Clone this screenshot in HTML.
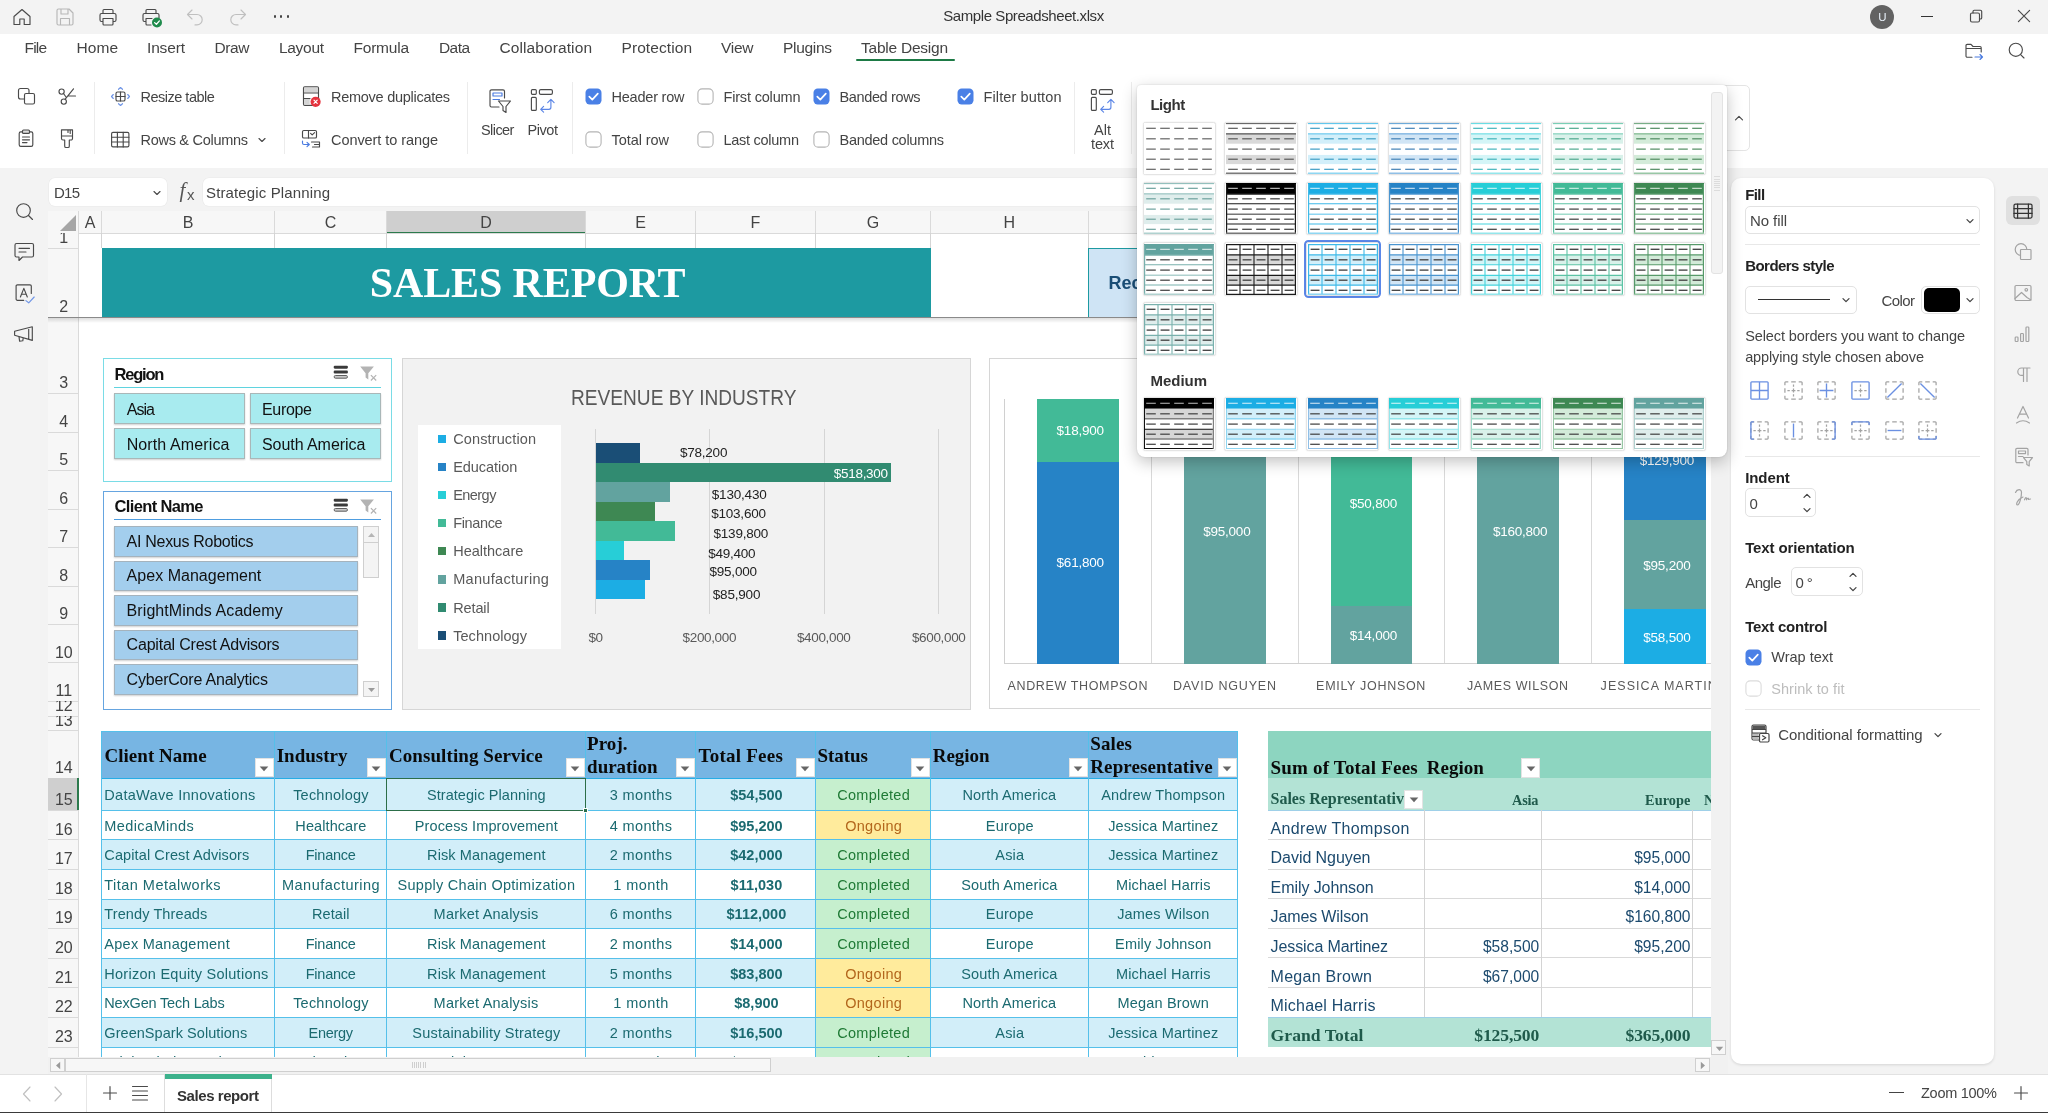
<!DOCTYPE html>
<html><head><meta charset="utf-8"><title>Sample Spreadsheet.xlsx</title>
<style>
html,body{margin:0;padding:0;}
body{width:2048px;height:1113px;overflow:hidden;position:relative;background:#f3f3f3;font-family:'Liberation Sans',sans-serif;}
div,svg,span.t{position:absolute;}
#root{left:0;top:0;width:2048px;height:1113px;will-change:transform;}
span.t{white-space:nowrap;}
.clip{overflow:hidden;}
</style></head>
<body>
<div id="root">
<div style="left:0px;top:0px;width:2048px;height:33.6px;background:#f3f3f3;"></div>
<svg style="left:12px;top:7px;" width="20" height="20" viewBox="0 0 20 20" fill="none" stroke="#4a4a4a" stroke-width="1.15" stroke-linecap="round" stroke-linejoin="round"><path d="M2 9.5 L10 2.5 L18 9.5 V17.5 H12.2 V12 H7.8 V17.5 H2 Z"/></svg>
<svg style="left:55px;top:7px;opacity:.35;" width="20" height="20" viewBox="0 0 20 20" fill="none" stroke="#4a4a4a" stroke-width="1.15" stroke-linecap="round" stroke-linejoin="round"><path d="M2 3.5 a1.5 1.5 0 0 1 1.5 -1.5 H14 L18 6 V16.5 a1.5 1.5 0 0 1 -1.5 1.5 H3.5 a1.5 1.5 0 0 1 -1.5 -1.5 Z M6 2 V7 H13 V2 M5.5 18 V11.5 H14.5 V18"/></svg>
<svg style="left:98px;top:7px;" width="20" height="20" viewBox="0 0 20 20" fill="none" stroke="#4a4a4a" stroke-width="1.15" stroke-linecap="round" stroke-linejoin="round"><path d="M5 6.5 V3.5 a1 1 0 0 1 1 -1 H14 a1 1 0 0 1 1 1 V6.5 M5 14.5 H3.5 a1.5 1.5 0 0 1 -1.5 -1.5 V8 a1.5 1.5 0 0 1 1.5 -1.5 H16.5 a1.5 1.5 0 0 1 1.5 1.5 V13 a1.5 1.5 0 0 1 -1.5 1.5 H15 M5 11.5 H15 V17 a1 1 0 0 1 -1 1 H6 a1 1 0 0 1 -1 -1 Z"/></svg>
<svg style="left:141px;top:7px;" width="24" height="22" viewBox="0 0 24 22" fill="none" stroke="#4a4a4a" stroke-width="1.15" stroke-linecap="round" stroke-linejoin="round"><path d="M5 6.5 V3.5 a1 1 0 0 1 1 -1 H14 a1 1 0 0 1 1 1 V6.5 M5 14.5 H3.5 a1.5 1.5 0 0 1 -1.5 -1.5 V8 a1.5 1.5 0 0 1 1.5 -1.5 H16.5 a1.5 1.5 0 0 1 1.5 1.5 V11 M5 17 V11.5 H11 M5 17 a1 1 0 0 0 1 1 H10"/><circle cx="16" cy="15.5" r="5" fill="#1f8b4c" stroke="none"/><path d="M13.6 15.6 L15.4 17.3 L18.4 13.9" stroke="#fff" stroke-width="1.3"/></svg>
<svg style="left:185px;top:7px;opacity:.3;" width="20" height="20" viewBox="0 0 20 20" fill="none" stroke="#4a4a4a" stroke-width="1.15" stroke-linecap="round" stroke-linejoin="round"><path d="M7 3 L2.5 7.5 L7 12 M2.5 7.5 H12 a5.2 5.2 0 0 1 0 10.4 H10"/></svg>
<svg style="left:228px;top:7px;opacity:.3;" width="20" height="20" viewBox="0 0 20 20" fill="none" stroke="#4a4a4a" stroke-width="1.15" stroke-linecap="round" stroke-linejoin="round"><path d="M13 3 L17.5 7.5 L13 12 M17.5 7.5 H8 a5.2 5.2 0 0 0 0 10.4 H10"/></svg>
<div style="left:273.5px;top:15.3px;width:2.4px;height:2.4px;background:#444;border-radius:50%;"></div>
<div style="left:280.0px;top:15.3px;width:2.4px;height:2.4px;background:#444;border-radius:50%;"></div>
<div style="left:286.5px;top:15.3px;width:2.4px;height:2.4px;background:#444;border-radius:50%;"></div>
<span class="t" style="left:943.20px;top:5.00px;font-size:15px;line-height:21px;color:#333;letter-spacing:-0.413px;">Sample Spreadsheet.xlsx</span>
<div style="left:1870.2px;top:4.9px;width:24.2px;height:24.2px;background:#626262;border-radius:50%;"></div>
<span class="t" style="left:1878.15px;top:9.30px;font-size:11.5px;line-height:16px;color:#e8f0f8;">U</span>
<div style="left:1921px;top:16px;width:12px;height:1.3px;background:#333;"></div>
<svg style="left:1967.7px;top:7.6px;" width="16" height="16" viewBox="0 0 16 16" fill="none" stroke="#4a4a4a" stroke-width="1.15" stroke-linecap="round" stroke-linejoin="round"><rect x="2.5" y="5" width="9" height="9" rx="1.5"/><path d="M5 5 V3.5 a1.3 1.3 0 0 1 1.3 -1.3 H12.4 a1.3 1.3 0 0 1 1.3 1.3 V9.7 a1.3 1.3 0 0 1 -1.3 1.3 H11.5"/></svg>
<svg style="left:2016.4px;top:7.7px;" width="16" height="16" viewBox="0 0 16 16" fill="none" stroke="#4a4a4a" stroke-width="1.15" stroke-linecap="round" stroke-linejoin="round"><path d="M2.4 2.4 L13.6 13.6 M13.6 2.4 L2.4 13.6"/></svg>
<div style="left:0px;top:33.6px;width:2048px;height:134.4px;background:#fff;"></div>
<span class="t" style="left:24.50px;top:36.50px;font-size:15.5px;line-height:22px;color:#444;letter-spacing:-0.825px;">File</span>
<span class="t" style="left:76.50px;top:36.50px;font-size:15.5px;line-height:22px;color:#444;letter-spacing:0.051px;">Home</span>
<span class="t" style="left:147.00px;top:36.50px;font-size:15.5px;line-height:22px;color:#444;letter-spacing:-0.153px;">Insert</span>
<span class="t" style="left:214.50px;top:36.50px;font-size:15.5px;line-height:22px;color:#444;letter-spacing:-0.390px;">Draw</span>
<span class="t" style="left:279.00px;top:36.50px;font-size:15.5px;line-height:22px;color:#444;letter-spacing:-0.308px;">Layout</span>
<span class="t" style="left:353.50px;top:36.50px;font-size:15.5px;line-height:22px;color:#444;letter-spacing:-0.224px;">Formula</span>
<span class="t" style="left:439.00px;top:36.50px;font-size:15.5px;line-height:22px;color:#444;letter-spacing:-0.580px;">Data</span>
<span class="t" style="left:499.50px;top:36.50px;font-size:15.5px;line-height:22px;color:#444;letter-spacing:0.097px;">Collaboration</span>
<span class="t" style="left:621.50px;top:36.50px;font-size:15.5px;line-height:22px;color:#444;letter-spacing:0.079px;">Protection</span>
<span class="t" style="left:721.00px;top:36.50px;font-size:15.5px;line-height:22px;color:#444;letter-spacing:-0.272px;">View</span>
<span class="t" style="left:783.00px;top:36.50px;font-size:15.5px;line-height:22px;color:#444;letter-spacing:-0.306px;">Plugins</span>
<span class="t" style="left:861.00px;top:36.50px;font-size:15.5px;line-height:22px;color:#444;letter-spacing:-0.237px;">Table Design</span>
<div style="left:856px;top:59px;width:99px;height:2px;background:#1d7a45;border-radius:1px;"></div>
<svg style="left:1963px;top:40px;" width="22" height="22" viewBox="0 0 22 22" fill="none" stroke="#4a4a4a" stroke-width="1.15" stroke-linecap="round" stroke-linejoin="round"><path d="M3 16 V5.5 a1.2 1.2 0 0 1 1.2 -1.2 H8 L10 6.5 H17 a1.2 1.2 0 0 1 1.2 1.2 V12 M3 16 a1.2 1.2 0 0 0 1.2 1.2 H9 M3 8.5 H18"/><path d="M12 17 H19.5 M17 14.5 L19.5 17 L17 19.5" stroke="#4a7be0"/></svg>
<svg style="left:2006px;top:40px;" width="22" height="22" viewBox="0 0 22 22" fill="none" stroke="#4a4a4a" stroke-width="1.15" stroke-linecap="round" stroke-linejoin="round"><circle cx="9.8" cy="9.8" r="6.6"/><path d="M14.6 14.6 L18 18"/></svg>
<div style="left:93.5px;top:82px;width:1px;height:72px;background:#ececec;"></div>
<div style="left:284.0px;top:82px;width:1px;height:72px;background:#ececec;"></div>
<div style="left:466.5px;top:82px;width:1px;height:72px;background:#ececec;"></div>
<div style="left:571.5px;top:82px;width:1px;height:72px;background:#ececec;"></div>
<div style="left:1073.5px;top:82px;width:1px;height:72px;background:#ececec;"></div>
<div style="left:1131.0px;top:82px;width:1px;height:72px;background:#ececec;"></div>
<svg style="left:16px;top:86px;" width="20" height="20" viewBox="0 0 20 20" fill="none" stroke="#4a4a4a" stroke-width="1.15" stroke-linecap="round" stroke-linejoin="round"><rect x="2.5" y="2.5" width="10.5" height="10.5" rx="2" /><rect x="8.5" y="7.5" width="10" height="10.5" rx="1.5" fill="#fff"/></svg>
<svg style="left:57px;top:86px;" width="20" height="20" viewBox="0 0 20 20" fill="none" stroke="#4a4a4a" stroke-width="1.15" stroke-linecap="round" stroke-linejoin="round"><circle cx="4.6" cy="5.6" r="2.6"/><circle cx="6.8" cy="15.6" r="2.6"/><path d="M6.5 7.5 L9 11 M8.2 13.2 L16.5 2.8 M11.5 10 H18.5"/></svg>
<svg style="left:16px;top:128px;" width="20" height="20" viewBox="0 0 20 20" fill="none" stroke="#4a4a4a" stroke-width="1.15" stroke-linecap="round" stroke-linejoin="round"><rect x="3.2" y="3.8" width="13.6" height="14.6" rx="1.6"/><rect x="6.5" y="2" width="7" height="3.4" rx="1" fill="#ddd"/><path d="M6.5 9 H13.5 M6.5 11.8 H13.5 M6.5 14.6 H11"/></svg>
<svg style="left:57px;top:128px;" width="20" height="22" viewBox="0 0 20 22" fill="none" stroke="#4a4a4a" stroke-width="1.15" stroke-linecap="round" stroke-linejoin="round"><path d="M4.5 1.8 H15.5 V10.5 a1.5 1.5 0 0 1 -1.5 1.5 H12.3 V18.2 a1.3 1.3 0 0 1 -1.3 1.3 H9 a1.3 1.3 0 0 1 -1.3 -1.3 V12 H6 a1.5 1.5 0 0 1 -1.5 -1.5 Z M4.5 8 H15.5 M11 2 V4.5 M13.2 2 V5.5"/></svg>
<svg style="left:110px;top:86px;" width="22" height="22" viewBox="0 0 22 22" fill="none" stroke="#4a4a4a" stroke-width="1.15" stroke-linecap="round" stroke-linejoin="round"><rect x="6" y="6" width="9" height="9" rx="1.6"/><path d="M10.5 6 V15 M6 10.5 H15"/><g stroke="#6f95e6"><path d="M8.5 3.3 L10.5 1.5 L12.5 3.3 M8.5 17.7 L10.5 19.5 L12.5 17.7 M3.3 8.5 L1.5 10.5 L3.3 12.5 M17.7 8.5 L19.5 10.5 L17.7 12.5"/></g></svg>
<span class="t" style="left:140.50px;top:86.50px;font-size:14.5px;line-height:20px;color:#444;letter-spacing:-0.499px;">Resize table</span>
<svg style="left:110px;top:130px;" width="22" height="20" viewBox="0 0 22 20" fill="none" stroke="#4a4a4a" stroke-width="1.15" stroke-linecap="round" stroke-linejoin="round"><rect x="1.6" y="2.3" width="17.3" height="14.6" rx="1.4"/><path d="M1.6 7.2 H18.9 M1.6 12 H18.9 M7.4 2.3 V16.9 M13.2 2.3 V16.9"/></svg>
<span class="t" style="left:140.50px;top:129.50px;font-size:14.5px;line-height:20px;color:#444;letter-spacing:-0.285px;">Rows &amp; Columns</span>
<svg style="left:257px;top:135px;" width="10" height="10" viewBox="0 0 10 10" fill="none" stroke="#4a4a4a" stroke-width="1.15" stroke-linecap="round" stroke-linejoin="round"><path d="M2 3.5 L5 6.5 L8 3.5"/></svg>
<svg style="left:301px;top:85px;" width="24" height="24" viewBox="0 0 24 24" fill="none" stroke="#4a4a4a" stroke-width="1.15" stroke-linecap="round" stroke-linejoin="round"><rect x="2.5" y="1.8" width="15" height="18.5" rx="1.3"/><path d="M2.5 7.8 H17.5 M2.5 13.6 H9"/><rect x="3.1" y="2.4" width="13.8" height="5" fill="#d4d4d4" stroke="none"/><rect x="3.1" y="14" width="5.6" height="5.7" fill="#d4d4d4" stroke="none"/><circle cx="14.6" cy="16.8" r="5.1" fill="#e5343f" stroke="none"/><path d="M13 15.2 L16.2 18.4 M16.2 15.2 L13 18.4" stroke="#fff" stroke-width="1.2"/></svg>
<span class="t" style="left:331.00px;top:86.50px;font-size:14.5px;line-height:20px;color:#444;letter-spacing:-0.270px;">Remove duplicates</span>
<svg style="left:300px;top:128px;" width="24" height="22" viewBox="0 0 24 22" fill="none" stroke="#4a4a4a" stroke-width="1.15" stroke-linecap="round" stroke-linejoin="round"><rect x="2.5" y="2.5" width="14" height="7.5" rx="1.3"/><path d="M8.5 2.5 V10 M10.6 5.3 L12.2 6.9 L14.6 4.6"/><path d="M11.5 14 H19.5 V19 H12.5 M14.5 16.5 H19"/><path d="M2.5 13 V15 a1.5 1.5 0 0 0 1.5 1.5 H9 M7 14.3 L9.3 16.5 L7 18.7" stroke="#4a7be0"/></svg>
<span class="t" style="left:331.00px;top:129.50px;font-size:14.5px;line-height:20px;color:#444;letter-spacing:-0.067px;">Convert to range</span>
<svg style="left:485.8px;top:87px;" width="26" height="28" viewBox="0 0 26 28" fill="none" stroke="#4a4a4a" stroke-width="1.15" stroke-linecap="round" stroke-linejoin="round"><path d="M18.5 11 V4.3 a1.5 1.5 0 0 0 -1.5 -1.5 H5.5 a1.5 1.5 0 0 0 -1.5 1.5 V18.5 a1.5 1.5 0 0 0 1.5 1.5 H13"/><rect x="7" y="6" width="9" height="3" stroke="#4a7be0"/><path d="M7 12.5 H13.5" stroke="#4a7be0"/><path d="M12.5 14 H24.5 L20 19.5 V25.5 L17 23.5 V19.5 Z" fill="#fff"/></svg>
<span class="t" style="left:480.95px;top:119.50px;font-size:14.5px;line-height:20px;color:#444;letter-spacing:-0.551px;">Slicer</span>
<svg style="left:530px;top:87px;" width="26" height="28" viewBox="0 0 26 28" fill="none" stroke="#4a4a4a" stroke-width="1.15" stroke-linecap="round" stroke-linejoin="round"><rect x="1.4" y="2.6" width="4.9" height="4.7" rx="1"/><rect x="9.4" y="2.6" width="13" height="4.7" rx="1.4"/><rect x="1.4" y="10.4" width="4.9" height="13" rx="1"/><path d="M20.9 12.6 V20.3 a2 2 0 0 1 -2 2 H10.9 M17.7 15.6 L20.9 12.4 L24.1 15.6 M13.6 19.4 L10.7 22.3 L13.6 25.2" stroke="#5c86e6"/></svg>
<span class="t" style="left:527.45px;top:119.50px;font-size:14.5px;line-height:20px;color:#444;letter-spacing:-0.434px;">Pivot</span>
<svg style="left:1089.7px;top:87px;" width="26" height="28" viewBox="0 0 26 28" fill="none" stroke="#4a4a4a" stroke-width="1.15" stroke-linecap="round" stroke-linejoin="round"><rect x="1.4" y="2.6" width="4.9" height="4.7" rx="1"/><rect x="9.4" y="2.6" width="13" height="4.7" rx="1.4"/><rect x="1.4" y="10.4" width="4.9" height="13" rx="1"/><path d="M20.9 12.6 V20.3 a2 2 0 0 1 -2 2 H10.9 M17.7 15.6 L20.9 12.4 L24.1 15.6 M13.6 19.4 L10.7 22.3 L13.6 25.2" stroke="#5c86e6"/></svg>
<span class="t" style="left:1094.00px;top:119.50px;font-size:14.5px;line-height:20px;color:#444;letter-spacing:0.039px;">Alt</span>
<span class="t" style="left:1091.00px;top:133.50px;font-size:14.5px;line-height:20px;color:#444;letter-spacing:-0.124px;">text</span>
<svg style="left:585px;top:88px" width="17" height="17" viewBox="0 0 17 17"><rect x="0.5" y="0.5" width="16" height="16" rx="4.2" fill="#4a80e6"/><path d="M4.3 8.7 L7.3 11.6 L12.8 5.6" fill="none" stroke="#fff" stroke-width="1.7" stroke-linecap="round" stroke-linejoin="round"/></svg>
<span class="t" style="left:611.50px;top:86.50px;font-size:14.5px;line-height:20px;color:#444;letter-spacing:-0.217px;">Header row</span>
<svg style="left:697px;top:88px" width="17" height="17" viewBox="0 0 17 17"><rect x="0.9" y="0.9" width="15.2" height="15.2" rx="4.2" fill="#fff" stroke="#b4b4b4" stroke-width="1.1"/></svg>
<span class="t" style="left:723.50px;top:86.50px;font-size:14.5px;line-height:20px;color:#444;letter-spacing:-0.178px;">First column</span>
<svg style="left:813px;top:88px" width="17" height="17" viewBox="0 0 17 17"><rect x="0.5" y="0.5" width="16" height="16" rx="4.2" fill="#4a80e6"/><path d="M4.3 8.7 L7.3 11.6 L12.8 5.6" fill="none" stroke="#fff" stroke-width="1.7" stroke-linecap="round" stroke-linejoin="round"/></svg>
<span class="t" style="left:839.50px;top:86.50px;font-size:14.5px;line-height:20px;color:#444;letter-spacing:-0.364px;">Banded rows</span>
<svg style="left:957px;top:88px" width="17" height="17" viewBox="0 0 17 17"><rect x="0.5" y="0.5" width="16" height="16" rx="4.2" fill="#4a80e6"/><path d="M4.3 8.7 L7.3 11.6 L12.8 5.6" fill="none" stroke="#fff" stroke-width="1.7" stroke-linecap="round" stroke-linejoin="round"/></svg>
<span class="t" style="left:983.50px;top:86.50px;font-size:14.5px;line-height:20px;color:#444;letter-spacing:0.120px;">Filter button</span>
<svg style="left:585px;top:131px" width="17" height="17" viewBox="0 0 17 17"><rect x="0.9" y="0.9" width="15.2" height="15.2" rx="4.2" fill="#fff" stroke="#b4b4b4" stroke-width="1.1"/></svg>
<span class="t" style="left:611.50px;top:129.50px;font-size:14.5px;line-height:20px;color:#444;letter-spacing:-0.065px;">Total row</span>
<svg style="left:697px;top:131px" width="17" height="17" viewBox="0 0 17 17"><rect x="0.9" y="0.9" width="15.2" height="15.2" rx="4.2" fill="#fff" stroke="#b4b4b4" stroke-width="1.1"/></svg>
<span class="t" style="left:723.50px;top:129.50px;font-size:14.5px;line-height:20px;color:#444;letter-spacing:-0.268px;">Last column</span>
<svg style="left:813px;top:131px" width="17" height="17" viewBox="0 0 17 17"><rect x="0.9" y="0.9" width="15.2" height="15.2" rx="4.2" fill="#fff" stroke="#b4b4b4" stroke-width="1.1"/></svg>
<span class="t" style="left:839.50px;top:129.50px;font-size:14.5px;line-height:20px;color:#444;letter-spacing:-0.270px;">Banded columns</span>
<div style="left:1137px;top:84.5px;width:611.3px;height:64.9px;border:1px solid #e4e4e4;border-radius:5px;background:#fff;"></div>
<svg style="left:1733px;top:113px;" width="12" height="10" viewBox="0 0 12 10" fill="none" stroke="#4a4a4a" stroke-width="1.15" stroke-linecap="round" stroke-linejoin="round"><path d="M2.5 6.8 L6 3.3 L9.5 6.8"/></svg>
<svg style="left:13px;top:200px;" width="24" height="24" viewBox="0 0 24 24" fill="none" stroke="#4a4a4a" stroke-width="1.15" stroke-linecap="round" stroke-linejoin="round"><circle cx="10.5" cy="10.5" r="6.8"/><path d="M15.5 15.5 L19.5 19.5"/></svg>
<svg style="left:12px;top:240px;" width="24" height="24" viewBox="0 0 24 24" fill="none" stroke="#4a4a4a" stroke-width="1.15" stroke-linecap="round" stroke-linejoin="round"><path d="M3 5 a1.5 1.5 0 0 1 1.5 -1.5 H20 a1.5 1.5 0 0 1 1.5 1.5 V15.5 a1.5 1.5 0 0 1 -1.5 1.5 H10.5 L7 20.5 V17 H4.5 a1.5 1.5 0 0 1 -1.5 -1.5 Z M7 8.3 H17.5 M7 12 H14"/></svg>
<svg style="left:12px;top:280px;" width="26" height="26" viewBox="0 0 26 26" fill="none" stroke="#4a4a4a" stroke-width="1.15" stroke-linecap="round" stroke-linejoin="round"><path d="M11.7 20.3 H5.4 a1.3 1.3 0 0 1 -1.3 -1.3 V6.1 a1.3 1.3 0 0 1 1.3 -1.3 H18 a1.3 1.3 0 0 1 1.3 1.3 V13.4"/><path d="M8.4 17 L11.85 8.4 L15.3 17 M9.6 14.2 H14.1"/><path d="M13.9 20.6 L16.7 22.8 L22.2 17" stroke="#6f95e6"/></svg>
<svg style="left:12px;top:321px;" width="26" height="26" viewBox="0 0 26 26" fill="none" stroke="#4a4a4a" stroke-width="1.15" stroke-linecap="round" stroke-linejoin="round"><path d="M2.6 10.3 L20.3 5.8 V19.4 L2.6 14.3 Z M16.7 6.8 V18.4 M7 15.8 L7.6 20.2 L10.8 19.8 L11.2 17"/></svg>
<div style="left:48.8px;top:178.3px;width:118.1px;height:28.1px;background:#fff;border-radius:6px;box-shadow:0 0 0 0.6px #e9e9e9;"></div>
<span class="t" style="left:54.00px;top:182.00px;font-size:15px;line-height:21px;color:#444;letter-spacing:-0.759px;">D15</span>
<svg style="left:152px;top:188px;" width="10" height="10" viewBox="0 0 10 10" fill="none" stroke="#4a4a4a" stroke-width="1.15" stroke-linecap="round" stroke-linejoin="round"><path d="M2 3.5 L5 6.5 L8 3.5"/></svg>
<span class="t" style="left:179.50px;top:176.00px;font-size:21px;line-height:29px;color:#555;font-family:'Liberation Serif', serif;font-style:italic;">f</span>
<span class="t" style="left:187.00px;top:183.50px;font-size:15px;line-height:21px;color:#555;">x</span>
<div style="left:202.8px;top:178.3px;width:1524px;height:28.1px;background:#fff;border-radius:6px;box-shadow:0 0 0 0.6px #e9e9e9;"></div>
<span class="t" style="left:206.00px;top:182.00px;font-size:15px;line-height:21px;color:#444;letter-spacing:0.133px;">Strategic Planning</span>
<div style="left:0px;top:1074.3px;width:2048px;height:39px;background:#fff;border-top:1px solid #e2e2e2;box-sizing:border-box;"></div>
<div style="left:0px;top:1111.5px;width:2048px;height:1.5px;background:#3a3a3a;"></div>
<svg style="left:20px;top:1084px;opacity:.35;" width="14" height="20" viewBox="0 0 14 20" fill="none" stroke="#4a4a4a" stroke-width="1.15" stroke-linecap="round" stroke-linejoin="round"><path d="M10 3 L3.5 10 L10 17"/></svg>
<svg style="left:51px;top:1084px;opacity:.35;" width="14" height="20" viewBox="0 0 14 20" fill="none" stroke="#4a4a4a" stroke-width="1.15" stroke-linecap="round" stroke-linejoin="round"><path d="M4 3 L10.5 10 L4 17"/></svg>
<div style="left:86px;top:1074px;width:1px;height:38px;background:#e6e6e6;"></div>
<svg style="left:102px;top:1085px;" width="16" height="16" viewBox="0 0 16 16" fill="none" stroke="#4a4a4a" stroke-width="1.15" stroke-linecap="round" stroke-linejoin="round"><path d="M8 1.5 V14.5 M1.5 8 H14.5"/></svg>
<svg style="left:131px;top:1084px;" width="18" height="18" viewBox="0 0 18 18" fill="none" stroke="#4a4a4a" stroke-width="1.15" stroke-linecap="round" stroke-linejoin="round"><path d="M1.5 2.5 H16.5 M1.5 7 H16.5 M1.5 11.5 H16.5 M1.5 16 H16.5" stroke-width="1.1"/></svg>
<div style="left:164px;top:1074px;width:108px;height:38px;border-left:1px solid #ddd;border-right:1px solid #ddd;box-sizing:border-box;"></div>
<div style="left:164.5px;top:1074px;width:107px;height:4.5px;background:#3db28c;"></div>
<span class="t" style="left:177.00px;top:1084.50px;font-size:15px;line-height:21px;color:#333;font-weight:700;letter-spacing:-0.428px;">Sales report</span>
<div style="left:1889px;top:1092.3px;width:14.5px;height:1.2px;background:#444;"></div>
<span class="t" style="left:1921.00px;top:1083.40px;font-size:14.5px;line-height:20px;color:#444;letter-spacing:-0.272px;">Zoom 100%</span>
<svg style="left:2013px;top:1085.1px;" width="16" height="16" viewBox="0 0 16 16" fill="none" stroke="#4a4a4a" stroke-width="1.15" stroke-linecap="round" stroke-linejoin="round"><path d="M8 1.5 V14.5 M1.5 8 H14.5"/></svg>
<div class="clip" style="left:0;top:0;width:1711px;height:1056.6px;">
<div style="left:78.7px;top:233.4px;width:1640px;height:830px;background:#fff;"></div>
<div style="left:48px;top:211px;width:1670px;height:22.9px;background:#f7f7f7;border-bottom:1px solid #dadada;box-sizing:border-box;"></div>
<div style="left:101.2px;top:211px;width:1px;height:22.4px;background:#dadada;"></div>
<span class="t" style="left:84.86px;top:212.10px;font-size:16px;line-height:22px;color:#444;">A</span>
<div style="left:274.0px;top:211px;width:1px;height:22.4px;background:#dadada;"></div>
<span class="t" style="left:182.76px;top:212.10px;font-size:16px;line-height:22px;color:#444;">B</span>
<div style="left:386.0px;top:211px;width:1px;height:22.4px;background:#dadada;"></div>
<span class="t" style="left:324.72px;top:212.10px;font-size:16px;line-height:22px;color:#444;">C</span>
<div style="left:386.5px;top:211px;width:199.0px;height:22.4px;background:#cfcfcf;"></div>
<div style="left:386.5px;top:231.6px;width:199.0px;height:1.8px;background:#2c7a4d;"></div>
<div style="left:585.0px;top:211px;width:1px;height:22.4px;background:#dadada;"></div>
<span class="t" style="left:480.22px;top:212.10px;font-size:16px;line-height:22px;color:#444;">D</span>
<div style="left:695.0px;top:211px;width:1px;height:22.4px;background:#dadada;"></div>
<span class="t" style="left:635.16px;top:212.10px;font-size:16px;line-height:22px;color:#444;">E</span>
<div style="left:815.0px;top:211px;width:1px;height:22.4px;background:#dadada;"></div>
<span class="t" style="left:750.61px;top:212.10px;font-size:16px;line-height:22px;color:#444;">F</span>
<div style="left:930.0px;top:211px;width:1px;height:22.4px;background:#dadada;"></div>
<span class="t" style="left:866.78px;top:212.10px;font-size:16px;line-height:22px;color:#444;">G</span>
<div style="left:1087.8px;top:211px;width:1px;height:22.4px;background:#dadada;"></div>
<span class="t" style="left:1003.62px;top:212.10px;font-size:16px;line-height:22px;color:#444;">H</span>
<div style="left:1237.0px;top:211px;width:1px;height:22.4px;background:#dadada;"></div>
<div style="left:78.2px;top:211px;width:1px;height:22.4px;background:#dadada;"></div>
<svg style="left:59px;top:214px" width="18" height="18" viewBox="0 0 18 18"><path d="M17 1 V17 H1 Z" fill="#a6a6a6"/></svg>
<div style="left:48px;top:233.4px;width:30.7px;height:830px;background:#f7f7f7;border-right:1px solid #dadada;box-sizing:border-box;"></div>
<div style="left:48px;top:247.9px;width:30.2px;height:1px;background:#dadada;"></div>
<div class="clip" style="left:48px;top:233.4px;width:30px;height:14.5px;">
<span class="t" style="left:11.35px;top:-6.30px;font-size:16px;line-height:22px;color:#444;">1</span>
</div>
<div style="left:48px;top:316.7px;width:30.2px;height:1px;background:#dadada;"></div>
<div class="clip" style="left:48px;top:248.4px;width:30px;height:68.3px;">
<span class="t" style="left:11.35px;top:47.50px;font-size:16px;line-height:22px;color:#444;">2</span>
</div>
<div style="left:48px;top:393.3px;width:30.2px;height:1px;background:#dadada;"></div>
<div class="clip" style="left:48px;top:317.2px;width:30px;height:76.1px;">
<span class="t" style="left:11.35px;top:55.30px;font-size:16px;line-height:22px;color:#444;">3</span>
</div>
<div style="left:48px;top:431.7px;width:30.2px;height:1px;background:#dadada;"></div>
<div class="clip" style="left:48px;top:393.8px;width:30px;height:37.9px;">
<span class="t" style="left:11.35px;top:17.10px;font-size:16px;line-height:22px;color:#444;">4</span>
</div>
<div style="left:48px;top:470.2px;width:30.2px;height:1px;background:#dadada;"></div>
<div class="clip" style="left:48px;top:432.2px;width:30px;height:38.0px;">
<span class="t" style="left:11.35px;top:17.20px;font-size:16px;line-height:22px;color:#444;">5</span>
</div>
<div style="left:48px;top:508.7px;width:30.2px;height:1px;background:#dadada;"></div>
<div class="clip" style="left:48px;top:470.7px;width:30px;height:38.0px;">
<span class="t" style="left:11.35px;top:17.20px;font-size:16px;line-height:22px;color:#444;">6</span>
</div>
<div style="left:48px;top:547.1px;width:30.2px;height:1px;background:#dadada;"></div>
<div class="clip" style="left:48px;top:509.2px;width:30px;height:37.9px;">
<span class="t" style="left:11.35px;top:17.10px;font-size:16px;line-height:22px;color:#444;">7</span>
</div>
<div style="left:48px;top:585.5px;width:30.2px;height:1px;background:#dadada;"></div>
<div class="clip" style="left:48px;top:547.6px;width:30px;height:37.9px;">
<span class="t" style="left:11.35px;top:17.10px;font-size:16px;line-height:22px;color:#444;">8</span>
</div>
<div style="left:48px;top:623.9px;width:30.2px;height:1px;background:#dadada;"></div>
<div class="clip" style="left:48px;top:586.0px;width:30px;height:37.9px;">
<span class="t" style="left:11.35px;top:17.10px;font-size:16px;line-height:22px;color:#444;">9</span>
</div>
<div style="left:48px;top:662.4px;width:30.2px;height:1px;background:#dadada;"></div>
<div class="clip" style="left:48px;top:624.4px;width:30px;height:38.0px;">
<span class="t" style="left:6.90px;top:17.20px;font-size:16px;line-height:22px;color:#444;">10</span>
</div>
<div style="left:48px;top:700.8px;width:30.2px;height:1px;background:#dadada;"></div>
<div class="clip" style="left:48px;top:662.9px;width:30px;height:37.9px;">
<span class="t" style="left:7.50px;top:17.10px;font-size:16px;line-height:22px;color:#444;">11</span>
</div>
<div style="left:48px;top:715.8px;width:30.2px;height:1px;background:#dadada;"></div>
<div class="clip" style="left:48px;top:701.3px;width:30px;height:14.5px;">
<span class="t" style="left:6.90px;top:-6.30px;font-size:16px;line-height:22px;color:#444;">12</span>
</div>
<div style="left:48px;top:730.4px;width:30.2px;height:1px;background:#dadada;"></div>
<div class="clip" style="left:48px;top:716.3px;width:30px;height:14.1px;">
<span class="t" style="left:6.90px;top:-6.70px;font-size:16px;line-height:22px;color:#444;">13</span>
</div>
<div style="left:48px;top:777.8px;width:30.2px;height:1px;background:#dadada;"></div>
<div class="clip" style="left:48px;top:730.9px;width:30px;height:46.9px;">
<span class="t" style="left:6.90px;top:26.10px;font-size:16px;line-height:22px;color:#444;">14</span>
</div>
<div style="left:48px;top:778.3px;width:30.7px;height:32.0px;background:#cfcfcf;"></div>
<div style="left:76.9px;top:778.3px;width:1.8px;height:32.0px;background:#2c7a4d;"></div>
<div style="left:48px;top:809.8px;width:30.2px;height:1px;background:#dadada;"></div>
<div class="clip" style="left:48px;top:778.3px;width:30px;height:31.5px;">
<span class="t" style="left:6.90px;top:10.70px;font-size:16px;line-height:22px;color:#444;">15</span>
</div>
<div style="left:48px;top:839.4px;width:30.2px;height:1px;background:#dadada;"></div>
<div class="clip" style="left:48px;top:810.3px;width:30px;height:29.1px;">
<span class="t" style="left:6.90px;top:8.30px;font-size:16px;line-height:22px;color:#444;">16</span>
</div>
<div style="left:48px;top:869.0px;width:30.2px;height:1px;background:#dadada;"></div>
<div class="clip" style="left:48px;top:839.9px;width:30px;height:29.1px;">
<span class="t" style="left:6.90px;top:8.30px;font-size:16px;line-height:22px;color:#444;">17</span>
</div>
<div style="left:48px;top:898.6px;width:30.2px;height:1px;background:#dadada;"></div>
<div class="clip" style="left:48px;top:869.5px;width:30px;height:29.1px;">
<span class="t" style="left:6.90px;top:8.30px;font-size:16px;line-height:22px;color:#444;">18</span>
</div>
<div style="left:48px;top:928.2px;width:30.2px;height:1px;background:#dadada;"></div>
<div class="clip" style="left:48px;top:899.1px;width:30px;height:29.1px;">
<span class="t" style="left:6.90px;top:8.30px;font-size:16px;line-height:22px;color:#444;">19</span>
</div>
<div style="left:48px;top:957.8px;width:30.2px;height:1px;background:#dadada;"></div>
<div class="clip" style="left:48px;top:928.7px;width:30px;height:29.1px;">
<span class="t" style="left:6.90px;top:8.30px;font-size:16px;line-height:22px;color:#444;">20</span>
</div>
<div style="left:48px;top:987.4px;width:30.2px;height:1px;background:#dadada;"></div>
<div class="clip" style="left:48px;top:958.3px;width:30px;height:29.1px;">
<span class="t" style="left:6.90px;top:8.30px;font-size:16px;line-height:22px;color:#444;">21</span>
</div>
<div style="left:48px;top:1017.0px;width:30.2px;height:1px;background:#dadada;"></div>
<div class="clip" style="left:48px;top:987.9px;width:30px;height:29.1px;">
<span class="t" style="left:6.90px;top:8.30px;font-size:16px;line-height:22px;color:#444;">22</span>
</div>
<div style="left:48px;top:1046.6px;width:30.2px;height:1px;background:#dadada;"></div>
<div class="clip" style="left:48px;top:1017.5px;width:30px;height:29.1px;">
<span class="t" style="left:6.90px;top:8.30px;font-size:16px;line-height:22px;color:#444;">23</span>
</div>
<div style="left:48px;top:1076.2px;width:30.2px;height:1px;background:#dadada;"></div>
<div class="clip" style="left:48px;top:1047.1px;width:30px;height:29.1px;">
<span class="t" style="left:6.90px;top:8.30px;font-size:16px;line-height:22px;color:#444;">24</span>
</div>
<div style="left:101.2px;top:233.4px;width:1px;height:15px;background:#d4d4d4;"></div>
<div style="left:274.0px;top:233.4px;width:1px;height:15px;background:#d4d4d4;"></div>
<div style="left:386.0px;top:233.4px;width:1px;height:15px;background:#d4d4d4;"></div>
<div style="left:585.0px;top:233.4px;width:1px;height:15px;background:#d4d4d4;"></div>
<div style="left:695.0px;top:233.4px;width:1px;height:15px;background:#d4d4d4;"></div>
<div style="left:815.0px;top:233.4px;width:1px;height:15px;background:#d4d4d4;"></div>
<div style="left:930.0px;top:233.4px;width:1px;height:15px;background:#d4d4d4;"></div>
<div style="left:1087.8px;top:233.4px;width:1px;height:15px;background:#d4d4d4;"></div>
<div style="left:1237.0px;top:233.4px;width:1px;height:15px;background:#d4d4d4;"></div>
<div style="left:101.7px;top:248.4px;width:829.4px;height:68.4px;background:#1d9aa1;"></div>
<span class="t" style="left:369.70px;top:253.70px;font-size:42px;line-height:59px;color:#fff;font-weight:700;font-family:'Liberation Serif', serif;letter-spacing:-0.119px;">SALES REPORT</span>
<div style="left:1088.3px;top:248.4px;width:160px;height:68.4px;background:#cfe4f5;border-left:1.2px solid #1d9aa1;border-top:1.2px solid #1d9aa1;box-sizing:border-box;"></div>
<span class="t" style="left:1108.40px;top:271.00px;font-size:18px;line-height:25px;color:#1a4e76;font-weight:700;">Recent</span>
<div style="left:48px;top:316.6px;width:1670px;height:1.2px;background:#8a8a8a;"></div>
<div style="left:48px;top:317.8px;width:1670px;height:5px;background:linear-gradient(rgba(0,0,0,.13),rgba(0,0,0,0));"></div>
<div style="left:103.1px;top:358.2px;width:288.8px;height:124.3px;background:#fff;border:1.2px solid #7adce6;box-sizing:border-box;"></div>
<span class="t" style="left:114.60px;top:363.10px;font-size:16.5px;line-height:23px;color:#111;font-weight:700;letter-spacing:-1.243px;">Region</span>
<svg style="left:333px;top:365.2px" width="16" height="15" viewBox="0 0 16 15"><rect x="0.7" y="0.7" width="14.2" height="3" rx="1.1" fill="#3a3a3a"/><rect x="0.7" y="5.6" width="14.2" height="3" rx="1.1" fill="#3a3a3a"/><rect x="1.2" y="10.5" width="13.2" height="2.7" rx="1.2" fill="#c9c9c9" stroke="#5e5e5e" stroke-width="1"/></svg>
<svg style="left:359px;top:365.2px" width="20" height="17" viewBox="0 0 20 17"><path d="M1.2 1.5 H14.9 L9.3 8.2 V14.4 L6.6 12.4 V8.2 Z" fill="#b3b3b3"/><path d="M11.9 10.2 L17.2 15.5 M17.2 10.2 L11.9 15.5" stroke="#b3b3b3" stroke-width="1.2" fill="none"/></svg>
<div style="left:114.3px;top:386.9px;width:266.4px;height:1.2px;background:#5fd3df;"></div>
<div style="left:114.3px;top:393px;width:131.2px;height:30.8px;background:#a8ebef;border:1px solid #a9b7b8;box-sizing:border-box;box-shadow:0 1px 1.5px rgba(0,0,0,.18);"></div>
<span class="t" style="left:126.70px;top:398.90px;font-size:16px;line-height:22px;color:#111;letter-spacing:-0.975px;">Asia</span>
<div style="left:249.6px;top:393px;width:131.2px;height:30.8px;background:#a8ebef;border:1px solid #a9b7b8;box-sizing:border-box;box-shadow:0 1px 1.5px rgba(0,0,0,.18);"></div>
<span class="t" style="left:262.00px;top:398.90px;font-size:16px;line-height:22px;color:#111;letter-spacing:-0.319px;">Europe</span>
<div style="left:114.3px;top:428.2px;width:131.2px;height:30.8px;background:#a8ebef;border:1px solid #a9b7b8;box-sizing:border-box;box-shadow:0 1px 1.5px rgba(0,0,0,.18);"></div>
<span class="t" style="left:126.70px;top:434.10px;font-size:16px;line-height:22px;color:#111;letter-spacing:0.112px;">North America</span>
<div style="left:249.6px;top:428.2px;width:131.2px;height:30.8px;background:#a8ebef;border:1px solid #a9b7b8;box-sizing:border-box;box-shadow:0 1px 1.5px rgba(0,0,0,.18);"></div>
<span class="t" style="left:262.00px;top:434.10px;font-size:16px;line-height:22px;color:#111;letter-spacing:-0.061px;">South America</span>
<div style="left:103.1px;top:491.0px;width:288.8px;height:218.5px;background:#fff;border:1.2px solid #66a5e0;box-sizing:border-box;"></div>
<span class="t" style="left:114.60px;top:494.90px;font-size:16.5px;line-height:23px;color:#111;font-weight:700;letter-spacing:-0.646px;">Client Name</span>
<svg style="left:333px;top:497.5px" width="16" height="15" viewBox="0 0 16 15"><rect x="0.7" y="0.7" width="14.2" height="3" rx="1.1" fill="#3a3a3a"/><rect x="0.7" y="5.6" width="14.2" height="3" rx="1.1" fill="#3a3a3a"/><rect x="1.2" y="10.5" width="13.2" height="2.7" rx="1.2" fill="#c9c9c9" stroke="#5e5e5e" stroke-width="1"/></svg>
<svg style="left:359px;top:497.5px" width="20" height="17" viewBox="0 0 20 17"><path d="M1.2 1.5 H14.9 L9.3 8.2 V14.4 L6.6 12.4 V8.2 Z" fill="#b3b3b3"/><path d="M11.9 10.2 L17.2 15.5 M17.2 10.2 L11.9 15.5" stroke="#b3b3b3" stroke-width="1.2" fill="none"/></svg>
<div style="left:114.3px;top:518.9px;width:266.4px;height:1.2px;background:#4e9de0;"></div>
<div style="left:114.3px;top:526.0px;width:244.1px;height:30.5px;background:#a3ceed;border:1px solid #a5b3bd;box-sizing:border-box;box-shadow:0 1px 1.5px rgba(0,0,0,.18);"></div>
<span class="t" style="left:126.60px;top:530.60px;font-size:16px;line-height:22px;color:#111;letter-spacing:-0.294px;">AI Nexus Robotics</span>
<div style="left:114.3px;top:560.6px;width:244.1px;height:30.5px;background:#a3ceed;border:1px solid #a5b3bd;box-sizing:border-box;box-shadow:0 1px 1.5px rgba(0,0,0,.18);"></div>
<span class="t" style="left:126.60px;top:565.20px;font-size:16px;line-height:22px;color:#111;letter-spacing:0.028px;">Apex Management</span>
<div style="left:114.3px;top:595.2px;width:244.1px;height:30.5px;background:#a3ceed;border:1px solid #a5b3bd;box-sizing:border-box;box-shadow:0 1px 1.5px rgba(0,0,0,.18);"></div>
<span class="t" style="left:126.60px;top:599.80px;font-size:16px;line-height:22px;color:#111;letter-spacing:0.077px;">BrightMinds Academy</span>
<div style="left:114.3px;top:629.8px;width:244.1px;height:30.5px;background:#a3ceed;border:1px solid #a5b3bd;box-sizing:border-box;box-shadow:0 1px 1.5px rgba(0,0,0,.18);"></div>
<span class="t" style="left:126.60px;top:634.40px;font-size:16px;line-height:22px;color:#111;letter-spacing:-0.208px;">Capital Crest Advisors</span>
<div style="left:114.3px;top:664.4px;width:244.1px;height:30.5px;background:#a3ceed;border:1px solid #a5b3bd;box-sizing:border-box;box-shadow:0 1px 1.5px rgba(0,0,0,.18);"></div>
<span class="t" style="left:126.60px;top:669.00px;font-size:16px;line-height:22px;color:#111;letter-spacing:-0.202px;">CyberCore Analytics</span>
<div style="left:363.2px;top:526.3px;width:15.5px;height:16.6px;background:#f4f4f4;border:1px solid #cfcfcf;box-sizing:border-box;"></div>
<div style="left:363.2px;top:542.4px;width:15.5px;height:36px;background:#f4f4f4;border:1px solid #cfcfcf;box-sizing:border-box;"></div>
<div style="left:363.2px;top:681.3px;width:15.5px;height:15.3px;background:#f4f4f4;border:1px solid #cfcfcf;box-sizing:border-box;"></div>
<svg style="left:366.5px;top:531.5px" width="9" height="6" viewBox="0 0 9 6"><path d="M1 5 L4.5 1 L8 5 Z" fill="#b5b5b5"/></svg>
<svg style="left:366.5px;top:686.5px" width="9" height="6" viewBox="0 0 9 6"><path d="M1 1 L4.5 5 L8 1 Z" fill="#9a9a9a"/></svg>
<div style="left:402px;top:358px;width:569.2px;height:351.6px;background:#f2f2f2;border:1px solid #d6d6d6;box-sizing:border-box;"></div>
<span class="t" style="left:570.50px;top:382.10px;font-size:22px;line-height:31px;color:#595959;transform:scaleX(0.8685);transform-origin:0 50%;">REVENUE BY INDUSTRY</span>
<div style="left:418.3px;top:425.1px;width:142.9px;height:224.1px;background:#fff;"></div>
<div style="left:437.6px;top:434.8px;width:8.4px;height:8.4px;background:#1cade4;"></div>
<span class="t" style="left:453.20px;top:429.10px;font-size:14.5px;line-height:20px;color:#595959;letter-spacing:0.127px;">Construction</span>
<div style="left:437.6px;top:462.87px;width:8.4px;height:8.4px;background:#2683c6;"></div>
<span class="t" style="left:453.20px;top:457.17px;font-size:14.5px;line-height:20px;color:#595959;letter-spacing:-0.049px;">Education</span>
<div style="left:437.6px;top:490.94px;width:8.4px;height:8.4px;background:#27ced7;"></div>
<span class="t" style="left:453.20px;top:485.24px;font-size:14.5px;line-height:20px;color:#595959;letter-spacing:-0.549px;">Energy</span>
<div style="left:437.6px;top:519.0100000000001px;width:8.4px;height:8.4px;background:#42ba97;"></div>
<span class="t" style="left:453.20px;top:513.31px;font-size:14.5px;line-height:20px;color:#595959;letter-spacing:-0.348px;">Finance</span>
<div style="left:437.6px;top:547.08px;width:8.4px;height:8.4px;background:#3e8853;"></div>
<span class="t" style="left:453.20px;top:541.38px;font-size:14.5px;line-height:20px;color:#595959;">Healthcare</span>
<div style="left:437.6px;top:575.1500000000001px;width:8.4px;height:8.4px;background:#62a39f;"></div>
<span class="t" style="left:453.20px;top:569.45px;font-size:14.5px;line-height:20px;color:#595959;letter-spacing:0.318px;">Manufacturing</span>
<div style="left:437.6px;top:603.22px;width:8.4px;height:8.4px;background:#318b71;"></div>
<span class="t" style="left:453.20px;top:597.52px;font-size:14.5px;line-height:20px;color:#595959;letter-spacing:-0.114px;">Retail</span>
<div style="left:437.6px;top:631.2900000000001px;width:8.4px;height:8.4px;background:#1a4e76;"></div>
<span class="t" style="left:453.20px;top:625.59px;font-size:14.5px;line-height:20px;color:#595959;letter-spacing:0.049px;">Technology</span>
<div style="left:595.3px;top:429.1px;width:1px;height:185.2px;background:#d5d5d5;"></div>
<div style="left:709.4px;top:429.1px;width:1px;height:185.2px;background:#d5d5d5;"></div>
<div style="left:823.7px;top:429.1px;width:1px;height:185.2px;background:#d5d5d5;"></div>
<div style="left:938.1px;top:429.1px;width:1px;height:185.2px;background:#d5d5d5;"></div>
<div style="left:596.1px;top:443.4px;width:44.19999999999993px;height:19.6px;background:#1a4e76;"></div>
<div style="left:596.1px;top:462.84999999999997px;width:295.4px;height:19.6px;background:#318b71;"></div>
<div style="left:596.1px;top:482.29999999999995px;width:74.19999999999993px;height:19.6px;background:#62a39f;"></div>
<div style="left:596.1px;top:501.75px;width:58.89999999999998px;height:19.6px;background:#3e8853;"></div>
<div style="left:596.1px;top:521.1999999999999px;width:79.39999999999998px;height:19.6px;background:#42ba97;"></div>
<div style="left:596.1px;top:540.65px;width:27.899999999999977px;height:19.6px;background:#27ced7;"></div>
<div style="left:596.1px;top:560.0999999999999px;width:53.799999999999955px;height:19.6px;background:#2683c6;"></div>
<div style="left:596.1px;top:579.55px;width:48.799999999999955px;height:19.6px;background:#1cade4;"></div>
<span class="t" style="left:679.90px;top:442.90px;font-size:13.5px;line-height:19px;color:#222;letter-spacing:-0.217px;">$78,200</span>
<span class="t" style="left:833.80px;top:463.80px;font-size:13.5px;line-height:19px;color:#fff;letter-spacing:-0.301px;">$518,300</span>
<span class="t" style="left:711.80px;top:484.80px;font-size:13.5px;line-height:19px;color:#222;letter-spacing:-0.201px;">$130,430</span>
<span class="t" style="left:711.20px;top:504.10px;font-size:13.5px;line-height:19px;color:#222;letter-spacing:-0.215px;">$103,600</span>
<span class="t" style="left:713.50px;top:524.30px;font-size:13.5px;line-height:19px;color:#222;letter-spacing:-0.215px;">$139,800</span>
<span class="t" style="left:708.20px;top:543.60px;font-size:13.5px;line-height:19px;color:#222;letter-spacing:-0.267px;">$49,400</span>
<span class="t" style="left:709.50px;top:562.40px;font-size:13.5px;line-height:19px;color:#222;letter-spacing:-0.217px;">$95,000</span>
<span class="t" style="left:712.80px;top:584.80px;font-size:13.5px;line-height:19px;color:#222;letter-spacing:-0.200px;">$85,900</span>
<span class="t" style="left:588.55px;top:627.70px;font-size:13.5px;line-height:19px;color:#595959;letter-spacing:-0.516px;">$0</span>
<span class="t" style="left:682.55px;top:627.70px;font-size:13.5px;line-height:19px;color:#595959;letter-spacing:-0.344px;">$200,000</span>
<span class="t" style="left:796.95px;top:627.70px;font-size:13.5px;line-height:19px;color:#595959;letter-spacing:-0.344px;">$400,000</span>
<span class="t" style="left:911.95px;top:627.70px;font-size:13.5px;line-height:19px;color:#595959;letter-spacing:-0.344px;">$600,000</span>
<div style="left:989px;top:358px;width:760px;height:350.5px;background:#fff;border:1px solid #d6d6d6;box-sizing:border-box;"></div>
<div style="left:1004px;top:398.7px;width:1px;height:264.50000000000006px;background:#d0d0d0;"></div>
<div style="left:1004px;top:663.2px;width:720px;height:1px;background:#d0d0d0;"></div>
<div style="left:1150.5px;top:398.7px;width:1px;height:264.50000000000006px;background:#d9d9d9;"></div>
<div style="left:1297.7px;top:398.7px;width:1px;height:264.50000000000006px;background:#d9d9d9;"></div>
<div style="left:1444.2px;top:398.7px;width:1px;height:264.50000000000006px;background:#d9d9d9;"></div>
<div style="left:1591.0px;top:398.7px;width:1px;height:264.50000000000006px;background:#d9d9d9;"></div>
<div style="left:1037.4px;top:398.7px;width:81.8px;height:63.800000000000026px;background:#42ba97;"></div>
<div style="left:1037.4px;top:461.8px;width:81.8px;height:202.10000000000002px;background:#2683c6;"></div>
<div style="left:1184.0px;top:398.7px;width:81.8px;height:265.20000000000005px;background:#62a39f;"></div>
<div style="left:1330.6px;top:398.7px;width:81.8px;height:208.29999999999995px;background:#42ba97;"></div>
<div style="left:1330.6px;top:606.3px;width:81.8px;height:57.600000000000094px;background:#62a39f;"></div>
<div style="left:1477.4px;top:398.7px;width:81.8px;height:265.20000000000005px;background:#62a39f;"></div>
<div style="left:1624.1px;top:398.7px;width:81.8px;height:121.60000000000004px;background:#2683c6;"></div>
<div style="left:1624.1px;top:519.6px;width:81.8px;height:89.59999999999998px;background:#62a39f;"></div>
<div style="left:1624.1px;top:608.5px;width:81.8px;height:55.40000000000005px;background:#1cade4;"></div>
<span class="t" style="left:1056.55px;top:421.10px;font-size:13.5px;line-height:19px;color:#fff;letter-spacing:-0.217px;">$18,900</span>
<span class="t" style="left:1056.55px;top:553.20px;font-size:13.5px;line-height:19px;color:#fff;letter-spacing:-0.217px;">$61,800</span>
<span class="t" style="left:1203.15px;top:522.10px;font-size:13.5px;line-height:19px;color:#fff;letter-spacing:-0.217px;">$95,000</span>
<span class="t" style="left:1349.75px;top:493.90px;font-size:13.5px;line-height:19px;color:#fff;letter-spacing:-0.217px;">$50,800</span>
<span class="t" style="left:1349.75px;top:626.10px;font-size:13.5px;line-height:19px;color:#fff;letter-spacing:-0.217px;">$14,000</span>
<span class="t" style="left:1493.00px;top:522.10px;font-size:13.5px;line-height:19px;color:#fff;letter-spacing:-0.244px;">$160,800</span>
<span class="t" style="left:1639.70px;top:451.30px;font-size:13.5px;line-height:19px;color:#fff;letter-spacing:-0.244px;">$129,900</span>
<span class="t" style="left:1643.25px;top:555.50px;font-size:13.5px;line-height:19px;color:#fff;letter-spacing:-0.217px;">$95,200</span>
<span class="t" style="left:1643.25px;top:627.50px;font-size:13.5px;line-height:19px;color:#fff;letter-spacing:-0.217px;">$58,500</span>
<span class="t" style="left:1007.50px;top:677.30px;font-size:12.5px;line-height:18px;color:#595959;letter-spacing:0.639px;">ANDREW THOMPSON</span>
<span class="t" style="left:1173.00px;top:677.30px;font-size:12.5px;line-height:18px;color:#595959;letter-spacing:0.789px;">DAVID NGUYEN</span>
<span class="t" style="left:1316.10px;top:677.30px;font-size:12.5px;line-height:18px;color:#595959;letter-spacing:0.694px;">EMILY JOHNSON</span>
<span class="t" style="left:1467.00px;top:677.30px;font-size:12.5px;line-height:18px;color:#595959;letter-spacing:0.595px;">JAMES WILSON</span>
<span class="t" style="left:1600.60px;top:677.30px;font-size:12.5px;line-height:18px;color:#595959;letter-spacing:1.051px;">JESSICA MARTINEZ</span>
<div style="left:101.7px;top:731.2px;width:1135.8px;height:47.1px;background:#77b5e3;"></div>
<span class="t" style="left:104.50px;top:742.30px;font-size:19px;line-height:27px;color:#0a0a0a;font-weight:700;font-family:'Liberation Serif', serif;letter-spacing:0.026px;">Client Name</span>
<div style="left:254.7px;top:758.2px;width:19px;height:19px;background:#fff;border:1px solid #e3e3e3;box-sizing:border-box;"></div>
<svg style="left:259.2px;top:766.3px" width="10" height="6" viewBox="0 0 10 6"><path d="M0.7 0.6 H9.3 L5 5.2 Z" fill="#666"/></svg>
<span class="t" style="left:276.70px;top:742.30px;font-size:19px;line-height:27px;color:#0a0a0a;font-weight:700;font-family:'Liberation Serif', serif;letter-spacing:-0.007px;">Industry</span>
<div style="left:366.7px;top:758.2px;width:19px;height:19px;background:#fff;border:1px solid #e3e3e3;box-sizing:border-box;"></div>
<svg style="left:371.2px;top:766.3px" width="10" height="6" viewBox="0 0 10 6"><path d="M0.7 0.6 H9.3 L5 5.2 Z" fill="#666"/></svg>
<span class="t" style="left:389.00px;top:742.30px;font-size:19px;line-height:27px;color:#0a0a0a;font-weight:700;font-family:'Liberation Serif', serif;letter-spacing:0.075px;">Consulting Service</span>
<div style="left:565.7px;top:758.2px;width:19px;height:19px;background:#fff;border:1px solid #e3e3e3;box-sizing:border-box;"></div>
<svg style="left:570.2px;top:766.3px" width="10" height="6" viewBox="0 0 10 6"><path d="M0.7 0.6 H9.3 L5 5.2 Z" fill="#666"/></svg>
<span class="t" style="left:587.10px;top:730.10px;font-size:19px;line-height:27px;color:#0a0a0a;font-weight:700;font-family:'Liberation Serif', serif;letter-spacing:0.032px;">Proj.</span>
<span class="t" style="left:587.10px;top:753.00px;font-size:19px;line-height:27px;color:#0a0a0a;font-weight:700;font-family:'Liberation Serif', serif;letter-spacing:-0.034px;">duration</span>
<div style="left:675.7px;top:758.2px;width:19px;height:19px;background:#fff;border:1px solid #e3e3e3;box-sizing:border-box;"></div>
<svg style="left:680.2px;top:766.3px" width="10" height="6" viewBox="0 0 10 6"><path d="M0.7 0.6 H9.3 L5 5.2 Z" fill="#666"/></svg>
<span class="t" style="left:698.50px;top:742.30px;font-size:19px;line-height:27px;color:#0a0a0a;font-weight:700;font-family:'Liberation Serif', serif;letter-spacing:0.239px;">Total Fees</span>
<div style="left:795.7px;top:758.2px;width:19px;height:19px;background:#fff;border:1px solid #e3e3e3;box-sizing:border-box;"></div>
<svg style="left:800.2px;top:766.3px" width="10" height="6" viewBox="0 0 10 6"><path d="M0.7 0.6 H9.3 L5 5.2 Z" fill="#666"/></svg>
<span class="t" style="left:817.40px;top:742.30px;font-size:19px;line-height:27px;color:#0a0a0a;font-weight:700;font-family:'Liberation Serif', serif;letter-spacing:-0.016px;">Status</span>
<div style="left:910.7px;top:758.2px;width:19px;height:19px;background:#fff;border:1px solid #e3e3e3;box-sizing:border-box;"></div>
<svg style="left:915.2px;top:766.3px" width="10" height="6" viewBox="0 0 10 6"><path d="M0.7 0.6 H9.3 L5 5.2 Z" fill="#666"/></svg>
<span class="t" style="left:932.70px;top:742.30px;font-size:19px;line-height:27px;color:#0a0a0a;font-weight:700;font-family:'Liberation Serif', serif;letter-spacing:-0.020px;">Region</span>
<div style="left:1068.5px;top:758.2px;width:19px;height:19px;background:#fff;border:1px solid #e3e3e3;box-sizing:border-box;"></div>
<svg style="left:1073.0px;top:766.3px" width="10" height="6" viewBox="0 0 10 6"><path d="M0.7 0.6 H9.3 L5 5.2 Z" fill="#666"/></svg>
<span class="t" style="left:1090.30px;top:730.10px;font-size:19px;line-height:27px;color:#0a0a0a;font-weight:700;font-family:'Liberation Serif', serif;letter-spacing:0.082px;">Sales</span>
<span class="t" style="left:1090.30px;top:753.00px;font-size:19px;line-height:27px;color:#0a0a0a;font-weight:700;font-family:'Liberation Serif', serif;letter-spacing:0.100px;">Representative</span>
<div style="left:1217.7px;top:758.2px;width:19px;height:19px;background:#fff;border:1px solid #e3e3e3;box-sizing:border-box;"></div>
<svg style="left:1222.2px;top:766.3px" width="10" height="6" viewBox="0 0 10 6"><path d="M0.7 0.6 H9.3 L5 5.2 Z" fill="#666"/></svg>
<div style="left:101.7px;top:778.3px;width:1135.8px;height:32.0px;background:#d2eef9;"></div>
<span class="t" style="left:104.30px;top:784.70px;font-size:14.5px;line-height:20px;color:#1b6a70;letter-spacing:0.298px;">DataWave Innovations</span>
<span class="t" style="left:293.15px;top:784.70px;font-size:14.5px;line-height:20px;color:#1b6a70;letter-spacing:0.216px;">Technology</span>
<span class="t" style="left:426.95px;top:784.70px;font-size:14.5px;line-height:20px;color:#1b6a70;letter-spacing:0.060px;">Strategic Planning</span>
<span class="t" style="left:609.65px;top:784.70px;font-size:14.5px;line-height:20px;color:#1b6a70;letter-spacing:0.380px;">3 months</span>
<span class="t" style="left:730.19px;top:784.70px;font-size:14.5px;line-height:20px;color:#1b6a70;font-weight:700;">$54,500</span>
<div style="left:815.5px;top:778.3px;width:115.0px;height:32.0px;background:#c6efce;"></div>
<span class="t" style="left:837.21px;top:784.70px;font-size:14.5px;line-height:20px;color:#1f7a35;letter-spacing:0.307px;">Completed</span>
<span class="t" style="left:962.44px;top:784.70px;font-size:14.5px;line-height:20px;color:#1b6a70;letter-spacing:0.154px;">North America</span>
<span class="t" style="left:1101.13px;top:784.70px;font-size:14.5px;line-height:20px;color:#1b6a70;letter-spacing:0.174px;">Andrew Thompson</span>
<span class="t" style="left:104.30px;top:815.50px;font-size:14.5px;line-height:20px;color:#1b6a70;letter-spacing:0.398px;">MedicaMinds</span>
<span class="t" style="left:295.35px;top:815.50px;font-size:14.5px;line-height:20px;color:#1b6a70;letter-spacing:0.087px;">Healthcare</span>
<span class="t" style="left:414.85px;top:815.50px;font-size:14.5px;line-height:20px;color:#1b6a70;letter-spacing:0.104px;">Process Improvement</span>
<span class="t" style="left:609.65px;top:815.50px;font-size:14.5px;line-height:20px;color:#1b6a70;letter-spacing:0.380px;">4 months</span>
<span class="t" style="left:730.19px;top:815.50px;font-size:14.5px;line-height:20px;color:#1b6a70;font-weight:700;">$95,200</span>
<div style="left:815.5px;top:810.3px;width:115.0px;height:29.600000000000023px;background:#ffeb9c;"></div>
<span class="t" style="left:845.13px;top:815.50px;font-size:14.5px;line-height:20px;color:#b3661c;letter-spacing:0.320px;">Ongoing</span>
<span class="t" style="left:985.85px;top:815.50px;font-size:14.5px;line-height:20px;color:#1b6a70;letter-spacing:0.187px;">Europe</span>
<span class="t" style="left:1108.13px;top:815.50px;font-size:14.5px;line-height:20px;color:#1b6a70;letter-spacing:0.144px;">Jessica Martinez</span>
<div style="left:101.7px;top:839.9px;width:1135.8px;height:29.600000000000023px;background:#d2eef9;"></div>
<span class="t" style="left:104.30px;top:845.10px;font-size:14.5px;line-height:20px;color:#1b6a70;letter-spacing:0.113px;">Capital Crest Advisors</span>
<span class="t" style="left:305.75px;top:845.10px;font-size:14.5px;line-height:20px;color:#1b6a70;letter-spacing:-0.248px;">Finance</span>
<span class="t" style="left:427.10px;top:845.10px;font-size:14.5px;line-height:20px;color:#1b6a70;letter-spacing:0.110px;">Risk Management</span>
<span class="t" style="left:609.65px;top:845.10px;font-size:14.5px;line-height:20px;color:#1b6a70;letter-spacing:0.380px;">2 months</span>
<span class="t" style="left:730.19px;top:845.10px;font-size:14.5px;line-height:20px;color:#1b6a70;font-weight:700;">$42,000</span>
<div style="left:815.5px;top:839.9px;width:115.0px;height:29.600000000000023px;background:#c6efce;"></div>
<span class="t" style="left:837.21px;top:845.10px;font-size:14.5px;line-height:20px;color:#1f7a35;letter-spacing:0.307px;">Completed</span>
<span class="t" style="left:995.31px;top:845.10px;font-size:14.5px;line-height:20px;color:#1b6a70;letter-spacing:0.188px;">Asia</span>
<span class="t" style="left:1108.13px;top:845.10px;font-size:14.5px;line-height:20px;color:#1b6a70;letter-spacing:0.144px;">Jessica Martinez</span>
<span class="t" style="left:104.30px;top:874.70px;font-size:14.5px;line-height:20px;color:#1b6a70;letter-spacing:0.470px;">Titan Metalworks</span>
<span class="t" style="left:282.00px;top:874.70px;font-size:14.5px;line-height:20px;color:#1b6a70;letter-spacing:0.476px;">Manufacturing</span>
<span class="t" style="left:397.60px;top:874.70px;font-size:14.5px;line-height:20px;color:#1b6a70;letter-spacing:0.272px;">Supply Chain Optimization</span>
<span class="t" style="left:613.35px;top:874.70px;font-size:14.5px;line-height:20px;color:#1b6a70;letter-spacing:0.418px;">1 month</span>
<span class="t" style="left:730.59px;top:874.70px;font-size:14.5px;line-height:20px;color:#1b6a70;font-weight:700;">$11,030</span>
<div style="left:815.5px;top:869.5px;width:115.0px;height:29.600000000000023px;background:#c6efce;"></div>
<span class="t" style="left:837.21px;top:874.70px;font-size:14.5px;line-height:20px;color:#1f7a35;letter-spacing:0.307px;">Completed</span>
<span class="t" style="left:961.20px;top:874.70px;font-size:14.5px;line-height:20px;color:#1b6a70;letter-spacing:0.158px;">South America</span>
<span class="t" style="left:1115.94px;top:874.70px;font-size:14.5px;line-height:20px;color:#1b6a70;letter-spacing:0.143px;">Michael Harris</span>
<div style="left:101.7px;top:899.1px;width:1135.8px;height:29.600000000000023px;background:#d2eef9;"></div>
<span class="t" style="left:104.30px;top:904.30px;font-size:14.5px;line-height:20px;color:#1b6a70;letter-spacing:0.107px;">Trendy Threads</span>
<span class="t" style="left:312.05px;top:904.30px;font-size:14.5px;line-height:20px;color:#1b6a70;letter-spacing:0.086px;">Retail</span>
<span class="t" style="left:433.60px;top:904.30px;font-size:14.5px;line-height:20px;color:#1b6a70;letter-spacing:0.219px;">Market Analysis</span>
<span class="t" style="left:609.65px;top:904.30px;font-size:14.5px;line-height:20px;color:#1b6a70;letter-spacing:0.380px;">6 months</span>
<span class="t" style="left:726.56px;top:904.30px;font-size:14.5px;line-height:20px;color:#1b6a70;font-weight:700;">$112,000</span>
<div style="left:815.5px;top:899.1px;width:115.0px;height:29.600000000000023px;background:#c6efce;"></div>
<span class="t" style="left:837.21px;top:904.30px;font-size:14.5px;line-height:20px;color:#1f7a35;letter-spacing:0.307px;">Completed</span>
<span class="t" style="left:985.85px;top:904.30px;font-size:14.5px;line-height:20px;color:#1b6a70;letter-spacing:0.187px;">Europe</span>
<span class="t" style="left:1117.18px;top:904.30px;font-size:14.5px;line-height:20px;color:#1b6a70;letter-spacing:0.164px;">James Wilson</span>
<span class="t" style="left:104.30px;top:933.90px;font-size:14.5px;line-height:20px;color:#1b6a70;letter-spacing:0.263px;">Apex Management</span>
<span class="t" style="left:305.75px;top:933.90px;font-size:14.5px;line-height:20px;color:#1b6a70;letter-spacing:-0.248px;">Finance</span>
<span class="t" style="left:427.10px;top:933.90px;font-size:14.5px;line-height:20px;color:#1b6a70;letter-spacing:0.110px;">Risk Management</span>
<span class="t" style="left:609.65px;top:933.90px;font-size:14.5px;line-height:20px;color:#1b6a70;letter-spacing:0.380px;">2 months</span>
<span class="t" style="left:730.19px;top:933.90px;font-size:14.5px;line-height:20px;color:#1b6a70;font-weight:700;">$14,000</span>
<div style="left:815.5px;top:928.7px;width:115.0px;height:29.59999999999991px;background:#c6efce;"></div>
<span class="t" style="left:837.21px;top:933.90px;font-size:14.5px;line-height:20px;color:#1f7a35;letter-spacing:0.307px;">Completed</span>
<span class="t" style="left:985.85px;top:933.90px;font-size:14.5px;line-height:20px;color:#1b6a70;letter-spacing:0.187px;">Europe</span>
<span class="t" style="left:1115.11px;top:933.90px;font-size:14.5px;line-height:20px;color:#1b6a70;letter-spacing:0.157px;">Emily Johnson</span>
<div style="left:101.7px;top:958.3px;width:1135.8px;height:29.600000000000023px;background:#d2eef9;"></div>
<span class="t" style="left:104.30px;top:963.50px;font-size:14.5px;line-height:20px;color:#1b6a70;letter-spacing:0.262px;">Horizon Equity Solutions</span>
<span class="t" style="left:305.75px;top:963.50px;font-size:14.5px;line-height:20px;color:#1b6a70;letter-spacing:-0.248px;">Finance</span>
<span class="t" style="left:427.10px;top:963.50px;font-size:14.5px;line-height:20px;color:#1b6a70;letter-spacing:0.110px;">Risk Management</span>
<span class="t" style="left:609.65px;top:963.50px;font-size:14.5px;line-height:20px;color:#1b6a70;letter-spacing:0.380px;">5 months</span>
<span class="t" style="left:730.19px;top:963.50px;font-size:14.5px;line-height:20px;color:#1b6a70;font-weight:700;">$83,800</span>
<div style="left:815.5px;top:958.3px;width:115.0px;height:29.600000000000023px;background:#ffeb9c;"></div>
<span class="t" style="left:845.13px;top:963.50px;font-size:14.5px;line-height:20px;color:#b3661c;letter-spacing:0.320px;">Ongoing</span>
<span class="t" style="left:961.20px;top:963.50px;font-size:14.5px;line-height:20px;color:#1b6a70;letter-spacing:0.158px;">South America</span>
<span class="t" style="left:1115.94px;top:963.50px;font-size:14.5px;line-height:20px;color:#1b6a70;letter-spacing:0.143px;">Michael Harris</span>
<span class="t" style="left:104.30px;top:993.10px;font-size:14.5px;line-height:20px;color:#1b6a70;letter-spacing:-0.181px;">NexGen Tech Labs</span>
<span class="t" style="left:293.15px;top:993.10px;font-size:14.5px;line-height:20px;color:#1b6a70;letter-spacing:0.216px;">Technology</span>
<span class="t" style="left:433.60px;top:993.10px;font-size:14.5px;line-height:20px;color:#1b6a70;letter-spacing:0.219px;">Market Analysis</span>
<span class="t" style="left:613.35px;top:993.10px;font-size:14.5px;line-height:20px;color:#1b6a70;letter-spacing:0.418px;">1 month</span>
<span class="t" style="left:734.23px;top:993.10px;font-size:14.5px;line-height:20px;color:#1b6a70;font-weight:700;">$8,900</span>
<div style="left:815.5px;top:987.9px;width:115.0px;height:29.600000000000023px;background:#ffeb9c;"></div>
<span class="t" style="left:845.13px;top:993.10px;font-size:14.5px;line-height:20px;color:#b3661c;letter-spacing:0.320px;">Ongoing</span>
<span class="t" style="left:962.44px;top:993.10px;font-size:14.5px;line-height:20px;color:#1b6a70;letter-spacing:0.154px;">North America</span>
<span class="t" style="left:1117.57px;top:993.10px;font-size:14.5px;line-height:20px;color:#1b6a70;letter-spacing:0.179px;">Megan Brown</span>
<div style="left:101.7px;top:1017.5px;width:1135.8px;height:29.59999999999991px;background:#d2eef9;"></div>
<span class="t" style="left:104.30px;top:1022.70px;font-size:14.5px;line-height:20px;color:#1b6a70;letter-spacing:0.055px;">GreenSpark Solutions</span>
<span class="t" style="left:308.55px;top:1022.70px;font-size:14.5px;line-height:20px;color:#1b6a70;letter-spacing:-0.289px;">Energy</span>
<span class="t" style="left:412.30px;top:1022.70px;font-size:14.5px;line-height:20px;color:#1b6a70;letter-spacing:0.206px;">Sustainability Strategy</span>
<span class="t" style="left:609.65px;top:1022.70px;font-size:14.5px;line-height:20px;color:#1b6a70;letter-spacing:0.380px;">2 months</span>
<span class="t" style="left:730.19px;top:1022.70px;font-size:14.5px;line-height:20px;color:#1b6a70;font-weight:700;">$16,500</span>
<div style="left:815.5px;top:1017.5px;width:115.0px;height:29.59999999999991px;background:#c6efce;"></div>
<span class="t" style="left:837.21px;top:1022.70px;font-size:14.5px;line-height:20px;color:#1f7a35;letter-spacing:0.307px;">Completed</span>
<span class="t" style="left:995.31px;top:1022.70px;font-size:14.5px;line-height:20px;color:#1b6a70;letter-spacing:0.188px;">Asia</span>
<span class="t" style="left:1108.13px;top:1022.70px;font-size:14.5px;line-height:20px;color:#1b6a70;letter-spacing:0.144px;">Jessica Martinez</span>
<span class="t" style="left:104.30px;top:1052.30px;font-size:14.5px;line-height:20px;color:#1b6a70;letter-spacing:0.313px;">BrightMinds Academy</span>
<span class="t" style="left:297.91px;top:1052.30px;font-size:14.5px;line-height:20px;color:#1b6a70;letter-spacing:0.161px;">Education</span>
<span class="t" style="left:429.45px;top:1052.30px;font-size:14.5px;line-height:20px;color:#1b6a70;letter-spacing:0.149px;">Training Program</span>
<span class="t" style="left:609.65px;top:1052.30px;font-size:14.5px;line-height:20px;color:#1b6a70;letter-spacing:0.380px;">3 months</span>
<span class="t" style="left:730.19px;top:1052.30px;font-size:14.5px;line-height:20px;color:#1b6a70;font-weight:700;">$95,000</span>
<div style="left:815.5px;top:1047.1px;width:115.0px;height:29.600000000000136px;background:#c6efce;"></div>
<span class="t" style="left:837.21px;top:1052.30px;font-size:14.5px;line-height:20px;color:#1f7a35;letter-spacing:0.307px;">Completed</span>
<span class="t" style="left:985.85px;top:1052.30px;font-size:14.5px;line-height:20px;color:#1b6a70;letter-spacing:0.187px;">Europe</span>
<span class="t" style="left:1116.75px;top:1052.30px;font-size:14.5px;line-height:20px;color:#1b6a70;letter-spacing:0.166px;">David Nguyen</span>
<div style="left:101.7px;top:730.6999999999999px;width:1135.8px;height:1.2px;background:#55c0ea;"></div>
<div style="left:101.7px;top:777.6999999999999px;width:1135.8px;height:1.2px;background:#55c0ea;"></div>
<div style="left:101.7px;top:809.6999999999999px;width:1135.8px;height:1.2px;background:#55c0ea;"></div>
<div style="left:101.7px;top:839.3px;width:1135.8px;height:1.2px;background:#55c0ea;"></div>
<div style="left:101.7px;top:868.9px;width:1135.8px;height:1.2px;background:#55c0ea;"></div>
<div style="left:101.7px;top:898.5px;width:1135.8px;height:1.2px;background:#55c0ea;"></div>
<div style="left:101.7px;top:928.1px;width:1135.8px;height:1.2px;background:#55c0ea;"></div>
<div style="left:101.7px;top:957.6999999999999px;width:1135.8px;height:1.2px;background:#55c0ea;"></div>
<div style="left:101.7px;top:987.3px;width:1135.8px;height:1.2px;background:#55c0ea;"></div>
<div style="left:101.7px;top:1016.9px;width:1135.8px;height:1.2px;background:#55c0ea;"></div>
<div style="left:101.7px;top:1046.5px;width:1135.8px;height:1.2px;background:#55c0ea;"></div>
<div style="left:101.7px;top:777.5px;width:1135.8px;height:1.6px;background:#27ade6;"></div>
<div style="left:101.10000000000001px;top:730.8px;width:1.2px;height:340px;background:#55c0ea;"></div>
<div style="left:273.9px;top:730.8px;width:1.2px;height:340px;background:#55c0ea;"></div>
<div style="left:385.9px;top:730.8px;width:1.2px;height:340px;background:#55c0ea;"></div>
<div style="left:584.9px;top:730.8px;width:1.2px;height:340px;background:#55c0ea;"></div>
<div style="left:694.9px;top:730.8px;width:1.2px;height:340px;background:#55c0ea;"></div>
<div style="left:814.9px;top:730.8px;width:1.2px;height:340px;background:#55c0ea;"></div>
<div style="left:929.9px;top:730.8px;width:1.2px;height:340px;background:#55c0ea;"></div>
<div style="left:1087.7px;top:730.8px;width:1.2px;height:340px;background:#55c0ea;"></div>
<div style="left:1236.9px;top:731.2px;width:1.2px;height:340px;background:#55c0ea;"></div>
<div style="left:386.0px;top:777.8px;width:200.2px;height:33.2px;border:1.6px solid #2c6e49;box-sizing:border-box;"></div>
<div style="left:582.8px;top:807.6px;width:5.4px;height:5.4px;background:#2c6e49;border:1px solid #fff;box-sizing:border-box;"></div>
<div style="left:1268px;top:730.6px;width:460px;height:47.6px;background:#8dd5c0;"></div>
<div style="left:1268px;top:778.2px;width:460px;height:32.2px;background:#b3e3d5;"></div>
<div style="left:1268px;top:810.0px;width:460px;height:1px;background:#9fd0e8;"></div>
<span class="t" style="left:1270.50px;top:753.90px;font-size:19px;line-height:27px;color:#0a0a0a;font-weight:700;font-family:'Liberation Serif', serif;letter-spacing:0.191px;">Sum of Total Fees</span>
<span class="t" style="left:1426.80px;top:753.90px;font-size:19px;line-height:27px;color:#0a0a0a;font-weight:700;font-family:'Liberation Serif', serif;">Region</span>
<div style="left:1521px;top:758.2px;width:19.4px;height:19.4px;background:#fff;border:1px solid #e3e3e3;box-sizing:border-box;"></div>
<svg style="left:1525.7px;top:766.3px" width="10" height="6" viewBox="0 0 10 6"><path d="M0.7 0.6 H9.3 L5 5.2 Z" fill="#666"/></svg>
<div class="clip" style="left:1268px;top:780px;width:136.3px;height:30px;">
<span class="t" style="left:2.50px;top:8.00px;font-size:16px;line-height:22px;color:#1f5a4b;font-weight:700;font-family:'Liberation Serif', serif;">Sales Representative</span>
</div>
<div style="left:1404.3px;top:789.5px;width:19.2px;height:19.2px;background:#fff;border:1px solid #e3e3e3;box-sizing:border-box;"></div>
<svg style="left:1409px;top:797.2px" width="10" height="6" viewBox="0 0 10 6"><path d="M0.7 0.6 H9.3 L5 5.2 Z" fill="#666"/></svg>
<span class="t" style="left:1512.00px;top:790.00px;font-size:14.3px;line-height:20px;color:#1f5a4b;font-weight:700;font-family:'Liberation Serif', serif;letter-spacing:-0.170px;">Asia</span>
<span class="t" style="left:1645.10px;top:790.00px;font-size:14.3px;line-height:20px;color:#1f5a4b;font-weight:700;font-family:'Liberation Serif', serif;letter-spacing:0.036px;">Europe</span>
<span class="t" style="left:1704.00px;top:790.00px;font-size:14.3px;line-height:20px;color:#1f5a4b;font-weight:700;font-family:'Liberation Serif', serif;">North America</span>
<span class="t" style="left:1270.60px;top:817.50px;font-size:16px;line-height:22px;color:#1c4a6e;letter-spacing:0.351px;">Andrew Thompson</span>
<div style="left:1268px;top:839.0px;width:460px;height:1px;background:#d9d9d9;"></div>
<span class="t" style="left:1270.60px;top:847.10px;font-size:16px;line-height:22px;color:#1c4a6e;letter-spacing:-0.055px;">David Nguyen</span>
<span class="t" style="left:1634.13px;top:847.10px;font-size:15.6px;line-height:22px;color:#1c4a6e;">$95,000</span>
<div style="left:1268px;top:868.6px;width:460px;height:1px;background:#d9d9d9;"></div>
<span class="t" style="left:1270.60px;top:876.70px;font-size:16px;line-height:22px;color:#1c4a6e;letter-spacing:-0.079px;">Emily Johnson</span>
<span class="t" style="left:1634.13px;top:876.70px;font-size:15.6px;line-height:22px;color:#1c4a6e;">$14,000</span>
<div style="left:1268px;top:898.2px;width:460px;height:1px;background:#d9d9d9;"></div>
<span class="t" style="left:1270.60px;top:906.30px;font-size:16px;line-height:22px;color:#1c4a6e;letter-spacing:-0.134px;">James Wilson</span>
<span class="t" style="left:1625.46px;top:906.30px;font-size:15.6px;line-height:22px;color:#1c4a6e;">$160,800</span>
<div style="left:1268px;top:927.8000000000001px;width:460px;height:1px;background:#d9d9d9;"></div>
<span class="t" style="left:1270.60px;top:935.90px;font-size:16px;line-height:22px;color:#1c4a6e;letter-spacing:-0.110px;">Jessica Martinez</span>
<span class="t" style="left:1482.93px;top:935.90px;font-size:15.6px;line-height:22px;color:#1c4a6e;">$58,500</span>
<span class="t" style="left:1634.13px;top:935.90px;font-size:15.6px;line-height:22px;color:#1c4a6e;">$95,200</span>
<div style="left:1268px;top:957.4000000000001px;width:460px;height:1px;background:#d9d9d9;"></div>
<span class="t" style="left:1270.60px;top:965.50px;font-size:16px;line-height:22px;color:#1c4a6e;letter-spacing:0.258px;">Megan Brown</span>
<span class="t" style="left:1482.93px;top:965.50px;font-size:15.6px;line-height:22px;color:#1c4a6e;">$67,000</span>
<div style="left:1268px;top:987.0000000000001px;width:460px;height:1px;background:#d9d9d9;"></div>
<span class="t" style="left:1270.60px;top:995.10px;font-size:16px;line-height:22px;color:#1c4a6e;letter-spacing:0.197px;">Michael Harris</span>
<div style="left:1423.7px;top:810.4px;width:1px;height:207.2px;background:#d4d4d4;"></div>
<div style="left:1540.8px;top:810.4px;width:1px;height:207.2px;background:#d4d4d4;"></div>
<div style="left:1692.0px;top:810.4px;width:1px;height:207.2px;background:#d4d4d4;"></div>
<div style="left:1268px;top:1017.3px;width:460px;height:29.6px;background:#b3e3d5;border-top:1px solid #9fd0e8;box-sizing:border-box;"></div>
<span class="t" style="left:1270.60px;top:1023.10px;font-size:17.6px;line-height:25px;color:#1f5a4b;font-weight:700;font-family:'Liberation Serif', serif;letter-spacing:0.048px;">Grand Total</span>
<span class="t" style="left:1474.30px;top:1023.10px;font-size:17.6px;line-height:25px;color:#1f5a4b;font-weight:700;font-family:'Liberation Serif', serif;letter-spacing:-0.140px;">$125,500</span>
<span class="t" style="left:1625.50px;top:1023.10px;font-size:17.6px;line-height:25px;color:#1f5a4b;font-weight:700;font-family:'Liberation Serif', serif;letter-spacing:-0.140px;">$365,000</span>
</div>
<div style="left:1711px;top:211px;width:16.5px;height:846px;background:#f1f1f1;"></div>
<div style="left:1711.4px;top:1040.2px;width:15px;height:15px;background:#f7f7f7;border:1px solid #cfcfcf;box-sizing:border-box;"></div>
<svg style="left:1714.6px;top:1045.5px" width="9" height="6" viewBox="0 0 9 6"><path d="M0.8 0.8 L4.5 5 L8.2 0.8 Z" fill="#9a9a9a"/></svg>
<div style="left:48px;top:1056.6px;width:1680px;height:17.4px;background:#f1f1f1;"></div>
<div style="left:49.8px;top:1057.8px;width:15.6px;height:14.6px;background:#f7f7f7;border:1px solid #cfcfcf;box-sizing:border-box;"></div>
<svg style="left:54.5px;top:1060.6px" width="6" height="9" viewBox="0 0 6 9"><path d="M5.2 0.8 L1 4.5 L5.2 8.2 Z" fill="#9a9a9a"/></svg>
<div style="left:65px;top:1057.8px;width:705.5px;height:14.6px;background:#f7f7f7;border:1px solid #cfcfcf;box-sizing:border-box;"></div>
<div style="left:411.5px;top:1062px;width:1px;height:6px;background:#cfcfcf;"></div>
<div style="left:413.7px;top:1062px;width:1px;height:6px;background:#cfcfcf;"></div>
<div style="left:415.9px;top:1062px;width:1px;height:6px;background:#cfcfcf;"></div>
<div style="left:418.1px;top:1062px;width:1px;height:6px;background:#cfcfcf;"></div>
<div style="left:420.3px;top:1062px;width:1px;height:6px;background:#cfcfcf;"></div>
<div style="left:422.5px;top:1062px;width:1px;height:6px;background:#cfcfcf;"></div>
<div style="left:424.7px;top:1062px;width:1px;height:6px;background:#cfcfcf;"></div>
<div style="left:1694.6px;top:1057.8px;width:15.6px;height:14.6px;background:#f7f7f7;border:1px solid #cfcfcf;box-sizing:border-box;"></div>
<svg style="left:1699.8px;top:1060.6px" width="6" height="9" viewBox="0 0 6 9"><path d="M0.8 0.8 L5 4.5 L0.8 8.2 Z" fill="#9a9a9a"/></svg>
<div style="left:1730.5px;top:177.5px;width:263.7px;height:886.2px;background:#fff;border-radius:10px;box-shadow:0 1px 3px rgba(0,0,0,.13);"></div>
<span class="t" style="left:1745.20px;top:184.40px;font-size:15px;line-height:21px;color:#222;font-weight:700;letter-spacing:-0.588px;">Fill</span>
<div style="left:1745.2px;top:206px;width:234.4px;height:28.2px;background:#fff;border:1px solid #e2e2e2;border-radius:5px;box-sizing:border-box;"></div>
<span class="t" style="left:1749.90px;top:210.00px;font-size:15px;line-height:21px;color:#444;letter-spacing:-0.051px;">No fill</span>
<svg style="left:1964.5px;top:216px" width="10" height="10" viewBox="0 0 10 10" fill="none" stroke="#444" stroke-width="1.25" stroke-linecap="round" stroke-linejoin="round"><path d="M2 3.6 L5 6.6 L8 3.6"/></svg>
<div style="left:1745.2px;top:244px;width:234.4px;height:1px;background:#e8e8e8;"></div>
<span class="t" style="left:1745.20px;top:255.10px;font-size:15px;line-height:21px;color:#222;font-weight:700;letter-spacing:-0.548px;">Borders style</span>
<div style="left:1745.2px;top:285.7px;width:111.4px;height:28.5px;background:#fff;border:1px solid #e2e2e2;border-radius:5px;box-sizing:border-box;"></div>
<div style="left:1757.7px;top:299.1px;width:72.2px;height:1.2px;background:#333;"></div>
<svg style="left:1841.2px;top:295.2px" width="10" height="10" viewBox="0 0 10 10" fill="none" stroke="#444" stroke-width="1.25" stroke-linecap="round" stroke-linejoin="round"><path d="M2 3.6 L5 6.6 L8 3.6"/></svg>
<span class="t" style="left:1881.50px;top:289.50px;font-size:15px;line-height:21px;color:#444;letter-spacing:-0.611px;">Color</span>
<div style="left:1921.2px;top:285.7px;width:58.4px;height:28.5px;background:#fff;border:1px solid #e2e2e2;border-radius:5px;box-sizing:border-box;"></div>
<div style="left:1923.5px;top:287.6px;width:36.5px;height:24.8px;background:#000;border-radius:5px;"></div>
<svg style="left:1964.5px;top:295.2px" width="10" height="10" viewBox="0 0 10 10" fill="none" stroke="#444" stroke-width="1.25" stroke-linecap="round" stroke-linejoin="round"><path d="M2 3.6 L5 6.6 L8 3.6"/></svg>
<span class="t" style="left:1745.20px;top:326.00px;font-size:14.5px;line-height:20px;color:#444;letter-spacing:-0.109px;">Select borders you want to change</span>
<span class="t" style="left:1745.20px;top:347.40px;font-size:14.5px;line-height:20px;color:#444;letter-spacing:-0.130px;">applying style chosen above</span>
<svg style="left:1749.9px;top:381.4px" width="19" height="19" viewBox="0 0 19 19" fill="none" stroke-linecap="butt" stroke-linejoin="round"><path d="M1.7000000000000002 0.9 H17.3 a0.8 0.8 0 0 1 0.8 0.8 V17.3 a0.8 0.8 0 0 1 -0.8 0.8 H1.7000000000000002 a0.8 0.8 0 0 1 -0.8 -0.8 V1.7000000000000002 a0.8 0.8 0 0 1 0.8 -0.8 Z M9.5 0.9 V18.1 M0.9 9.5 H18.1" stroke="#6b90e2" stroke-width="1.35"/></svg>
<svg style="left:1783.6px;top:381.4px" width="19" height="19" viewBox="0 0 19 19" fill="none" stroke-linecap="butt" stroke-linejoin="round"><path d="M0.9 4.3 V1.7000000000000002 a0.8 0.8 0 0 1 0.8 -0.8 H4.3 M14.700000000000001 0.9 H17.3 a0.8 0.8 0 0 1 0.8 0.8 V4.3 M18.1 14.700000000000001 V17.3 a0.8 0.8 0 0 1 -0.8 0.8 H14.700000000000001 M4.3 18.1 H1.7000000000000002 a0.8 0.8 0 0 1 -0.8 -0.8 V14.700000000000001 M7.2 0.9 H11.8 M7.2 18.1 H11.8 M0.9 7.2 V11.8 M18.1 7.2 V11.8" stroke="#a3a3a3" stroke-width="1.25"/><path d="M9.5 3.4 V5.8 M9.5 7.6 V11.4 M9.5 13.2 V15.6 M3.4 9.5 H5.8 M7.6 9.5 H11.4 M13.2 9.5 H15.6" stroke="#a3a3a3" stroke-width="1.25"/></svg>
<svg style="left:1817.2px;top:381.4px" width="19" height="19" viewBox="0 0 19 19" fill="none" stroke-linecap="butt" stroke-linejoin="round"><path d="M0.9 4.3 V1.7000000000000002 a0.8 0.8 0 0 1 0.8 -0.8 H4.3 M14.700000000000001 0.9 H17.3 a0.8 0.8 0 0 1 0.8 0.8 V4.3 M18.1 14.700000000000001 V17.3 a0.8 0.8 0 0 1 -0.8 0.8 H14.700000000000001 M4.3 18.1 H1.7000000000000002 a0.8 0.8 0 0 1 -0.8 -0.8 V14.700000000000001 M7.2 0.9 H11.8 M7.2 18.1 H11.8 M0.9 7.2 V11.8 M18.1 7.2 V11.8" stroke="#a3a3a3" stroke-width="1.25"/><path d="M9.5 2.6 V16.4 M2.6 9.5 H16.4" stroke="#6b90e2" stroke-width="1.35"/></svg>
<svg style="left:1850.8px;top:381.4px" width="19" height="19" viewBox="0 0 19 19" fill="none" stroke-linecap="butt" stroke-linejoin="round"><path d="M1.7000000000000002 0.9 H17.3 a0.8 0.8 0 0 1 0.8 0.8 V17.3 a0.8 0.8 0 0 1 -0.8 0.8 H1.7000000000000002 a0.8 0.8 0 0 1 -0.8 -0.8 V1.7000000000000002 a0.8 0.8 0 0 1 0.8 -0.8 Z" stroke="#6b90e2" stroke-width="1.35"/><path d="M9.5 3.4 V5.8 M9.5 7.6 V11.4 M9.5 13.2 V15.6 M3.4 9.5 H5.8 M7.6 9.5 H11.4 M13.2 9.5 H15.6" stroke="#a3a3a3" stroke-width="1.25"/></svg>
<svg style="left:1884.5px;top:381.4px" width="19" height="19" viewBox="0 0 19 19" fill="none" stroke-linecap="butt" stroke-linejoin="round"><path d="M0.9 4.3 V1.7000000000000002 a0.8 0.8 0 0 1 0.8 -0.8 H4.3 M14.700000000000001 0.9 H17.3 a0.8 0.8 0 0 1 0.8 0.8 V4.3 M18.1 14.700000000000001 V17.3 a0.8 0.8 0 0 1 -0.8 0.8 H14.700000000000001 M4.3 18.1 H1.7000000000000002 a0.8 0.8 0 0 1 -0.8 -0.8 V14.700000000000001 M7.2 0.9 H11.8 M7.2 18.1 H11.8 M0.9 7.2 V11.8 M18.1 7.2 V11.8" stroke="#a3a3a3" stroke-width="1.25"/><path d="M2.4 16.6 L16.6 2.4" stroke="#6b90e2" stroke-width="1.35"/></svg>
<svg style="left:1918.1px;top:381.4px" width="19" height="19" viewBox="0 0 19 19" fill="none" stroke-linecap="butt" stroke-linejoin="round"><path d="M0.9 4.3 V1.7000000000000002 a0.8 0.8 0 0 1 0.8 -0.8 H4.3 M14.700000000000001 0.9 H17.3 a0.8 0.8 0 0 1 0.8 0.8 V4.3 M18.1 14.700000000000001 V17.3 a0.8 0.8 0 0 1 -0.8 0.8 H14.700000000000001 M4.3 18.1 H1.7000000000000002 a0.8 0.8 0 0 1 -0.8 -0.8 V14.700000000000001 M7.2 0.9 H11.8 M7.2 18.1 H11.8 M0.9 7.2 V11.8 M18.1 7.2 V11.8" stroke="#a3a3a3" stroke-width="1.25"/><path d="M2.4 2.4 L16.6 16.6" stroke="#6b90e2" stroke-width="1.35"/></svg>
<svg style="left:1749.9px;top:420.9px" width="19" height="19" viewBox="0 0 19 19" fill="none" stroke-linecap="butt" stroke-linejoin="round"><path d="M0.9 4.3 V1.7000000000000002 a0.8 0.8 0 0 1 0.8 -0.8 H4.3 M14.700000000000001 0.9 H17.3 a0.8 0.8 0 0 1 0.8 0.8 V4.3 M18.1 14.700000000000001 V17.3 a0.8 0.8 0 0 1 -0.8 0.8 H14.700000000000001 M4.3 18.1 H1.7000000000000002 a0.8 0.8 0 0 1 -0.8 -0.8 V14.700000000000001 M7.2 0.9 H11.8 M7.2 18.1 H11.8 M0.9 7.2 V11.8 M18.1 7.2 V11.8" stroke="#a3a3a3" stroke-width="1.25"/><path d="M9.5 3.4 V5.8 M9.5 7.6 V11.4 M9.5 13.2 V15.6 M3.4 9.5 H5.8 M7.6 9.5 H11.4 M13.2 9.5 H15.6" stroke="#a3a3a3" stroke-width="1.25"/><path d="M3.9 0.9 H1.7000000000000002 a0.8 0.8 0 0 0 -0.8 0.8 V17.3 a0.8 0.8 0 0 0 0.8 0.8 H3.9" stroke="#6b90e2" stroke-width="1.35"/></svg>
<svg style="left:1783.6px;top:420.9px" width="19" height="19" viewBox="0 0 19 19" fill="none" stroke-linecap="butt" stroke-linejoin="round"><path d="M0.9 4.3 V1.7000000000000002 a0.8 0.8 0 0 1 0.8 -0.8 H4.3 M14.700000000000001 0.9 H17.3 a0.8 0.8 0 0 1 0.8 0.8 V4.3 M18.1 14.700000000000001 V17.3 a0.8 0.8 0 0 1 -0.8 0.8 H14.700000000000001 M4.3 18.1 H1.7000000000000002 a0.8 0.8 0 0 1 -0.8 -0.8 V14.700000000000001 M7.2 0.9 H11.8 M7.2 18.1 H11.8 M0.9 7.2 V11.8 M18.1 7.2 V11.8" stroke="#a3a3a3" stroke-width="1.25"/><path d="M9.5 2.6 V16.4" stroke="#6b90e2" stroke-width="1.35"/></svg>
<svg style="left:1817.2px;top:420.9px" width="19" height="19" viewBox="0 0 19 19" fill="none" stroke-linecap="butt" stroke-linejoin="round"><path d="M0.9 4.3 V1.7000000000000002 a0.8 0.8 0 0 1 0.8 -0.8 H4.3 M14.700000000000001 0.9 H17.3 a0.8 0.8 0 0 1 0.8 0.8 V4.3 M18.1 14.700000000000001 V17.3 a0.8 0.8 0 0 1 -0.8 0.8 H14.700000000000001 M4.3 18.1 H1.7000000000000002 a0.8 0.8 0 0 1 -0.8 -0.8 V14.700000000000001 M7.2 0.9 H11.8 M7.2 18.1 H11.8 M0.9 7.2 V11.8 M18.1 7.2 V11.8" stroke="#a3a3a3" stroke-width="1.25"/><path d="M9.5 3.4 V5.8 M9.5 7.6 V11.4 M9.5 13.2 V15.6 M3.4 9.5 H5.8 M7.6 9.5 H11.4 M13.2 9.5 H15.6" stroke="#a3a3a3" stroke-width="1.25"/><path d="M15.100000000000001 0.9 H17.3 a0.8 0.8 0 0 1 0.8 0.8 V17.3 a0.8 0.8 0 0 1 -0.8 0.8 H15.100000000000001" stroke="#6b90e2" stroke-width="1.35"/></svg>
<svg style="left:1850.8px;top:420.9px" width="19" height="19" viewBox="0 0 19 19" fill="none" stroke-linecap="butt" stroke-linejoin="round"><path d="M0.9 4.3 V1.7000000000000002 a0.8 0.8 0 0 1 0.8 -0.8 H4.3 M14.700000000000001 0.9 H17.3 a0.8 0.8 0 0 1 0.8 0.8 V4.3 M18.1 14.700000000000001 V17.3 a0.8 0.8 0 0 1 -0.8 0.8 H14.700000000000001 M4.3 18.1 H1.7000000000000002 a0.8 0.8 0 0 1 -0.8 -0.8 V14.700000000000001 M7.2 0.9 H11.8 M7.2 18.1 H11.8 M0.9 7.2 V11.8 M18.1 7.2 V11.8" stroke="#a3a3a3" stroke-width="1.25"/><path d="M9.5 3.4 V5.8 M9.5 7.6 V11.4 M9.5 13.2 V15.6 M3.4 9.5 H5.8 M7.6 9.5 H11.4 M13.2 9.5 H15.6" stroke="#a3a3a3" stroke-width="1.25"/><path d="M0.9 3.9 V1.7000000000000002 a0.8 0.8 0 0 1 0.8 -0.8 H17.3 a0.8 0.8 0 0 1 0.8 0.8 V3.9" stroke="#6b90e2" stroke-width="1.35"/></svg>
<svg style="left:1884.5px;top:420.9px" width="19" height="19" viewBox="0 0 19 19" fill="none" stroke-linecap="butt" stroke-linejoin="round"><path d="M0.9 4.3 V1.7000000000000002 a0.8 0.8 0 0 1 0.8 -0.8 H4.3 M14.700000000000001 0.9 H17.3 a0.8 0.8 0 0 1 0.8 0.8 V4.3 M18.1 14.700000000000001 V17.3 a0.8 0.8 0 0 1 -0.8 0.8 H14.700000000000001 M4.3 18.1 H1.7000000000000002 a0.8 0.8 0 0 1 -0.8 -0.8 V14.700000000000001 M7.2 0.9 H11.8 M7.2 18.1 H11.8 M0.9 7.2 V11.8 M18.1 7.2 V11.8" stroke="#a3a3a3" stroke-width="1.25"/><path d="M2.6 9.5 H16.4" stroke="#6b90e2" stroke-width="1.35"/></svg>
<svg style="left:1918.1px;top:420.9px" width="19" height="19" viewBox="0 0 19 19" fill="none" stroke-linecap="butt" stroke-linejoin="round"><path d="M0.9 4.3 V1.7000000000000002 a0.8 0.8 0 0 1 0.8 -0.8 H4.3 M14.700000000000001 0.9 H17.3 a0.8 0.8 0 0 1 0.8 0.8 V4.3 M18.1 14.700000000000001 V17.3 a0.8 0.8 0 0 1 -0.8 0.8 H14.700000000000001 M4.3 18.1 H1.7000000000000002 a0.8 0.8 0 0 1 -0.8 -0.8 V14.700000000000001 M7.2 0.9 H11.8 M7.2 18.1 H11.8 M0.9 7.2 V11.8 M18.1 7.2 V11.8" stroke="#a3a3a3" stroke-width="1.25"/><path d="M9.5 3.4 V5.8 M9.5 7.6 V11.4 M9.5 13.2 V15.6 M3.4 9.5 H5.8 M7.6 9.5 H11.4 M13.2 9.5 H15.6" stroke="#a3a3a3" stroke-width="1.25"/><path d="M0.9 15.100000000000001 V17.3 a0.8 0.8 0 0 0 0.8 0.8 H17.3 a0.8 0.8 0 0 0 0.8 -0.8 V15.100000000000001" stroke="#6b90e2" stroke-width="1.35"/></svg>
<div style="left:1745.2px;top:456px;width:234.9px;height:1px;background:#e8e8e8;"></div>
<span class="t" style="left:1745.20px;top:466.90px;font-size:15px;line-height:21px;color:#222;font-weight:700;letter-spacing:-0.099px;">Indent</span>
<div style="left:1745.2px;top:488.3px;width:71.1px;height:28.3px;background:#fff;border:1px solid #e2e2e2;border-radius:5px;box-sizing:border-box;"></div>
<span class="t" style="left:1749.60px;top:492.80px;font-size:15px;line-height:21px;color:#444;">0</span>
<svg style="left:1801.5px;top:490.6px" width="10" height="10" viewBox="0 0 10 10" fill="none" stroke="#444" stroke-width="1.25" stroke-linecap="round" stroke-linejoin="round"><path d="M2 6.4 L5 3.4 L8 6.4"/></svg>
<svg style="left:1801.5px;top:504.6px" width="10" height="10" viewBox="0 0 10 10" fill="none" stroke="#444" stroke-width="1.25" stroke-linecap="round" stroke-linejoin="round"><path d="M2 3.6 L5 6.6 L8 3.6"/></svg>
<span class="t" style="left:1745.20px;top:536.70px;font-size:15px;line-height:21px;color:#222;font-weight:700;letter-spacing:-0.126px;">Text orientation</span>
<span class="t" style="left:1745.20px;top:571.90px;font-size:15px;line-height:21px;color:#444;letter-spacing:-0.516px;">Angle</span>
<div style="left:1791.3px;top:567.4px;width:71.3px;height:28.4px;background:#fff;border:1px solid #e2e2e2;border-radius:5px;box-sizing:border-box;"></div>
<span class="t" style="left:1795.60px;top:571.90px;font-size:15px;line-height:21px;color:#444;letter-spacing:-0.654px;">0 °</span>
<svg style="left:1847.8px;top:569.7px" width="10" height="10" viewBox="0 0 10 10" fill="none" stroke="#444" stroke-width="1.25" stroke-linecap="round" stroke-linejoin="round"><path d="M2 6.4 L5 3.4 L8 6.4"/></svg>
<svg style="left:1847.8px;top:583.7px" width="10" height="10" viewBox="0 0 10 10" fill="none" stroke="#444" stroke-width="1.25" stroke-linecap="round" stroke-linejoin="round"><path d="M2 3.6 L5 6.6 L8 3.6"/></svg>
<span class="t" style="left:1745.20px;top:615.80px;font-size:15px;line-height:21px;color:#222;font-weight:700;letter-spacing:-0.230px;">Text control</span>
<svg style="left:1744.7px;top:648.7px" width="17" height="17" viewBox="0 0 17 17"><rect x="0.5" y="0.5" width="16" height="16" rx="4.2" fill="#4a80e6"/><path d="M4.3 8.7 L7.3 11.6 L12.8 5.6" fill="none" stroke="#fff" stroke-width="1.7" stroke-linecap="round" stroke-linejoin="round"/></svg>
<span class="t" style="left:1771.20px;top:647.20px;font-size:14.5px;line-height:20px;color:#444;letter-spacing:0.015px;">Wrap text</span>
<svg style="left:1744.7px;top:680.1px" width="17" height="17" viewBox="0 0 17 17"><rect x="0.9" y="0.9" width="15.2" height="15.2" rx="4.2" fill="#fff" stroke="#dcdcdc" stroke-width="1.1"/></svg>
<span class="t" style="left:1771.20px;top:678.60px;font-size:14.5px;line-height:20px;color:#bdbdbd;letter-spacing:0.064px;">Shrink to fit</span>
<div style="left:1745.2px;top:709.2px;width:234.9px;height:1px;background:#e8e8e8;"></div>
<svg style="left:1750.5px;top:724px" width="20" height="20" viewBox="0 0 20 20" fill="none" stroke="#444" stroke-width="1.2" stroke-linejoin="round"><rect x="1" y="1" width="14" height="15" rx="1.5"/><rect x="1.6" y="1.6" width="12.8" height="3.6" fill="#555" stroke="none"/><rect x="1.6" y="9" width="6" height="6.4" fill="#bbb" stroke="none"/><path d="M1 5.5 H15 M1 9 H15 M1 12.5 H8"/><rect x="8.5" y="9.5" width="9.5" height="8.5" rx="1.2" fill="#fff"/><path d="M11.5 11.8 L14.8 13.8 L11.5 15.8" stroke-linecap="round"/></svg>
<span class="t" style="left:1778.30px;top:723.60px;font-size:15px;line-height:21px;color:#444;letter-spacing:-0.072px;">Conditional formatting</span>
<svg style="left:1932.9px;top:730px" width="10" height="10" viewBox="0 0 10 10" fill="none" stroke="#444" stroke-width="1.25" stroke-linecap="round" stroke-linejoin="round"><path d="M2 3.6 L5 6.6 L8 3.6"/></svg>
<div style="left:2006px;top:196px;width:34px;height:28.6px;background:#e0e0e0;border-radius:6px;"></div>
<svg style="left:2011px;top:198.5px" width="24" height="24" viewBox="0 0 24 24" fill="none" stroke="#333" stroke-width="1.25" stroke-linecap="round" stroke-linejoin="round"><rect x="3" y="5" width="18" height="14" rx="1.5"/><path d="M3 9.6 H21 M3 14.4 H21 M6.6 5 V19 M17.4 5 V19"/></svg>
<svg style="left:2011px;top:240px" width="24" height="24" viewBox="0 0 24 24" fill="none" stroke="#a3a3a3" stroke-width="1.2" stroke-linecap="round" stroke-linejoin="round"><circle cx="10" cy="9.5" r="5.8"/><rect x="9.5" y="9.5" width="10.5" height="10" rx="0.8" fill="#f3f3f3"/></svg>
<svg style="left:2011px;top:281px" width="24" height="24" viewBox="0 0 24 24" fill="none" stroke="#a3a3a3" stroke-width="1.2" stroke-linecap="round" stroke-linejoin="round"><rect x="4" y="4.5" width="16" height="15" rx="1.2"/><circle cx="15.3" cy="8.8" r="1.3"/><path d="M4 17.5 L10.5 11.5 L16 16.5 L20 19"/></svg>
<svg style="left:2011px;top:322px" width="24" height="24" viewBox="0 0 24 24" fill="none" stroke="#a3a3a3" stroke-width="1.2" stroke-linecap="round" stroke-linejoin="round"><rect x="4.2" y="15" width="2.8" height="4.5" rx="0.8"/><rect x="9.6" y="11.5" width="2.8" height="8" rx="0.8"/><rect x="15" y="5" width="2.8" height="14.5" rx="0.8"/></svg>
<svg style="left:2011px;top:362px" width="24" height="24" viewBox="0 0 24 24" fill="none" stroke="#a3a3a3" stroke-width="1.2" stroke-linecap="round" stroke-linejoin="round"><path d="M19 6 H10.5 a3.7 3.7 0 0 0 0 7.4 H12.5 M12.5 6 V19.5 M16 6 V19.5"/></svg>
<svg style="left:2011px;top:402.5px" width="24" height="24" viewBox="0 0 24 24" fill="none" stroke="#a3a3a3" stroke-width="1.2" stroke-linecap="round" stroke-linejoin="round"><path d="M6.5 15 L12 3.5 L17.5 15 M8.3 11.2 H15.7 M5.5 20 Q12 15.5 18.5 20"/></svg>
<svg style="left:2011px;top:443.5px" width="24" height="24" viewBox="0 0 24 24" fill="none" stroke="#a3a3a3" stroke-width="1.2" stroke-linecap="round" stroke-linejoin="round"><path d="M17 11 V5.5 a1.2 1.2 0 0 0 -1.2 -1.2 H6 a1.2 1.2 0 0 0 -1.2 1.2 V17.5 a1.2 1.2 0 0 0 1.2 1.2 H12"/><rect x="7.5" y="7" width="7" height="2.6"/><path d="M7.5 12.5 H12"/><path d="M12.5 13.5 H21.5 L18.2 17.6 V22 L15.8 20.5 V17.6 Z" fill="#f3f3f3"/></svg>
<svg style="left:2011px;top:484.5px" width="24" height="24" viewBox="0 0 24 24" fill="none" stroke="#a3a3a3" stroke-width="1.2" stroke-linecap="round" stroke-linejoin="round"><path d="M4.5 7.5 C6 4 10.5 3.5 10.5 7.5 C10.500 12 8.500 20 6.500 20 C4.500 20 6 14.5 12 12 M13.5 14.800 C14.500 12 15.500 11.500 15.500 14.800 C16.500 13 17.500 12.500 17.500 14.500 L19.500 14"/></svg>
<div style="left:1136.8px;top:84.5px;width:590.5px;height:372.2px;background:#fff;border-radius:4px 4px 8px 8px;box-shadow:0 5px 16px rgba(0,0,0,.24),0 0 2px rgba(0,0,0,.16);"></div>
<span class="t" style="left:1150.40px;top:93.90px;font-size:15px;line-height:21px;color:#333;font-weight:700;letter-spacing:-0.438px;">Light</span>
<span class="t" style="left:1150.50px;top:370.00px;font-size:15px;line-height:21px;color:#333;font-weight:700;letter-spacing:-0.033px;">Medium</span>
<div style="left:1142.7px;top:121.65px;width:73.4px;height:53.8px;border:1px solid #e4e4e4;border-radius:2.5px;box-sizing:border-box;background:#fff;box-shadow:0 0 1.5px rgba(0,0,0,.12);"></div>
<svg style="left:1144.1px;top:123.1px" width="70" height="51" viewBox="0 0 70 50" preserveAspectRatio="none" fill="none"><rect x="0" y="0" width="70" height="50" fill="#fff"/><path d="M2.2 5.2 h9.6" stroke="#666" stroke-width="1.2"/><path d="M16.2 5.2 h9.6" stroke="#666" stroke-width="1.2"/><path d="M30.2 5.2 h9.6" stroke="#666" stroke-width="1.2"/><path d="M44.2 5.2 h9.6" stroke="#666" stroke-width="1.2"/><path d="M58.2 5.2 h9.6" stroke="#666" stroke-width="1.2"/><path d="M2.2 15.5 h9.6" stroke="#666" stroke-width="1.2"/><path d="M16.2 15.5 h9.6" stroke="#666" stroke-width="1.2"/><path d="M30.2 15.5 h9.6" stroke="#666" stroke-width="1.2"/><path d="M44.2 15.5 h9.6" stroke="#666" stroke-width="1.2"/><path d="M58.2 15.5 h9.6" stroke="#666" stroke-width="1.2"/><path d="M2.2 25.6 h9.6" stroke="#666" stroke-width="1.2"/><path d="M16.2 25.6 h9.6" stroke="#666" stroke-width="1.2"/><path d="M30.2 25.6 h9.6" stroke="#666" stroke-width="1.2"/><path d="M44.2 25.6 h9.6" stroke="#666" stroke-width="1.2"/><path d="M58.2 25.6 h9.6" stroke="#666" stroke-width="1.2"/><path d="M2.2 35.5 h9.6" stroke="#666" stroke-width="1.2"/><path d="M16.2 35.5 h9.6" stroke="#666" stroke-width="1.2"/><path d="M30.2 35.5 h9.6" stroke="#666" stroke-width="1.2"/><path d="M44.2 35.5 h9.6" stroke="#666" stroke-width="1.2"/><path d="M58.2 35.5 h9.6" stroke="#666" stroke-width="1.2"/><path d="M2.2 45.4 h9.6" stroke="#666" stroke-width="1.2"/><path d="M16.2 45.4 h9.6" stroke="#666" stroke-width="1.2"/><path d="M30.2 45.4 h9.6" stroke="#666" stroke-width="1.2"/><path d="M44.2 45.4 h9.6" stroke="#666" stroke-width="1.2"/><path d="M58.2 45.4 h9.6" stroke="#666" stroke-width="1.2"/></svg>
<div style="left:1224.4px;top:121.65px;width:73.4px;height:53.8px;border:1px solid #e4e4e4;border-radius:2.5px;box-sizing:border-box;background:#fff;box-shadow:0 0 1.5px rgba(0,0,0,.12);"></div>
<svg style="left:1225.8px;top:123.1px" width="70" height="51" viewBox="0 0 70 50" preserveAspectRatio="none" fill="none"><rect x="0" y="0" width="70" height="50" fill="#fff"/><rect x="0" y="11.299999999999999" width="70" height="9.000000000000002" fill="#d9d9d9"/><rect x="0" y="31.3" width="70" height="8.999999999999998" fill="#d9d9d9"/><path d="M0 0.6 H70" stroke="#444" stroke-width="0.9"/><path d="M0 10.7 H70" stroke="#7a7a7a" stroke-width="1.6"/><path d="M0 49.3 H70" stroke="#7a7a7a" stroke-width="1.5"/><path d="M2.2 5.2 h9.6" stroke="#555555" stroke-width="1.15"/><path d="M16.2 5.2 h9.6" stroke="#555555" stroke-width="1.15"/><path d="M30.2 5.2 h9.6" stroke="#555555" stroke-width="1.15"/><path d="M44.2 5.2 h9.6" stroke="#555555" stroke-width="1.15"/><path d="M58.2 5.2 h9.6" stroke="#555555" stroke-width="1.15"/><path d="M2.2 15.5 h9.6" stroke="#555555" stroke-width="1.15"/><path d="M16.2 15.5 h9.6" stroke="#555555" stroke-width="1.15"/><path d="M30.2 15.5 h9.6" stroke="#555555" stroke-width="1.15"/><path d="M44.2 15.5 h9.6" stroke="#555555" stroke-width="1.15"/><path d="M58.2 15.5 h9.6" stroke="#555555" stroke-width="1.15"/><path d="M2.2 25.6 h9.6" stroke="#555555" stroke-width="1.15"/><path d="M16.2 25.6 h9.6" stroke="#555555" stroke-width="1.15"/><path d="M30.2 25.6 h9.6" stroke="#555555" stroke-width="1.15"/><path d="M44.2 25.6 h9.6" stroke="#555555" stroke-width="1.15"/><path d="M58.2 25.6 h9.6" stroke="#555555" stroke-width="1.15"/><path d="M2.2 35.5 h9.6" stroke="#555555" stroke-width="1.15"/><path d="M16.2 35.5 h9.6" stroke="#555555" stroke-width="1.15"/><path d="M30.2 35.5 h9.6" stroke="#555555" stroke-width="1.15"/><path d="M44.2 35.5 h9.6" stroke="#555555" stroke-width="1.15"/><path d="M58.2 35.5 h9.6" stroke="#555555" stroke-width="1.15"/><path d="M2.2 45.4 h9.6" stroke="#555555" stroke-width="1.15"/><path d="M16.2 45.4 h9.6" stroke="#555555" stroke-width="1.15"/><path d="M30.2 45.4 h9.6" stroke="#555555" stroke-width="1.15"/><path d="M44.2 45.4 h9.6" stroke="#555555" stroke-width="1.15"/><path d="M58.2 45.4 h9.6" stroke="#555555" stroke-width="1.15"/></svg>
<div style="left:1306.1000000000001px;top:121.65px;width:73.4px;height:53.8px;border:1px solid #e4e4e4;border-radius:2.5px;box-sizing:border-box;background:#fff;box-shadow:0 0 1.5px rgba(0,0,0,.12);"></div>
<svg style="left:1307.5px;top:123.1px" width="70" height="51" viewBox="0 0 70 50" preserveAspectRatio="none" fill="none"><rect x="0" y="0" width="70" height="50" fill="#fff"/><rect x="0" y="11.299999999999999" width="70" height="9.000000000000002" fill="#d2effa"/><rect x="0" y="31.3" width="70" height="8.999999999999998" fill="#d2effa"/><path d="M0 0.6 H70" stroke="#3db9e8" stroke-width="0.9"/><path d="M0 10.7 H70" stroke="#8ed6f2" stroke-width="1.6"/><path d="M0 49.3 H70" stroke="#8ed6f2" stroke-width="1.5"/><path d="M2.2 5.2 h9.6" stroke="#3a9cc4" stroke-width="1.15"/><path d="M16.2 5.2 h9.6" stroke="#3a9cc4" stroke-width="1.15"/><path d="M30.2 5.2 h9.6" stroke="#3a9cc4" stroke-width="1.15"/><path d="M44.2 5.2 h9.6" stroke="#3a9cc4" stroke-width="1.15"/><path d="M58.2 5.2 h9.6" stroke="#3a9cc4" stroke-width="1.15"/><path d="M2.2 15.5 h9.6" stroke="#3a9cc4" stroke-width="1.15"/><path d="M16.2 15.5 h9.6" stroke="#3a9cc4" stroke-width="1.15"/><path d="M30.2 15.5 h9.6" stroke="#3a9cc4" stroke-width="1.15"/><path d="M44.2 15.5 h9.6" stroke="#3a9cc4" stroke-width="1.15"/><path d="M58.2 15.5 h9.6" stroke="#3a9cc4" stroke-width="1.15"/><path d="M2.2 25.6 h9.6" stroke="#3a9cc4" stroke-width="1.15"/><path d="M16.2 25.6 h9.6" stroke="#3a9cc4" stroke-width="1.15"/><path d="M30.2 25.6 h9.6" stroke="#3a9cc4" stroke-width="1.15"/><path d="M44.2 25.6 h9.6" stroke="#3a9cc4" stroke-width="1.15"/><path d="M58.2 25.6 h9.6" stroke="#3a9cc4" stroke-width="1.15"/><path d="M2.2 35.5 h9.6" stroke="#3a9cc4" stroke-width="1.15"/><path d="M16.2 35.5 h9.6" stroke="#3a9cc4" stroke-width="1.15"/><path d="M30.2 35.5 h9.6" stroke="#3a9cc4" stroke-width="1.15"/><path d="M44.2 35.5 h9.6" stroke="#3a9cc4" stroke-width="1.15"/><path d="M58.2 35.5 h9.6" stroke="#3a9cc4" stroke-width="1.15"/><path d="M2.2 45.4 h9.6" stroke="#3a9cc4" stroke-width="1.15"/><path d="M16.2 45.4 h9.6" stroke="#3a9cc4" stroke-width="1.15"/><path d="M30.2 45.4 h9.6" stroke="#3a9cc4" stroke-width="1.15"/><path d="M44.2 45.4 h9.6" stroke="#3a9cc4" stroke-width="1.15"/><path d="M58.2 45.4 h9.6" stroke="#3a9cc4" stroke-width="1.15"/></svg>
<div style="left:1387.8000000000002px;top:121.65px;width:73.4px;height:53.8px;border:1px solid #e4e4e4;border-radius:2.5px;box-sizing:border-box;background:#fff;box-shadow:0 0 1.5px rgba(0,0,0,.12);"></div>
<svg style="left:1389.2px;top:123.1px" width="70" height="51" viewBox="0 0 70 50" preserveAspectRatio="none" fill="none"><rect x="0" y="0" width="70" height="50" fill="#fff"/><rect x="0" y="11.299999999999999" width="70" height="9.000000000000002" fill="#d1e5f5"/><rect x="0" y="31.3" width="70" height="8.999999999999998" fill="#d1e5f5"/><path d="M0 0.6 H70" stroke="#4a95d0" stroke-width="0.9"/><path d="M0 10.7 H70" stroke="#90bfe6" stroke-width="1.6"/><path d="M0 49.3 H70" stroke="#90bfe6" stroke-width="1.5"/><path d="M2.2 5.2 h9.6" stroke="#3f7fb5" stroke-width="1.15"/><path d="M16.2 5.2 h9.6" stroke="#3f7fb5" stroke-width="1.15"/><path d="M30.2 5.2 h9.6" stroke="#3f7fb5" stroke-width="1.15"/><path d="M44.2 5.2 h9.6" stroke="#3f7fb5" stroke-width="1.15"/><path d="M58.2 5.2 h9.6" stroke="#3f7fb5" stroke-width="1.15"/><path d="M2.2 15.5 h9.6" stroke="#3f7fb5" stroke-width="1.15"/><path d="M16.2 15.5 h9.6" stroke="#3f7fb5" stroke-width="1.15"/><path d="M30.2 15.5 h9.6" stroke="#3f7fb5" stroke-width="1.15"/><path d="M44.2 15.5 h9.6" stroke="#3f7fb5" stroke-width="1.15"/><path d="M58.2 15.5 h9.6" stroke="#3f7fb5" stroke-width="1.15"/><path d="M2.2 25.6 h9.6" stroke="#3f7fb5" stroke-width="1.15"/><path d="M16.2 25.6 h9.6" stroke="#3f7fb5" stroke-width="1.15"/><path d="M30.2 25.6 h9.6" stroke="#3f7fb5" stroke-width="1.15"/><path d="M44.2 25.6 h9.6" stroke="#3f7fb5" stroke-width="1.15"/><path d="M58.2 25.6 h9.6" stroke="#3f7fb5" stroke-width="1.15"/><path d="M2.2 35.5 h9.6" stroke="#3f7fb5" stroke-width="1.15"/><path d="M16.2 35.5 h9.6" stroke="#3f7fb5" stroke-width="1.15"/><path d="M30.2 35.5 h9.6" stroke="#3f7fb5" stroke-width="1.15"/><path d="M44.2 35.5 h9.6" stroke="#3f7fb5" stroke-width="1.15"/><path d="M58.2 35.5 h9.6" stroke="#3f7fb5" stroke-width="1.15"/><path d="M2.2 45.4 h9.6" stroke="#3f7fb5" stroke-width="1.15"/><path d="M16.2 45.4 h9.6" stroke="#3f7fb5" stroke-width="1.15"/><path d="M30.2 45.4 h9.6" stroke="#3f7fb5" stroke-width="1.15"/><path d="M44.2 45.4 h9.6" stroke="#3f7fb5" stroke-width="1.15"/><path d="M58.2 45.4 h9.6" stroke="#3f7fb5" stroke-width="1.15"/></svg>
<div style="left:1469.5px;top:121.65px;width:73.4px;height:53.8px;border:1px solid #e4e4e4;border-radius:2.5px;box-sizing:border-box;background:#fff;box-shadow:0 0 1.5px rgba(0,0,0,.12);"></div>
<svg style="left:1470.9px;top:123.1px" width="70" height="51" viewBox="0 0 70 50" preserveAspectRatio="none" fill="none"><rect x="0" y="0" width="70" height="50" fill="#fff"/><rect x="0" y="11.299999999999999" width="70" height="9.000000000000002" fill="#d4f5f7"/><rect x="0" y="31.3" width="70" height="8.999999999999998" fill="#d4f5f7"/><path d="M0 0.6 H70" stroke="#45d4dd" stroke-width="0.9"/><path d="M0 10.7 H70" stroke="#93e6eb" stroke-width="1.6"/><path d="M0 49.3 H70" stroke="#93e6eb" stroke-width="1.5"/><path d="M2.2 5.2 h9.6" stroke="#3fb3ba" stroke-width="1.15"/><path d="M16.2 5.2 h9.6" stroke="#3fb3ba" stroke-width="1.15"/><path d="M30.2 5.2 h9.6" stroke="#3fb3ba" stroke-width="1.15"/><path d="M44.2 5.2 h9.6" stroke="#3fb3ba" stroke-width="1.15"/><path d="M58.2 5.2 h9.6" stroke="#3fb3ba" stroke-width="1.15"/><path d="M2.2 15.5 h9.6" stroke="#3fb3ba" stroke-width="1.15"/><path d="M16.2 15.5 h9.6" stroke="#3fb3ba" stroke-width="1.15"/><path d="M30.2 15.5 h9.6" stroke="#3fb3ba" stroke-width="1.15"/><path d="M44.2 15.5 h9.6" stroke="#3fb3ba" stroke-width="1.15"/><path d="M58.2 15.5 h9.6" stroke="#3fb3ba" stroke-width="1.15"/><path d="M2.2 25.6 h9.6" stroke="#3fb3ba" stroke-width="1.15"/><path d="M16.2 25.6 h9.6" stroke="#3fb3ba" stroke-width="1.15"/><path d="M30.2 25.6 h9.6" stroke="#3fb3ba" stroke-width="1.15"/><path d="M44.2 25.6 h9.6" stroke="#3fb3ba" stroke-width="1.15"/><path d="M58.2 25.6 h9.6" stroke="#3fb3ba" stroke-width="1.15"/><path d="M2.2 35.5 h9.6" stroke="#3fb3ba" stroke-width="1.15"/><path d="M16.2 35.5 h9.6" stroke="#3fb3ba" stroke-width="1.15"/><path d="M30.2 35.5 h9.6" stroke="#3fb3ba" stroke-width="1.15"/><path d="M44.2 35.5 h9.6" stroke="#3fb3ba" stroke-width="1.15"/><path d="M58.2 35.5 h9.6" stroke="#3fb3ba" stroke-width="1.15"/><path d="M2.2 45.4 h9.6" stroke="#3fb3ba" stroke-width="1.15"/><path d="M16.2 45.4 h9.6" stroke="#3fb3ba" stroke-width="1.15"/><path d="M30.2 45.4 h9.6" stroke="#3fb3ba" stroke-width="1.15"/><path d="M44.2 45.4 h9.6" stroke="#3fb3ba" stroke-width="1.15"/><path d="M58.2 45.4 h9.6" stroke="#3fb3ba" stroke-width="1.15"/></svg>
<div style="left:1551.2px;top:121.65px;width:73.4px;height:53.8px;border:1px solid #e4e4e4;border-radius:2.5px;box-sizing:border-box;background:#fff;box-shadow:0 0 1.5px rgba(0,0,0,.12);"></div>
<svg style="left:1552.6px;top:123.1px" width="70" height="51" viewBox="0 0 70 50" preserveAspectRatio="none" fill="none"><rect x="0" y="0" width="70" height="50" fill="#fff"/><rect x="0" y="11.299999999999999" width="70" height="9.000000000000002" fill="#d9f1ea"/><rect x="0" y="31.3" width="70" height="8.999999999999998" fill="#d9f1ea"/><path d="M0 0.6 H70" stroke="#5cc3a5" stroke-width="0.9"/><path d="M0 10.7 H70" stroke="#a0dccb" stroke-width="1.6"/><path d="M0 49.3 H70" stroke="#a0dccb" stroke-width="1.5"/><path d="M2.2 5.2 h9.6" stroke="#4aa88c" stroke-width="1.15"/><path d="M16.2 5.2 h9.6" stroke="#4aa88c" stroke-width="1.15"/><path d="M30.2 5.2 h9.6" stroke="#4aa88c" stroke-width="1.15"/><path d="M44.2 5.2 h9.6" stroke="#4aa88c" stroke-width="1.15"/><path d="M58.2 5.2 h9.6" stroke="#4aa88c" stroke-width="1.15"/><path d="M2.2 15.5 h9.6" stroke="#4aa88c" stroke-width="1.15"/><path d="M16.2 15.5 h9.6" stroke="#4aa88c" stroke-width="1.15"/><path d="M30.2 15.5 h9.6" stroke="#4aa88c" stroke-width="1.15"/><path d="M44.2 15.5 h9.6" stroke="#4aa88c" stroke-width="1.15"/><path d="M58.2 15.5 h9.6" stroke="#4aa88c" stroke-width="1.15"/><path d="M2.2 25.6 h9.6" stroke="#4aa88c" stroke-width="1.15"/><path d="M16.2 25.6 h9.6" stroke="#4aa88c" stroke-width="1.15"/><path d="M30.2 25.6 h9.6" stroke="#4aa88c" stroke-width="1.15"/><path d="M44.2 25.6 h9.6" stroke="#4aa88c" stroke-width="1.15"/><path d="M58.2 25.6 h9.6" stroke="#4aa88c" stroke-width="1.15"/><path d="M2.2 35.5 h9.6" stroke="#4aa88c" stroke-width="1.15"/><path d="M16.2 35.5 h9.6" stroke="#4aa88c" stroke-width="1.15"/><path d="M30.2 35.5 h9.6" stroke="#4aa88c" stroke-width="1.15"/><path d="M44.2 35.5 h9.6" stroke="#4aa88c" stroke-width="1.15"/><path d="M58.2 35.5 h9.6" stroke="#4aa88c" stroke-width="1.15"/><path d="M2.2 45.4 h9.6" stroke="#4aa88c" stroke-width="1.15"/><path d="M16.2 45.4 h9.6" stroke="#4aa88c" stroke-width="1.15"/><path d="M30.2 45.4 h9.6" stroke="#4aa88c" stroke-width="1.15"/><path d="M44.2 45.4 h9.6" stroke="#4aa88c" stroke-width="1.15"/><path d="M58.2 45.4 h9.6" stroke="#4aa88c" stroke-width="1.15"/></svg>
<div style="left:1632.9px;top:121.65px;width:73.4px;height:53.8px;border:1px solid #e4e4e4;border-radius:2.5px;box-sizing:border-box;background:#fff;box-shadow:0 0 1.5px rgba(0,0,0,.12);"></div>
<svg style="left:1634.3px;top:123.1px" width="70" height="51" viewBox="0 0 70 50" preserveAspectRatio="none" fill="none"><rect x="0" y="0" width="70" height="50" fill="#fff"/><rect x="0" y="11.299999999999999" width="70" height="9.000000000000002" fill="#d3ebd9"/><rect x="0" y="31.3" width="70" height="8.999999999999998" fill="#d3ebd9"/><path d="M0 0.6 H70" stroke="#579a6a" stroke-width="0.9"/><path d="M0 10.7 H70" stroke="#98c7a5" stroke-width="1.6"/><path d="M0 49.3 H70" stroke="#98c7a5" stroke-width="1.5"/><path d="M2.2 5.2 h9.6" stroke="#4d8a5e" stroke-width="1.15"/><path d="M16.2 5.2 h9.6" stroke="#4d8a5e" stroke-width="1.15"/><path d="M30.2 5.2 h9.6" stroke="#4d8a5e" stroke-width="1.15"/><path d="M44.2 5.2 h9.6" stroke="#4d8a5e" stroke-width="1.15"/><path d="M58.2 5.2 h9.6" stroke="#4d8a5e" stroke-width="1.15"/><path d="M2.2 15.5 h9.6" stroke="#4d8a5e" stroke-width="1.15"/><path d="M16.2 15.5 h9.6" stroke="#4d8a5e" stroke-width="1.15"/><path d="M30.2 15.5 h9.6" stroke="#4d8a5e" stroke-width="1.15"/><path d="M44.2 15.5 h9.6" stroke="#4d8a5e" stroke-width="1.15"/><path d="M58.2 15.5 h9.6" stroke="#4d8a5e" stroke-width="1.15"/><path d="M2.2 25.6 h9.6" stroke="#4d8a5e" stroke-width="1.15"/><path d="M16.2 25.6 h9.6" stroke="#4d8a5e" stroke-width="1.15"/><path d="M30.2 25.6 h9.6" stroke="#4d8a5e" stroke-width="1.15"/><path d="M44.2 25.6 h9.6" stroke="#4d8a5e" stroke-width="1.15"/><path d="M58.2 25.6 h9.6" stroke="#4d8a5e" stroke-width="1.15"/><path d="M2.2 35.5 h9.6" stroke="#4d8a5e" stroke-width="1.15"/><path d="M16.2 35.5 h9.6" stroke="#4d8a5e" stroke-width="1.15"/><path d="M30.2 35.5 h9.6" stroke="#4d8a5e" stroke-width="1.15"/><path d="M44.2 35.5 h9.6" stroke="#4d8a5e" stroke-width="1.15"/><path d="M58.2 35.5 h9.6" stroke="#4d8a5e" stroke-width="1.15"/><path d="M2.2 45.4 h9.6" stroke="#4d8a5e" stroke-width="1.15"/><path d="M16.2 45.4 h9.6" stroke="#4d8a5e" stroke-width="1.15"/><path d="M30.2 45.4 h9.6" stroke="#4d8a5e" stroke-width="1.15"/><path d="M44.2 45.4 h9.6" stroke="#4d8a5e" stroke-width="1.15"/><path d="M58.2 45.4 h9.6" stroke="#4d8a5e" stroke-width="1.15"/></svg>
<div style="left:1142.7px;top:181.5px;width:73.4px;height:53.8px;border:1px solid #e4e4e4;border-radius:2.5px;box-sizing:border-box;background:#fff;box-shadow:0 0 1.5px rgba(0,0,0,.12);"></div>
<svg style="left:1144.1px;top:182.9px" width="70" height="51" viewBox="0 0 70 50" preserveAspectRatio="none" fill="none"><rect x="0" y="0" width="70" height="50" fill="#fff"/><rect x="0" y="11.299999999999999" width="70" height="9.000000000000002" fill="#dfedec"/><rect x="0" y="31.3" width="70" height="8.999999999999998" fill="#dfedec"/><path d="M0 0.6 H70" stroke="#79b1ad" stroke-width="0.9"/><path d="M0 10.7 H70" stroke="#b0d1cf" stroke-width="1.6"/><path d="M0 49.3 H70" stroke="#b0d1cf" stroke-width="1.5"/><path d="M2.2 5.2 h9.6" stroke="#6aa09c" stroke-width="1.15"/><path d="M16.2 5.2 h9.6" stroke="#6aa09c" stroke-width="1.15"/><path d="M30.2 5.2 h9.6" stroke="#6aa09c" stroke-width="1.15"/><path d="M44.2 5.2 h9.6" stroke="#6aa09c" stroke-width="1.15"/><path d="M58.2 5.2 h9.6" stroke="#6aa09c" stroke-width="1.15"/><path d="M2.2 15.5 h9.6" stroke="#6aa09c" stroke-width="1.15"/><path d="M16.2 15.5 h9.6" stroke="#6aa09c" stroke-width="1.15"/><path d="M30.2 15.5 h9.6" stroke="#6aa09c" stroke-width="1.15"/><path d="M44.2 15.5 h9.6" stroke="#6aa09c" stroke-width="1.15"/><path d="M58.2 15.5 h9.6" stroke="#6aa09c" stroke-width="1.15"/><path d="M2.2 25.6 h9.6" stroke="#6aa09c" stroke-width="1.15"/><path d="M16.2 25.6 h9.6" stroke="#6aa09c" stroke-width="1.15"/><path d="M30.2 25.6 h9.6" stroke="#6aa09c" stroke-width="1.15"/><path d="M44.2 25.6 h9.6" stroke="#6aa09c" stroke-width="1.15"/><path d="M58.2 25.6 h9.6" stroke="#6aa09c" stroke-width="1.15"/><path d="M2.2 35.5 h9.6" stroke="#6aa09c" stroke-width="1.15"/><path d="M16.2 35.5 h9.6" stroke="#6aa09c" stroke-width="1.15"/><path d="M30.2 35.5 h9.6" stroke="#6aa09c" stroke-width="1.15"/><path d="M44.2 35.5 h9.6" stroke="#6aa09c" stroke-width="1.15"/><path d="M58.2 35.5 h9.6" stroke="#6aa09c" stroke-width="1.15"/><path d="M2.2 45.4 h9.6" stroke="#6aa09c" stroke-width="1.15"/><path d="M16.2 45.4 h9.6" stroke="#6aa09c" stroke-width="1.15"/><path d="M30.2 45.4 h9.6" stroke="#6aa09c" stroke-width="1.15"/><path d="M44.2 45.4 h9.6" stroke="#6aa09c" stroke-width="1.15"/><path d="M58.2 45.4 h9.6" stroke="#6aa09c" stroke-width="1.15"/></svg>
<div style="left:1224.4px;top:181.5px;width:73.4px;height:53.8px;border:1px solid #e4e4e4;border-radius:2.5px;box-sizing:border-box;background:#fff;box-shadow:0 0 1.5px rgba(0,0,0,.12);"></div>
<svg style="left:1225.8px;top:182.9px" width="70" height="51" viewBox="0 0 70 50" preserveAspectRatio="none" fill="none"><rect x="0" y="0" width="70" height="50" fill="#fff"/><rect x="0" y="0" width="70" height="10.7" fill="#000000"/><path d="M0 20.3 H70" stroke="#1a1a1a" stroke-width="1"/><path d="M0 30.7 H70" stroke="#777" stroke-width="1.5"/><path d="M0 40.3 H70" stroke="#1a1a1a" stroke-width="1"/><path d="M0 11.1 H70" stroke="#1a1a1a" stroke-width="1"/><path d="M0.6 0 V50 M69.4 0 V50" stroke="#1a1a1a" stroke-width="1.2"/><path d="M0 0.5 H70" stroke="#000000" stroke-width="1"/><path d="M0 49.3 H70" stroke="#777" stroke-width="1.5"/><path d="M2.2 5.2 h9.6" stroke="rgba(255,255,255,.85)" stroke-width="1.0"/><path d="M16.2 5.2 h9.6" stroke="rgba(255,255,255,.85)" stroke-width="1.0"/><path d="M30.2 5.2 h9.6" stroke="rgba(255,255,255,.85)" stroke-width="1.0"/><path d="M44.2 5.2 h9.6" stroke="rgba(255,255,255,.85)" stroke-width="1.0"/><path d="M58.2 5.2 h9.6" stroke="rgba(255,255,255,.85)" stroke-width="1.0"/><path d="M2.2 15.5 h9.6" stroke="#484848" stroke-width="1.25"/><path d="M16.2 15.5 h9.6" stroke="#484848" stroke-width="1.25"/><path d="M30.2 15.5 h9.6" stroke="#484848" stroke-width="1.25"/><path d="M44.2 15.5 h9.6" stroke="#484848" stroke-width="1.25"/><path d="M58.2 15.5 h9.6" stroke="#484848" stroke-width="1.25"/><path d="M2.2 25.6 h9.6" stroke="#484848" stroke-width="1.25"/><path d="M16.2 25.6 h9.6" stroke="#484848" stroke-width="1.25"/><path d="M30.2 25.6 h9.6" stroke="#484848" stroke-width="1.25"/><path d="M44.2 25.6 h9.6" stroke="#484848" stroke-width="1.25"/><path d="M58.2 25.6 h9.6" stroke="#484848" stroke-width="1.25"/><path d="M2.2 35.5 h9.6" stroke="#484848" stroke-width="1.25"/><path d="M16.2 35.5 h9.6" stroke="#484848" stroke-width="1.25"/><path d="M30.2 35.5 h9.6" stroke="#484848" stroke-width="1.25"/><path d="M44.2 35.5 h9.6" stroke="#484848" stroke-width="1.25"/><path d="M58.2 35.5 h9.6" stroke="#484848" stroke-width="1.25"/><path d="M2.2 45.4 h9.6" stroke="#484848" stroke-width="1.25"/><path d="M16.2 45.4 h9.6" stroke="#484848" stroke-width="1.25"/><path d="M30.2 45.4 h9.6" stroke="#484848" stroke-width="1.25"/><path d="M44.2 45.4 h9.6" stroke="#484848" stroke-width="1.25"/><path d="M58.2 45.4 h9.6" stroke="#484848" stroke-width="1.25"/></svg>
<div style="left:1306.1000000000001px;top:181.5px;width:73.4px;height:53.8px;border:1px solid #e4e4e4;border-radius:2.5px;box-sizing:border-box;background:#fff;box-shadow:0 0 1.5px rgba(0,0,0,.12);"></div>
<svg style="left:1307.5px;top:182.9px" width="70" height="51" viewBox="0 0 70 50" preserveAspectRatio="none" fill="none"><rect x="0" y="0" width="70" height="50" fill="#fff"/><rect x="0" y="0" width="70" height="10.7" fill="#1cade4"/><path d="M0 20.3 H70" stroke="#3db9e8" stroke-width="1"/><path d="M0 30.7 H70" stroke="#8ed6f2" stroke-width="1.5"/><path d="M0 40.3 H70" stroke="#3db9e8" stroke-width="1"/><path d="M0 11.1 H70" stroke="#3db9e8" stroke-width="1"/><path d="M0.6 0 V50 M69.4 0 V50" stroke="#3db9e8" stroke-width="1.2"/><path d="M0 0.5 H70" stroke="#1cade4" stroke-width="1"/><path d="M0 49.3 H70" stroke="#8ed6f2" stroke-width="1.5"/><path d="M2.2 5.2 h9.6" stroke="rgba(255,255,255,.85)" stroke-width="1.0"/><path d="M16.2 5.2 h9.6" stroke="rgba(255,255,255,.85)" stroke-width="1.0"/><path d="M30.2 5.2 h9.6" stroke="rgba(255,255,255,.85)" stroke-width="1.0"/><path d="M44.2 5.2 h9.6" stroke="rgba(255,255,255,.85)" stroke-width="1.0"/><path d="M58.2 5.2 h9.6" stroke="rgba(255,255,255,.85)" stroke-width="1.0"/><path d="M2.2 15.5 h9.6" stroke="#484848" stroke-width="1.25"/><path d="M16.2 15.5 h9.6" stroke="#484848" stroke-width="1.25"/><path d="M30.2 15.5 h9.6" stroke="#484848" stroke-width="1.25"/><path d="M44.2 15.5 h9.6" stroke="#484848" stroke-width="1.25"/><path d="M58.2 15.5 h9.6" stroke="#484848" stroke-width="1.25"/><path d="M2.2 25.6 h9.6" stroke="#484848" stroke-width="1.25"/><path d="M16.2 25.6 h9.6" stroke="#484848" stroke-width="1.25"/><path d="M30.2 25.6 h9.6" stroke="#484848" stroke-width="1.25"/><path d="M44.2 25.6 h9.6" stroke="#484848" stroke-width="1.25"/><path d="M58.2 25.6 h9.6" stroke="#484848" stroke-width="1.25"/><path d="M2.2 35.5 h9.6" stroke="#484848" stroke-width="1.25"/><path d="M16.2 35.5 h9.6" stroke="#484848" stroke-width="1.25"/><path d="M30.2 35.5 h9.6" stroke="#484848" stroke-width="1.25"/><path d="M44.2 35.5 h9.6" stroke="#484848" stroke-width="1.25"/><path d="M58.2 35.5 h9.6" stroke="#484848" stroke-width="1.25"/><path d="M2.2 45.4 h9.6" stroke="#484848" stroke-width="1.25"/><path d="M16.2 45.4 h9.6" stroke="#484848" stroke-width="1.25"/><path d="M30.2 45.4 h9.6" stroke="#484848" stroke-width="1.25"/><path d="M44.2 45.4 h9.6" stroke="#484848" stroke-width="1.25"/><path d="M58.2 45.4 h9.6" stroke="#484848" stroke-width="1.25"/></svg>
<div style="left:1387.8000000000002px;top:181.5px;width:73.4px;height:53.8px;border:1px solid #e4e4e4;border-radius:2.5px;box-sizing:border-box;background:#fff;box-shadow:0 0 1.5px rgba(0,0,0,.12);"></div>
<svg style="left:1389.2px;top:182.9px" width="70" height="51" viewBox="0 0 70 50" preserveAspectRatio="none" fill="none"><rect x="0" y="0" width="70" height="50" fill="#fff"/><rect x="0" y="0" width="70" height="10.7" fill="#2683c6"/><path d="M0 20.3 H70" stroke="#4a95d0" stroke-width="1"/><path d="M0 30.7 H70" stroke="#90bfe6" stroke-width="1.5"/><path d="M0 40.3 H70" stroke="#4a95d0" stroke-width="1"/><path d="M0 11.1 H70" stroke="#4a95d0" stroke-width="1"/><path d="M0.6 0 V50 M69.4 0 V50" stroke="#4a95d0" stroke-width="1.2"/><path d="M0 0.5 H70" stroke="#2683c6" stroke-width="1"/><path d="M0 49.3 H70" stroke="#90bfe6" stroke-width="1.5"/><path d="M2.2 5.2 h9.6" stroke="rgba(255,255,255,.85)" stroke-width="1.0"/><path d="M16.2 5.2 h9.6" stroke="rgba(255,255,255,.85)" stroke-width="1.0"/><path d="M30.2 5.2 h9.6" stroke="rgba(255,255,255,.85)" stroke-width="1.0"/><path d="M44.2 5.2 h9.6" stroke="rgba(255,255,255,.85)" stroke-width="1.0"/><path d="M58.2 5.2 h9.6" stroke="rgba(255,255,255,.85)" stroke-width="1.0"/><path d="M2.2 15.5 h9.6" stroke="#484848" stroke-width="1.25"/><path d="M16.2 15.5 h9.6" stroke="#484848" stroke-width="1.25"/><path d="M30.2 15.5 h9.6" stroke="#484848" stroke-width="1.25"/><path d="M44.2 15.5 h9.6" stroke="#484848" stroke-width="1.25"/><path d="M58.2 15.5 h9.6" stroke="#484848" stroke-width="1.25"/><path d="M2.2 25.6 h9.6" stroke="#484848" stroke-width="1.25"/><path d="M16.2 25.6 h9.6" stroke="#484848" stroke-width="1.25"/><path d="M30.2 25.6 h9.6" stroke="#484848" stroke-width="1.25"/><path d="M44.2 25.6 h9.6" stroke="#484848" stroke-width="1.25"/><path d="M58.2 25.6 h9.6" stroke="#484848" stroke-width="1.25"/><path d="M2.2 35.5 h9.6" stroke="#484848" stroke-width="1.25"/><path d="M16.2 35.5 h9.6" stroke="#484848" stroke-width="1.25"/><path d="M30.2 35.5 h9.6" stroke="#484848" stroke-width="1.25"/><path d="M44.2 35.5 h9.6" stroke="#484848" stroke-width="1.25"/><path d="M58.2 35.5 h9.6" stroke="#484848" stroke-width="1.25"/><path d="M2.2 45.4 h9.6" stroke="#484848" stroke-width="1.25"/><path d="M16.2 45.4 h9.6" stroke="#484848" stroke-width="1.25"/><path d="M30.2 45.4 h9.6" stroke="#484848" stroke-width="1.25"/><path d="M44.2 45.4 h9.6" stroke="#484848" stroke-width="1.25"/><path d="M58.2 45.4 h9.6" stroke="#484848" stroke-width="1.25"/></svg>
<div style="left:1469.5px;top:181.5px;width:73.4px;height:53.8px;border:1px solid #e4e4e4;border-radius:2.5px;box-sizing:border-box;background:#fff;box-shadow:0 0 1.5px rgba(0,0,0,.12);"></div>
<svg style="left:1470.9px;top:182.9px" width="70" height="51" viewBox="0 0 70 50" preserveAspectRatio="none" fill="none"><rect x="0" y="0" width="70" height="50" fill="#fff"/><rect x="0" y="0" width="70" height="10.7" fill="#27ced7"/><path d="M0 20.3 H70" stroke="#45d4dd" stroke-width="1"/><path d="M0 30.7 H70" stroke="#93e6eb" stroke-width="1.5"/><path d="M0 40.3 H70" stroke="#45d4dd" stroke-width="1"/><path d="M0 11.1 H70" stroke="#45d4dd" stroke-width="1"/><path d="M0.6 0 V50 M69.4 0 V50" stroke="#45d4dd" stroke-width="1.2"/><path d="M0 0.5 H70" stroke="#27ced7" stroke-width="1"/><path d="M0 49.3 H70" stroke="#93e6eb" stroke-width="1.5"/><path d="M2.2 5.2 h9.6" stroke="rgba(255,255,255,.85)" stroke-width="1.0"/><path d="M16.2 5.2 h9.6" stroke="rgba(255,255,255,.85)" stroke-width="1.0"/><path d="M30.2 5.2 h9.6" stroke="rgba(255,255,255,.85)" stroke-width="1.0"/><path d="M44.2 5.2 h9.6" stroke="rgba(255,255,255,.85)" stroke-width="1.0"/><path d="M58.2 5.2 h9.6" stroke="rgba(255,255,255,.85)" stroke-width="1.0"/><path d="M2.2 15.5 h9.6" stroke="#484848" stroke-width="1.25"/><path d="M16.2 15.5 h9.6" stroke="#484848" stroke-width="1.25"/><path d="M30.2 15.5 h9.6" stroke="#484848" stroke-width="1.25"/><path d="M44.2 15.5 h9.6" stroke="#484848" stroke-width="1.25"/><path d="M58.2 15.5 h9.6" stroke="#484848" stroke-width="1.25"/><path d="M2.2 25.6 h9.6" stroke="#484848" stroke-width="1.25"/><path d="M16.2 25.6 h9.6" stroke="#484848" stroke-width="1.25"/><path d="M30.2 25.6 h9.6" stroke="#484848" stroke-width="1.25"/><path d="M44.2 25.6 h9.6" stroke="#484848" stroke-width="1.25"/><path d="M58.2 25.6 h9.6" stroke="#484848" stroke-width="1.25"/><path d="M2.2 35.5 h9.6" stroke="#484848" stroke-width="1.25"/><path d="M16.2 35.5 h9.6" stroke="#484848" stroke-width="1.25"/><path d="M30.2 35.5 h9.6" stroke="#484848" stroke-width="1.25"/><path d="M44.2 35.5 h9.6" stroke="#484848" stroke-width="1.25"/><path d="M58.2 35.5 h9.6" stroke="#484848" stroke-width="1.25"/><path d="M2.2 45.4 h9.6" stroke="#484848" stroke-width="1.25"/><path d="M16.2 45.4 h9.6" stroke="#484848" stroke-width="1.25"/><path d="M30.2 45.4 h9.6" stroke="#484848" stroke-width="1.25"/><path d="M44.2 45.4 h9.6" stroke="#484848" stroke-width="1.25"/><path d="M58.2 45.4 h9.6" stroke="#484848" stroke-width="1.25"/></svg>
<div style="left:1551.2px;top:181.5px;width:73.4px;height:53.8px;border:1px solid #e4e4e4;border-radius:2.5px;box-sizing:border-box;background:#fff;box-shadow:0 0 1.5px rgba(0,0,0,.12);"></div>
<svg style="left:1552.6px;top:182.9px" width="70" height="51" viewBox="0 0 70 50" preserveAspectRatio="none" fill="none"><rect x="0" y="0" width="70" height="50" fill="#fff"/><rect x="0" y="0" width="70" height="10.7" fill="#42ba97"/><path d="M0 20.3 H70" stroke="#5cc3a5" stroke-width="1"/><path d="M0 30.7 H70" stroke="#a0dccb" stroke-width="1.5"/><path d="M0 40.3 H70" stroke="#5cc3a5" stroke-width="1"/><path d="M0 11.1 H70" stroke="#5cc3a5" stroke-width="1"/><path d="M0.6 0 V50 M69.4 0 V50" stroke="#5cc3a5" stroke-width="1.2"/><path d="M0 0.5 H70" stroke="#42ba97" stroke-width="1"/><path d="M0 49.3 H70" stroke="#a0dccb" stroke-width="1.5"/><path d="M2.2 5.2 h9.6" stroke="rgba(255,255,255,.85)" stroke-width="1.0"/><path d="M16.2 5.2 h9.6" stroke="rgba(255,255,255,.85)" stroke-width="1.0"/><path d="M30.2 5.2 h9.6" stroke="rgba(255,255,255,.85)" stroke-width="1.0"/><path d="M44.2 5.2 h9.6" stroke="rgba(255,255,255,.85)" stroke-width="1.0"/><path d="M58.2 5.2 h9.6" stroke="rgba(255,255,255,.85)" stroke-width="1.0"/><path d="M2.2 15.5 h9.6" stroke="#484848" stroke-width="1.25"/><path d="M16.2 15.5 h9.6" stroke="#484848" stroke-width="1.25"/><path d="M30.2 15.5 h9.6" stroke="#484848" stroke-width="1.25"/><path d="M44.2 15.5 h9.6" stroke="#484848" stroke-width="1.25"/><path d="M58.2 15.5 h9.6" stroke="#484848" stroke-width="1.25"/><path d="M2.2 25.6 h9.6" stroke="#484848" stroke-width="1.25"/><path d="M16.2 25.6 h9.6" stroke="#484848" stroke-width="1.25"/><path d="M30.2 25.6 h9.6" stroke="#484848" stroke-width="1.25"/><path d="M44.2 25.6 h9.6" stroke="#484848" stroke-width="1.25"/><path d="M58.2 25.6 h9.6" stroke="#484848" stroke-width="1.25"/><path d="M2.2 35.5 h9.6" stroke="#484848" stroke-width="1.25"/><path d="M16.2 35.5 h9.6" stroke="#484848" stroke-width="1.25"/><path d="M30.2 35.5 h9.6" stroke="#484848" stroke-width="1.25"/><path d="M44.2 35.5 h9.6" stroke="#484848" stroke-width="1.25"/><path d="M58.2 35.5 h9.6" stroke="#484848" stroke-width="1.25"/><path d="M2.2 45.4 h9.6" stroke="#484848" stroke-width="1.25"/><path d="M16.2 45.4 h9.6" stroke="#484848" stroke-width="1.25"/><path d="M30.2 45.4 h9.6" stroke="#484848" stroke-width="1.25"/><path d="M44.2 45.4 h9.6" stroke="#484848" stroke-width="1.25"/><path d="M58.2 45.4 h9.6" stroke="#484848" stroke-width="1.25"/></svg>
<div style="left:1632.9px;top:181.5px;width:73.4px;height:53.8px;border:1px solid #e4e4e4;border-radius:2.5px;box-sizing:border-box;background:#fff;box-shadow:0 0 1.5px rgba(0,0,0,.12);"></div>
<svg style="left:1634.3px;top:182.9px" width="70" height="51" viewBox="0 0 70 50" preserveAspectRatio="none" fill="none"><rect x="0" y="0" width="70" height="50" fill="#fff"/><rect x="0" y="0" width="70" height="10.7" fill="#3e8853"/><path d="M0 20.3 H70" stroke="#579a6a" stroke-width="1"/><path d="M0 30.7 H70" stroke="#98c7a5" stroke-width="1.5"/><path d="M0 40.3 H70" stroke="#579a6a" stroke-width="1"/><path d="M0 11.1 H70" stroke="#579a6a" stroke-width="1"/><path d="M0.6 0 V50 M69.4 0 V50" stroke="#579a6a" stroke-width="1.2"/><path d="M0 0.5 H70" stroke="#3e8853" stroke-width="1"/><path d="M0 49.3 H70" stroke="#98c7a5" stroke-width="1.5"/><path d="M2.2 5.2 h9.6" stroke="rgba(255,255,255,.85)" stroke-width="1.0"/><path d="M16.2 5.2 h9.6" stroke="rgba(255,255,255,.85)" stroke-width="1.0"/><path d="M30.2 5.2 h9.6" stroke="rgba(255,255,255,.85)" stroke-width="1.0"/><path d="M44.2 5.2 h9.6" stroke="rgba(255,255,255,.85)" stroke-width="1.0"/><path d="M58.2 5.2 h9.6" stroke="rgba(255,255,255,.85)" stroke-width="1.0"/><path d="M2.2 15.5 h9.6" stroke="#484848" stroke-width="1.25"/><path d="M16.2 15.5 h9.6" stroke="#484848" stroke-width="1.25"/><path d="M30.2 15.5 h9.6" stroke="#484848" stroke-width="1.25"/><path d="M44.2 15.5 h9.6" stroke="#484848" stroke-width="1.25"/><path d="M58.2 15.5 h9.6" stroke="#484848" stroke-width="1.25"/><path d="M2.2 25.6 h9.6" stroke="#484848" stroke-width="1.25"/><path d="M16.2 25.6 h9.6" stroke="#484848" stroke-width="1.25"/><path d="M30.2 25.6 h9.6" stroke="#484848" stroke-width="1.25"/><path d="M44.2 25.6 h9.6" stroke="#484848" stroke-width="1.25"/><path d="M58.2 25.6 h9.6" stroke="#484848" stroke-width="1.25"/><path d="M2.2 35.5 h9.6" stroke="#484848" stroke-width="1.25"/><path d="M16.2 35.5 h9.6" stroke="#484848" stroke-width="1.25"/><path d="M30.2 35.5 h9.6" stroke="#484848" stroke-width="1.25"/><path d="M44.2 35.5 h9.6" stroke="#484848" stroke-width="1.25"/><path d="M58.2 35.5 h9.6" stroke="#484848" stroke-width="1.25"/><path d="M2.2 45.4 h9.6" stroke="#484848" stroke-width="1.25"/><path d="M16.2 45.4 h9.6" stroke="#484848" stroke-width="1.25"/><path d="M30.2 45.4 h9.6" stroke="#484848" stroke-width="1.25"/><path d="M44.2 45.4 h9.6" stroke="#484848" stroke-width="1.25"/><path d="M58.2 45.4 h9.6" stroke="#484848" stroke-width="1.25"/></svg>
<div style="left:1142.7px;top:242.15px;width:73.4px;height:53.8px;border:1px solid #e4e4e4;border-radius:2.5px;box-sizing:border-box;background:#fff;box-shadow:0 0 1.5px rgba(0,0,0,.12);"></div>
<svg style="left:1144.1px;top:243.6px" width="70" height="51" viewBox="0 0 70 50" preserveAspectRatio="none" fill="none"><rect x="0" y="0" width="70" height="50" fill="#fff"/><rect x="0" y="0" width="70" height="10.7" fill="#62a39f"/><path d="M0 20.3 H70" stroke="#79b1ad" stroke-width="1"/><path d="M0 30.7 H70" stroke="#b0d1cf" stroke-width="1.5"/><path d="M0 40.3 H70" stroke="#79b1ad" stroke-width="1"/><path d="M0 11.1 H70" stroke="#79b1ad" stroke-width="1"/><path d="M0.6 0 V50 M69.4 0 V50" stroke="#79b1ad" stroke-width="1.2"/><path d="M0 0.5 H70" stroke="#62a39f" stroke-width="1"/><path d="M0 49.3 H70" stroke="#b0d1cf" stroke-width="1.5"/><path d="M2.2 5.2 h9.6" stroke="rgba(255,255,255,.85)" stroke-width="1.0"/><path d="M16.2 5.2 h9.6" stroke="rgba(255,255,255,.85)" stroke-width="1.0"/><path d="M30.2 5.2 h9.6" stroke="rgba(255,255,255,.85)" stroke-width="1.0"/><path d="M44.2 5.2 h9.6" stroke="rgba(255,255,255,.85)" stroke-width="1.0"/><path d="M58.2 5.2 h9.6" stroke="rgba(255,255,255,.85)" stroke-width="1.0"/><path d="M2.2 15.5 h9.6" stroke="#484848" stroke-width="1.25"/><path d="M16.2 15.5 h9.6" stroke="#484848" stroke-width="1.25"/><path d="M30.2 15.5 h9.6" stroke="#484848" stroke-width="1.25"/><path d="M44.2 15.5 h9.6" stroke="#484848" stroke-width="1.25"/><path d="M58.2 15.5 h9.6" stroke="#484848" stroke-width="1.25"/><path d="M2.2 25.6 h9.6" stroke="#484848" stroke-width="1.25"/><path d="M16.2 25.6 h9.6" stroke="#484848" stroke-width="1.25"/><path d="M30.2 25.6 h9.6" stroke="#484848" stroke-width="1.25"/><path d="M44.2 25.6 h9.6" stroke="#484848" stroke-width="1.25"/><path d="M58.2 25.6 h9.6" stroke="#484848" stroke-width="1.25"/><path d="M2.2 35.5 h9.6" stroke="#484848" stroke-width="1.25"/><path d="M16.2 35.5 h9.6" stroke="#484848" stroke-width="1.25"/><path d="M30.2 35.5 h9.6" stroke="#484848" stroke-width="1.25"/><path d="M44.2 35.5 h9.6" stroke="#484848" stroke-width="1.25"/><path d="M58.2 35.5 h9.6" stroke="#484848" stroke-width="1.25"/><path d="M2.2 45.4 h9.6" stroke="#484848" stroke-width="1.25"/><path d="M16.2 45.4 h9.6" stroke="#484848" stroke-width="1.25"/><path d="M30.2 45.4 h9.6" stroke="#484848" stroke-width="1.25"/><path d="M44.2 45.4 h9.6" stroke="#484848" stroke-width="1.25"/><path d="M58.2 45.4 h9.6" stroke="#484848" stroke-width="1.25"/></svg>
<div style="left:1224.4px;top:242.15px;width:73.4px;height:53.8px;border:1px solid #e4e4e4;border-radius:2.5px;box-sizing:border-box;background:#fff;box-shadow:0 0 1.5px rgba(0,0,0,.12);"></div>
<svg style="left:1225.8px;top:243.6px" width="70" height="51" viewBox="0 0 70 50" preserveAspectRatio="none" fill="none"><rect x="0" y="0" width="70" height="50" fill="#fff"/><rect x="0" y="10.7" width="70" height="9.600000000000001" fill="#d9d9d9"/><rect x="0" y="30.7" width="70" height="9.599999999999998" fill="#d9d9d9"/><path d="M0 10.7 H70" stroke="#1a1a1a" stroke-width="1.1"/><path d="M14 0 V50" stroke="#1a1a1a" stroke-width="1.1"/><path d="M0 20.3 H70" stroke="#1a1a1a" stroke-width="1.1"/><path d="M28 0 V50" stroke="#1a1a1a" stroke-width="1.1"/><path d="M0 30.7 H70" stroke="#1a1a1a" stroke-width="1.1"/><path d="M42 0 V50" stroke="#1a1a1a" stroke-width="1.1"/><path d="M0 40.3 H70" stroke="#1a1a1a" stroke-width="1.1"/><path d="M56 0 V50" stroke="#1a1a1a" stroke-width="1.1"/><rect x="0.6" y="0.6" width="68.8" height="48.8" fill="none" stroke="#1a1a1a" stroke-width="1.2"/><path d="M2.6 5.2 h8.9" stroke="#484848" stroke-width="1.35"/><path d="M16.6 5.2 h8.9" stroke="#484848" stroke-width="1.35"/><path d="M30.6 5.2 h8.9" stroke="#484848" stroke-width="1.35"/><path d="M44.6 5.2 h8.9" stroke="#484848" stroke-width="1.35"/><path d="M58.6 5.2 h8.9" stroke="#484848" stroke-width="1.35"/><path d="M2.6 15.5 h8.9" stroke="#484848" stroke-width="1.35"/><path d="M16.6 15.5 h8.9" stroke="#484848" stroke-width="1.35"/><path d="M30.6 15.5 h8.9" stroke="#484848" stroke-width="1.35"/><path d="M44.6 15.5 h8.9" stroke="#484848" stroke-width="1.35"/><path d="M58.6 15.5 h8.9" stroke="#484848" stroke-width="1.35"/><path d="M2.6 25.6 h8.9" stroke="#484848" stroke-width="1.35"/><path d="M16.6 25.6 h8.9" stroke="#484848" stroke-width="1.35"/><path d="M30.6 25.6 h8.9" stroke="#484848" stroke-width="1.35"/><path d="M44.6 25.6 h8.9" stroke="#484848" stroke-width="1.35"/><path d="M58.6 25.6 h8.9" stroke="#484848" stroke-width="1.35"/><path d="M2.6 35.5 h8.9" stroke="#484848" stroke-width="1.35"/><path d="M16.6 35.5 h8.9" stroke="#484848" stroke-width="1.35"/><path d="M30.6 35.5 h8.9" stroke="#484848" stroke-width="1.35"/><path d="M44.6 35.5 h8.9" stroke="#484848" stroke-width="1.35"/><path d="M58.6 35.5 h8.9" stroke="#484848" stroke-width="1.35"/><path d="M2.6 45.4 h8.9" stroke="#484848" stroke-width="1.35"/><path d="M16.6 45.4 h8.9" stroke="#484848" stroke-width="1.35"/><path d="M30.6 45.4 h8.9" stroke="#484848" stroke-width="1.35"/><path d="M44.6 45.4 h8.9" stroke="#484848" stroke-width="1.35"/><path d="M58.6 45.4 h8.9" stroke="#484848" stroke-width="1.35"/></svg>
<div style="left:1304.4px;top:240.35px;width:76.6px;height:57.4px;border:2.1px solid #5b87e8;border-radius:4.5px;box-sizing:border-box;background:#dbe6fb;"></div>
<div style="left:1306.1000000000001px;top:242.15px;width:73.4px;height:53.8px;border:1px solid #e4e4e4;border-radius:2.5px;box-sizing:border-box;background:#fff;box-shadow:0 0 1.5px rgba(0,0,0,.12);"></div>
<svg style="left:1307.5px;top:243.6px" width="70" height="51" viewBox="0 0 70 50" preserveAspectRatio="none" fill="none"><rect x="0" y="0" width="70" height="50" fill="#fff"/><rect x="0" y="10.7" width="70" height="9.600000000000001" fill="#d2effa"/><rect x="0" y="30.7" width="70" height="9.599999999999998" fill="#d2effa"/><path d="M0 10.7 H70" stroke="#3db9e8" stroke-width="1.1"/><path d="M14 0 V50" stroke="#3db9e8" stroke-width="1.1"/><path d="M0 20.3 H70" stroke="#3db9e8" stroke-width="1.1"/><path d="M28 0 V50" stroke="#3db9e8" stroke-width="1.1"/><path d="M0 30.7 H70" stroke="#3db9e8" stroke-width="1.1"/><path d="M42 0 V50" stroke="#3db9e8" stroke-width="1.1"/><path d="M0 40.3 H70" stroke="#3db9e8" stroke-width="1.1"/><path d="M56 0 V50" stroke="#3db9e8" stroke-width="1.1"/><rect x="0.6" y="0.6" width="68.8" height="48.8" fill="none" stroke="#3db9e8" stroke-width="1.2"/><path d="M0 49.4 H70" stroke="#8ed6f2" stroke-width="1.3"/><path d="M2.6 5.2 h8.9" stroke="#484848" stroke-width="1.35"/><path d="M16.6 5.2 h8.9" stroke="#484848" stroke-width="1.35"/><path d="M30.6 5.2 h8.9" stroke="#484848" stroke-width="1.35"/><path d="M44.6 5.2 h8.9" stroke="#484848" stroke-width="1.35"/><path d="M58.6 5.2 h8.9" stroke="#484848" stroke-width="1.35"/><path d="M2.6 15.5 h8.9" stroke="#484848" stroke-width="1.35"/><path d="M16.6 15.5 h8.9" stroke="#484848" stroke-width="1.35"/><path d="M30.6 15.5 h8.9" stroke="#484848" stroke-width="1.35"/><path d="M44.6 15.5 h8.9" stroke="#484848" stroke-width="1.35"/><path d="M58.6 15.5 h8.9" stroke="#484848" stroke-width="1.35"/><path d="M2.6 25.6 h8.9" stroke="#484848" stroke-width="1.35"/><path d="M16.6 25.6 h8.9" stroke="#484848" stroke-width="1.35"/><path d="M30.6 25.6 h8.9" stroke="#484848" stroke-width="1.35"/><path d="M44.6 25.6 h8.9" stroke="#484848" stroke-width="1.35"/><path d="M58.6 25.6 h8.9" stroke="#484848" stroke-width="1.35"/><path d="M2.6 35.5 h8.9" stroke="#484848" stroke-width="1.35"/><path d="M16.6 35.5 h8.9" stroke="#484848" stroke-width="1.35"/><path d="M30.6 35.5 h8.9" stroke="#484848" stroke-width="1.35"/><path d="M44.6 35.5 h8.9" stroke="#484848" stroke-width="1.35"/><path d="M58.6 35.5 h8.9" stroke="#484848" stroke-width="1.35"/><path d="M2.6 45.4 h8.9" stroke="#484848" stroke-width="1.35"/><path d="M16.6 45.4 h8.9" stroke="#484848" stroke-width="1.35"/><path d="M30.6 45.4 h8.9" stroke="#484848" stroke-width="1.35"/><path d="M44.6 45.4 h8.9" stroke="#484848" stroke-width="1.35"/><path d="M58.6 45.4 h8.9" stroke="#484848" stroke-width="1.35"/></svg>
<div style="left:1387.8000000000002px;top:242.15px;width:73.4px;height:53.8px;border:1px solid #e4e4e4;border-radius:2.5px;box-sizing:border-box;background:#fff;box-shadow:0 0 1.5px rgba(0,0,0,.12);"></div>
<svg style="left:1389.2px;top:243.6px" width="70" height="51" viewBox="0 0 70 50" preserveAspectRatio="none" fill="none"><rect x="0" y="0" width="70" height="50" fill="#fff"/><rect x="0" y="10.7" width="70" height="9.600000000000001" fill="#d1e5f5"/><rect x="0" y="30.7" width="70" height="9.599999999999998" fill="#d1e5f5"/><path d="M0 10.7 H70" stroke="#4a95d0" stroke-width="1.1"/><path d="M14 0 V50" stroke="#4a95d0" stroke-width="1.1"/><path d="M0 20.3 H70" stroke="#4a95d0" stroke-width="1.1"/><path d="M28 0 V50" stroke="#4a95d0" stroke-width="1.1"/><path d="M0 30.7 H70" stroke="#4a95d0" stroke-width="1.1"/><path d="M42 0 V50" stroke="#4a95d0" stroke-width="1.1"/><path d="M0 40.3 H70" stroke="#4a95d0" stroke-width="1.1"/><path d="M56 0 V50" stroke="#4a95d0" stroke-width="1.1"/><rect x="0.6" y="0.6" width="68.8" height="48.8" fill="none" stroke="#4a95d0" stroke-width="1.2"/><path d="M0 49.4 H70" stroke="#90bfe6" stroke-width="1.3"/><path d="M2.6 5.2 h8.9" stroke="#484848" stroke-width="1.35"/><path d="M16.6 5.2 h8.9" stroke="#484848" stroke-width="1.35"/><path d="M30.6 5.2 h8.9" stroke="#484848" stroke-width="1.35"/><path d="M44.6 5.2 h8.9" stroke="#484848" stroke-width="1.35"/><path d="M58.6 5.2 h8.9" stroke="#484848" stroke-width="1.35"/><path d="M2.6 15.5 h8.9" stroke="#484848" stroke-width="1.35"/><path d="M16.6 15.5 h8.9" stroke="#484848" stroke-width="1.35"/><path d="M30.6 15.5 h8.9" stroke="#484848" stroke-width="1.35"/><path d="M44.6 15.5 h8.9" stroke="#484848" stroke-width="1.35"/><path d="M58.6 15.5 h8.9" stroke="#484848" stroke-width="1.35"/><path d="M2.6 25.6 h8.9" stroke="#484848" stroke-width="1.35"/><path d="M16.6 25.6 h8.9" stroke="#484848" stroke-width="1.35"/><path d="M30.6 25.6 h8.9" stroke="#484848" stroke-width="1.35"/><path d="M44.6 25.6 h8.9" stroke="#484848" stroke-width="1.35"/><path d="M58.6 25.6 h8.9" stroke="#484848" stroke-width="1.35"/><path d="M2.6 35.5 h8.9" stroke="#484848" stroke-width="1.35"/><path d="M16.6 35.5 h8.9" stroke="#484848" stroke-width="1.35"/><path d="M30.6 35.5 h8.9" stroke="#484848" stroke-width="1.35"/><path d="M44.6 35.5 h8.9" stroke="#484848" stroke-width="1.35"/><path d="M58.6 35.5 h8.9" stroke="#484848" stroke-width="1.35"/><path d="M2.6 45.4 h8.9" stroke="#484848" stroke-width="1.35"/><path d="M16.6 45.4 h8.9" stroke="#484848" stroke-width="1.35"/><path d="M30.6 45.4 h8.9" stroke="#484848" stroke-width="1.35"/><path d="M44.6 45.4 h8.9" stroke="#484848" stroke-width="1.35"/><path d="M58.6 45.4 h8.9" stroke="#484848" stroke-width="1.35"/></svg>
<div style="left:1469.5px;top:242.15px;width:73.4px;height:53.8px;border:1px solid #e4e4e4;border-radius:2.5px;box-sizing:border-box;background:#fff;box-shadow:0 0 1.5px rgba(0,0,0,.12);"></div>
<svg style="left:1470.9px;top:243.6px" width="70" height="51" viewBox="0 0 70 50" preserveAspectRatio="none" fill="none"><rect x="0" y="0" width="70" height="50" fill="#fff"/><rect x="0" y="10.7" width="70" height="9.600000000000001" fill="#d4f5f7"/><rect x="0" y="30.7" width="70" height="9.599999999999998" fill="#d4f5f7"/><path d="M0 10.7 H70" stroke="#45d4dd" stroke-width="1.1"/><path d="M14 0 V50" stroke="#45d4dd" stroke-width="1.1"/><path d="M0 20.3 H70" stroke="#45d4dd" stroke-width="1.1"/><path d="M28 0 V50" stroke="#45d4dd" stroke-width="1.1"/><path d="M0 30.7 H70" stroke="#45d4dd" stroke-width="1.1"/><path d="M42 0 V50" stroke="#45d4dd" stroke-width="1.1"/><path d="M0 40.3 H70" stroke="#45d4dd" stroke-width="1.1"/><path d="M56 0 V50" stroke="#45d4dd" stroke-width="1.1"/><rect x="0.6" y="0.6" width="68.8" height="48.8" fill="none" stroke="#45d4dd" stroke-width="1.2"/><path d="M0 49.4 H70" stroke="#93e6eb" stroke-width="1.3"/><path d="M2.6 5.2 h8.9" stroke="#484848" stroke-width="1.35"/><path d="M16.6 5.2 h8.9" stroke="#484848" stroke-width="1.35"/><path d="M30.6 5.2 h8.9" stroke="#484848" stroke-width="1.35"/><path d="M44.6 5.2 h8.9" stroke="#484848" stroke-width="1.35"/><path d="M58.6 5.2 h8.9" stroke="#484848" stroke-width="1.35"/><path d="M2.6 15.5 h8.9" stroke="#484848" stroke-width="1.35"/><path d="M16.6 15.5 h8.9" stroke="#484848" stroke-width="1.35"/><path d="M30.6 15.5 h8.9" stroke="#484848" stroke-width="1.35"/><path d="M44.6 15.5 h8.9" stroke="#484848" stroke-width="1.35"/><path d="M58.6 15.5 h8.9" stroke="#484848" stroke-width="1.35"/><path d="M2.6 25.6 h8.9" stroke="#484848" stroke-width="1.35"/><path d="M16.6 25.6 h8.9" stroke="#484848" stroke-width="1.35"/><path d="M30.6 25.6 h8.9" stroke="#484848" stroke-width="1.35"/><path d="M44.6 25.6 h8.9" stroke="#484848" stroke-width="1.35"/><path d="M58.6 25.6 h8.9" stroke="#484848" stroke-width="1.35"/><path d="M2.6 35.5 h8.9" stroke="#484848" stroke-width="1.35"/><path d="M16.6 35.5 h8.9" stroke="#484848" stroke-width="1.35"/><path d="M30.6 35.5 h8.9" stroke="#484848" stroke-width="1.35"/><path d="M44.6 35.5 h8.9" stroke="#484848" stroke-width="1.35"/><path d="M58.6 35.5 h8.9" stroke="#484848" stroke-width="1.35"/><path d="M2.6 45.4 h8.9" stroke="#484848" stroke-width="1.35"/><path d="M16.6 45.4 h8.9" stroke="#484848" stroke-width="1.35"/><path d="M30.6 45.4 h8.9" stroke="#484848" stroke-width="1.35"/><path d="M44.6 45.4 h8.9" stroke="#484848" stroke-width="1.35"/><path d="M58.6 45.4 h8.9" stroke="#484848" stroke-width="1.35"/></svg>
<div style="left:1551.2px;top:242.15px;width:73.4px;height:53.8px;border:1px solid #e4e4e4;border-radius:2.5px;box-sizing:border-box;background:#fff;box-shadow:0 0 1.5px rgba(0,0,0,.12);"></div>
<svg style="left:1552.6px;top:243.6px" width="70" height="51" viewBox="0 0 70 50" preserveAspectRatio="none" fill="none"><rect x="0" y="0" width="70" height="50" fill="#fff"/><rect x="0" y="10.7" width="70" height="9.600000000000001" fill="#d9f1ea"/><rect x="0" y="30.7" width="70" height="9.599999999999998" fill="#d9f1ea"/><path d="M0 10.7 H70" stroke="#5cc3a5" stroke-width="1.1"/><path d="M14 0 V50" stroke="#5cc3a5" stroke-width="1.1"/><path d="M0 20.3 H70" stroke="#5cc3a5" stroke-width="1.1"/><path d="M28 0 V50" stroke="#5cc3a5" stroke-width="1.1"/><path d="M0 30.7 H70" stroke="#5cc3a5" stroke-width="1.1"/><path d="M42 0 V50" stroke="#5cc3a5" stroke-width="1.1"/><path d="M0 40.3 H70" stroke="#5cc3a5" stroke-width="1.1"/><path d="M56 0 V50" stroke="#5cc3a5" stroke-width="1.1"/><rect x="0.6" y="0.6" width="68.8" height="48.8" fill="none" stroke="#5cc3a5" stroke-width="1.2"/><path d="M0 49.4 H70" stroke="#a0dccb" stroke-width="1.3"/><path d="M2.6 5.2 h8.9" stroke="#484848" stroke-width="1.35"/><path d="M16.6 5.2 h8.9" stroke="#484848" stroke-width="1.35"/><path d="M30.6 5.2 h8.9" stroke="#484848" stroke-width="1.35"/><path d="M44.6 5.2 h8.9" stroke="#484848" stroke-width="1.35"/><path d="M58.6 5.2 h8.9" stroke="#484848" stroke-width="1.35"/><path d="M2.6 15.5 h8.9" stroke="#484848" stroke-width="1.35"/><path d="M16.6 15.5 h8.9" stroke="#484848" stroke-width="1.35"/><path d="M30.6 15.5 h8.9" stroke="#484848" stroke-width="1.35"/><path d="M44.6 15.5 h8.9" stroke="#484848" stroke-width="1.35"/><path d="M58.6 15.5 h8.9" stroke="#484848" stroke-width="1.35"/><path d="M2.6 25.6 h8.9" stroke="#484848" stroke-width="1.35"/><path d="M16.6 25.6 h8.9" stroke="#484848" stroke-width="1.35"/><path d="M30.6 25.6 h8.9" stroke="#484848" stroke-width="1.35"/><path d="M44.6 25.6 h8.9" stroke="#484848" stroke-width="1.35"/><path d="M58.6 25.6 h8.9" stroke="#484848" stroke-width="1.35"/><path d="M2.6 35.5 h8.9" stroke="#484848" stroke-width="1.35"/><path d="M16.6 35.5 h8.9" stroke="#484848" stroke-width="1.35"/><path d="M30.6 35.5 h8.9" stroke="#484848" stroke-width="1.35"/><path d="M44.6 35.5 h8.9" stroke="#484848" stroke-width="1.35"/><path d="M58.6 35.5 h8.9" stroke="#484848" stroke-width="1.35"/><path d="M2.6 45.4 h8.9" stroke="#484848" stroke-width="1.35"/><path d="M16.6 45.4 h8.9" stroke="#484848" stroke-width="1.35"/><path d="M30.6 45.4 h8.9" stroke="#484848" stroke-width="1.35"/><path d="M44.6 45.4 h8.9" stroke="#484848" stroke-width="1.35"/><path d="M58.6 45.4 h8.9" stroke="#484848" stroke-width="1.35"/></svg>
<div style="left:1632.9px;top:242.15px;width:73.4px;height:53.8px;border:1px solid #e4e4e4;border-radius:2.5px;box-sizing:border-box;background:#fff;box-shadow:0 0 1.5px rgba(0,0,0,.12);"></div>
<svg style="left:1634.3px;top:243.6px" width="70" height="51" viewBox="0 0 70 50" preserveAspectRatio="none" fill="none"><rect x="0" y="0" width="70" height="50" fill="#fff"/><rect x="0" y="10.7" width="70" height="9.600000000000001" fill="#d3ebd9"/><rect x="0" y="30.7" width="70" height="9.599999999999998" fill="#d3ebd9"/><path d="M0 10.7 H70" stroke="#579a6a" stroke-width="1.1"/><path d="M14 0 V50" stroke="#579a6a" stroke-width="1.1"/><path d="M0 20.3 H70" stroke="#579a6a" stroke-width="1.1"/><path d="M28 0 V50" stroke="#579a6a" stroke-width="1.1"/><path d="M0 30.7 H70" stroke="#579a6a" stroke-width="1.1"/><path d="M42 0 V50" stroke="#579a6a" stroke-width="1.1"/><path d="M0 40.3 H70" stroke="#579a6a" stroke-width="1.1"/><path d="M56 0 V50" stroke="#579a6a" stroke-width="1.1"/><rect x="0.6" y="0.6" width="68.8" height="48.8" fill="none" stroke="#579a6a" stroke-width="1.2"/><path d="M0 49.4 H70" stroke="#98c7a5" stroke-width="1.3"/><path d="M2.6 5.2 h8.9" stroke="#484848" stroke-width="1.35"/><path d="M16.6 5.2 h8.9" stroke="#484848" stroke-width="1.35"/><path d="M30.6 5.2 h8.9" stroke="#484848" stroke-width="1.35"/><path d="M44.6 5.2 h8.9" stroke="#484848" stroke-width="1.35"/><path d="M58.6 5.2 h8.9" stroke="#484848" stroke-width="1.35"/><path d="M2.6 15.5 h8.9" stroke="#484848" stroke-width="1.35"/><path d="M16.6 15.5 h8.9" stroke="#484848" stroke-width="1.35"/><path d="M30.6 15.5 h8.9" stroke="#484848" stroke-width="1.35"/><path d="M44.6 15.5 h8.9" stroke="#484848" stroke-width="1.35"/><path d="M58.6 15.5 h8.9" stroke="#484848" stroke-width="1.35"/><path d="M2.6 25.6 h8.9" stroke="#484848" stroke-width="1.35"/><path d="M16.6 25.6 h8.9" stroke="#484848" stroke-width="1.35"/><path d="M30.6 25.6 h8.9" stroke="#484848" stroke-width="1.35"/><path d="M44.6 25.6 h8.9" stroke="#484848" stroke-width="1.35"/><path d="M58.6 25.6 h8.9" stroke="#484848" stroke-width="1.35"/><path d="M2.6 35.5 h8.9" stroke="#484848" stroke-width="1.35"/><path d="M16.6 35.5 h8.9" stroke="#484848" stroke-width="1.35"/><path d="M30.6 35.5 h8.9" stroke="#484848" stroke-width="1.35"/><path d="M44.6 35.5 h8.9" stroke="#484848" stroke-width="1.35"/><path d="M58.6 35.5 h8.9" stroke="#484848" stroke-width="1.35"/><path d="M2.6 45.4 h8.9" stroke="#484848" stroke-width="1.35"/><path d="M16.6 45.4 h8.9" stroke="#484848" stroke-width="1.35"/><path d="M30.6 45.4 h8.9" stroke="#484848" stroke-width="1.35"/><path d="M44.6 45.4 h8.9" stroke="#484848" stroke-width="1.35"/><path d="M58.6 45.4 h8.9" stroke="#484848" stroke-width="1.35"/></svg>
<div style="left:1142.7px;top:302.45px;width:73.4px;height:53.8px;border:1px solid #e4e4e4;border-radius:2.5px;box-sizing:border-box;background:#fff;box-shadow:0 0 1.5px rgba(0,0,0,.12);"></div>
<svg style="left:1144.1px;top:303.8px" width="70" height="51" viewBox="0 0 70 50" preserveAspectRatio="none" fill="none"><rect x="0" y="0" width="70" height="50" fill="#fff"/><rect x="0" y="10.7" width="70" height="9.600000000000001" fill="#dfedec"/><rect x="0" y="30.7" width="70" height="9.599999999999998" fill="#dfedec"/><path d="M0 10.7 H70" stroke="#79b1ad" stroke-width="1.1"/><path d="M14 0 V50" stroke="#79b1ad" stroke-width="1.1"/><path d="M0 20.3 H70" stroke="#79b1ad" stroke-width="1.1"/><path d="M28 0 V50" stroke="#79b1ad" stroke-width="1.1"/><path d="M0 30.7 H70" stroke="#79b1ad" stroke-width="1.1"/><path d="M42 0 V50" stroke="#79b1ad" stroke-width="1.1"/><path d="M0 40.3 H70" stroke="#79b1ad" stroke-width="1.1"/><path d="M56 0 V50" stroke="#79b1ad" stroke-width="1.1"/><rect x="0.6" y="0.6" width="68.8" height="48.8" fill="none" stroke="#79b1ad" stroke-width="1.2"/><path d="M0 49.4 H70" stroke="#b0d1cf" stroke-width="1.3"/><path d="M2.6 5.2 h8.9" stroke="#484848" stroke-width="1.35"/><path d="M16.6 5.2 h8.9" stroke="#484848" stroke-width="1.35"/><path d="M30.6 5.2 h8.9" stroke="#484848" stroke-width="1.35"/><path d="M44.6 5.2 h8.9" stroke="#484848" stroke-width="1.35"/><path d="M58.6 5.2 h8.9" stroke="#484848" stroke-width="1.35"/><path d="M2.6 15.5 h8.9" stroke="#484848" stroke-width="1.35"/><path d="M16.6 15.5 h8.9" stroke="#484848" stroke-width="1.35"/><path d="M30.6 15.5 h8.9" stroke="#484848" stroke-width="1.35"/><path d="M44.6 15.5 h8.9" stroke="#484848" stroke-width="1.35"/><path d="M58.6 15.5 h8.9" stroke="#484848" stroke-width="1.35"/><path d="M2.6 25.6 h8.9" stroke="#484848" stroke-width="1.35"/><path d="M16.6 25.6 h8.9" stroke="#484848" stroke-width="1.35"/><path d="M30.6 25.6 h8.9" stroke="#484848" stroke-width="1.35"/><path d="M44.6 25.6 h8.9" stroke="#484848" stroke-width="1.35"/><path d="M58.6 25.6 h8.9" stroke="#484848" stroke-width="1.35"/><path d="M2.6 35.5 h8.9" stroke="#484848" stroke-width="1.35"/><path d="M16.6 35.5 h8.9" stroke="#484848" stroke-width="1.35"/><path d="M30.6 35.5 h8.9" stroke="#484848" stroke-width="1.35"/><path d="M44.6 35.5 h8.9" stroke="#484848" stroke-width="1.35"/><path d="M58.6 35.5 h8.9" stroke="#484848" stroke-width="1.35"/><path d="M2.6 45.4 h8.9" stroke="#484848" stroke-width="1.35"/><path d="M16.6 45.4 h8.9" stroke="#484848" stroke-width="1.35"/><path d="M30.6 45.4 h8.9" stroke="#484848" stroke-width="1.35"/><path d="M44.6 45.4 h8.9" stroke="#484848" stroke-width="1.35"/><path d="M58.6 45.4 h8.9" stroke="#484848" stroke-width="1.35"/></svg>
<div style="left:1142.7px;top:396.75px;width:73.4px;height:53.8px;border:1px solid #e4e4e4;border-radius:2.5px;box-sizing:border-box;background:#fff;box-shadow:0 0 1.5px rgba(0,0,0,.12);"></div>
<svg style="left:1144.1px;top:398.1px" width="70" height="51" viewBox="0 0 70 50" preserveAspectRatio="none" fill="none"><rect x="0" y="0" width="70" height="50" fill="#fff"/><rect x="0" y="10.7" width="70" height="9.600000000000001" fill="#d6d6d6"/><rect x="0" y="30.7" width="70" height="9.599999999999998" fill="#d6d6d6"/><path d="M0 20.3 H70" stroke="#808080" stroke-width="1.5"/><path d="M0 30.7 H70" stroke="#111" stroke-width="1"/><path d="M0 40.3 H70" stroke="#808080" stroke-width="1.5"/><path d="M0 49.5 H70" stroke="#111" stroke-width="1"/><path d="M0.5 0 V50" stroke="#111" stroke-width="1"/><path d="M69.4 0 V50" stroke="#808080" stroke-width="1.2"/><rect x="0" y="0" width="70" height="10.399999999999999" fill="#000000"/><path d="M2.2 5.2 h9.6" stroke="rgba(255,255,255,.62)" stroke-width="1.2"/><path d="M16.2 5.2 h9.6" stroke="rgba(255,255,255,.62)" stroke-width="1.2"/><path d="M30.2 5.2 h9.6" stroke="rgba(255,255,255,.62)" stroke-width="1.2"/><path d="M44.2 5.2 h9.6" stroke="rgba(255,255,255,.62)" stroke-width="1.2"/><path d="M58.2 5.2 h9.6" stroke="rgba(255,255,255,.62)" stroke-width="1.2"/><path d="M2.2 15.5 h9.6" stroke="#484848" stroke-width="1.25"/><path d="M16.2 15.5 h9.6" stroke="#484848" stroke-width="1.25"/><path d="M30.2 15.5 h9.6" stroke="#484848" stroke-width="1.25"/><path d="M44.2 15.5 h9.6" stroke="#484848" stroke-width="1.25"/><path d="M58.2 15.5 h9.6" stroke="#484848" stroke-width="1.25"/><path d="M2.2 25.6 h9.6" stroke="#484848" stroke-width="1.25"/><path d="M16.2 25.6 h9.6" stroke="#484848" stroke-width="1.25"/><path d="M30.2 25.6 h9.6" stroke="#484848" stroke-width="1.25"/><path d="M44.2 25.6 h9.6" stroke="#484848" stroke-width="1.25"/><path d="M58.2 25.6 h9.6" stroke="#484848" stroke-width="1.25"/><path d="M2.2 35.5 h9.6" stroke="#484848" stroke-width="1.25"/><path d="M16.2 35.5 h9.6" stroke="#484848" stroke-width="1.25"/><path d="M30.2 35.5 h9.6" stroke="#484848" stroke-width="1.25"/><path d="M44.2 35.5 h9.6" stroke="#484848" stroke-width="1.25"/><path d="M58.2 35.5 h9.6" stroke="#484848" stroke-width="1.25"/><path d="M2.2 45.4 h9.6" stroke="#484848" stroke-width="1.25"/><path d="M16.2 45.4 h9.6" stroke="#484848" stroke-width="1.25"/><path d="M30.2 45.4 h9.6" stroke="#484848" stroke-width="1.25"/><path d="M44.2 45.4 h9.6" stroke="#484848" stroke-width="1.25"/><path d="M58.2 45.4 h9.6" stroke="#484848" stroke-width="1.25"/></svg>
<div style="left:1224.4px;top:396.75px;width:73.4px;height:53.8px;border:1px solid #e4e4e4;border-radius:2.5px;box-sizing:border-box;background:#fff;box-shadow:0 0 1.5px rgba(0,0,0,.12);"></div>
<svg style="left:1225.8px;top:398.1px" width="70" height="51" viewBox="0 0 70 50" preserveAspectRatio="none" fill="none"><rect x="0" y="0" width="70" height="50" fill="#fff"/><rect x="0" y="10.7" width="70" height="9.600000000000001" fill="#d2effa"/><rect x="0" y="30.7" width="70" height="9.599999999999998" fill="#d2effa"/><path d="M0 20.3 H70" stroke="#8ed6f2" stroke-width="1.5"/><path d="M0 30.7 H70" stroke="#8ed6f2" stroke-width="1"/><path d="M0 40.3 H70" stroke="#8ed6f2" stroke-width="1.5"/><path d="M0 49.5 H70" stroke="#8ed6f2" stroke-width="1"/><path d="M0.5 0 V50" stroke="#8ed6f2" stroke-width="1"/><path d="M69.4 0 V50" stroke="#8ed6f2" stroke-width="1.2"/><rect x="0" y="0" width="70" height="10.399999999999999" fill="#1cade4"/><path d="M2.2 5.2 h9.6" stroke="rgba(255,255,255,.7)" stroke-width="1.2"/><path d="M16.2 5.2 h9.6" stroke="rgba(255,255,255,.7)" stroke-width="1.2"/><path d="M30.2 5.2 h9.6" stroke="rgba(255,255,255,.7)" stroke-width="1.2"/><path d="M44.2 5.2 h9.6" stroke="rgba(255,255,255,.7)" stroke-width="1.2"/><path d="M58.2 5.2 h9.6" stroke="rgba(255,255,255,.7)" stroke-width="1.2"/><path d="M2.2 15.5 h9.6" stroke="#484848" stroke-width="1.25"/><path d="M16.2 15.5 h9.6" stroke="#484848" stroke-width="1.25"/><path d="M30.2 15.5 h9.6" stroke="#484848" stroke-width="1.25"/><path d="M44.2 15.5 h9.6" stroke="#484848" stroke-width="1.25"/><path d="M58.2 15.5 h9.6" stroke="#484848" stroke-width="1.25"/><path d="M2.2 25.6 h9.6" stroke="#484848" stroke-width="1.25"/><path d="M16.2 25.6 h9.6" stroke="#484848" stroke-width="1.25"/><path d="M30.2 25.6 h9.6" stroke="#484848" stroke-width="1.25"/><path d="M44.2 25.6 h9.6" stroke="#484848" stroke-width="1.25"/><path d="M58.2 25.6 h9.6" stroke="#484848" stroke-width="1.25"/><path d="M2.2 35.5 h9.6" stroke="#484848" stroke-width="1.25"/><path d="M16.2 35.5 h9.6" stroke="#484848" stroke-width="1.25"/><path d="M30.2 35.5 h9.6" stroke="#484848" stroke-width="1.25"/><path d="M44.2 35.5 h9.6" stroke="#484848" stroke-width="1.25"/><path d="M58.2 35.5 h9.6" stroke="#484848" stroke-width="1.25"/><path d="M2.2 45.4 h9.6" stroke="#484848" stroke-width="1.25"/><path d="M16.2 45.4 h9.6" stroke="#484848" stroke-width="1.25"/><path d="M30.2 45.4 h9.6" stroke="#484848" stroke-width="1.25"/><path d="M44.2 45.4 h9.6" stroke="#484848" stroke-width="1.25"/><path d="M58.2 45.4 h9.6" stroke="#484848" stroke-width="1.25"/></svg>
<div style="left:1306.1000000000001px;top:396.75px;width:73.4px;height:53.8px;border:1px solid #e4e4e4;border-radius:2.5px;box-sizing:border-box;background:#fff;box-shadow:0 0 1.5px rgba(0,0,0,.12);"></div>
<svg style="left:1307.5px;top:398.1px" width="70" height="51" viewBox="0 0 70 50" preserveAspectRatio="none" fill="none"><rect x="0" y="0" width="70" height="50" fill="#fff"/><rect x="0" y="10.7" width="70" height="9.600000000000001" fill="#d1e5f5"/><rect x="0" y="30.7" width="70" height="9.599999999999998" fill="#d1e5f5"/><path d="M0 20.3 H70" stroke="#90bfe6" stroke-width="1.5"/><path d="M0 30.7 H70" stroke="#90bfe6" stroke-width="1"/><path d="M0 40.3 H70" stroke="#90bfe6" stroke-width="1.5"/><path d="M0 49.5 H70" stroke="#90bfe6" stroke-width="1"/><path d="M0.5 0 V50" stroke="#90bfe6" stroke-width="1"/><path d="M69.4 0 V50" stroke="#90bfe6" stroke-width="1.2"/><rect x="0" y="0" width="70" height="10.399999999999999" fill="#2683c6"/><path d="M2.2 5.2 h9.6" stroke="rgba(255,255,255,.7)" stroke-width="1.2"/><path d="M16.2 5.2 h9.6" stroke="rgba(255,255,255,.7)" stroke-width="1.2"/><path d="M30.2 5.2 h9.6" stroke="rgba(255,255,255,.7)" stroke-width="1.2"/><path d="M44.2 5.2 h9.6" stroke="rgba(255,255,255,.7)" stroke-width="1.2"/><path d="M58.2 5.2 h9.6" stroke="rgba(255,255,255,.7)" stroke-width="1.2"/><path d="M2.2 15.5 h9.6" stroke="#484848" stroke-width="1.25"/><path d="M16.2 15.5 h9.6" stroke="#484848" stroke-width="1.25"/><path d="M30.2 15.5 h9.6" stroke="#484848" stroke-width="1.25"/><path d="M44.2 15.5 h9.6" stroke="#484848" stroke-width="1.25"/><path d="M58.2 15.5 h9.6" stroke="#484848" stroke-width="1.25"/><path d="M2.2 25.6 h9.6" stroke="#484848" stroke-width="1.25"/><path d="M16.2 25.6 h9.6" stroke="#484848" stroke-width="1.25"/><path d="M30.2 25.6 h9.6" stroke="#484848" stroke-width="1.25"/><path d="M44.2 25.6 h9.6" stroke="#484848" stroke-width="1.25"/><path d="M58.2 25.6 h9.6" stroke="#484848" stroke-width="1.25"/><path d="M2.2 35.5 h9.6" stroke="#484848" stroke-width="1.25"/><path d="M16.2 35.5 h9.6" stroke="#484848" stroke-width="1.25"/><path d="M30.2 35.5 h9.6" stroke="#484848" stroke-width="1.25"/><path d="M44.2 35.5 h9.6" stroke="#484848" stroke-width="1.25"/><path d="M58.2 35.5 h9.6" stroke="#484848" stroke-width="1.25"/><path d="M2.2 45.4 h9.6" stroke="#484848" stroke-width="1.25"/><path d="M16.2 45.4 h9.6" stroke="#484848" stroke-width="1.25"/><path d="M30.2 45.4 h9.6" stroke="#484848" stroke-width="1.25"/><path d="M44.2 45.4 h9.6" stroke="#484848" stroke-width="1.25"/><path d="M58.2 45.4 h9.6" stroke="#484848" stroke-width="1.25"/></svg>
<div style="left:1387.8000000000002px;top:396.75px;width:73.4px;height:53.8px;border:1px solid #e4e4e4;border-radius:2.5px;box-sizing:border-box;background:#fff;box-shadow:0 0 1.5px rgba(0,0,0,.12);"></div>
<svg style="left:1389.2px;top:398.1px" width="70" height="51" viewBox="0 0 70 50" preserveAspectRatio="none" fill="none"><rect x="0" y="0" width="70" height="50" fill="#fff"/><rect x="0" y="10.7" width="70" height="9.600000000000001" fill="#d4f5f7"/><rect x="0" y="30.7" width="70" height="9.599999999999998" fill="#d4f5f7"/><path d="M0 20.3 H70" stroke="#93e6eb" stroke-width="1.5"/><path d="M0 30.7 H70" stroke="#93e6eb" stroke-width="1"/><path d="M0 40.3 H70" stroke="#93e6eb" stroke-width="1.5"/><path d="M0 49.5 H70" stroke="#93e6eb" stroke-width="1"/><path d="M0.5 0 V50" stroke="#93e6eb" stroke-width="1"/><path d="M69.4 0 V50" stroke="#93e6eb" stroke-width="1.2"/><rect x="0" y="0" width="70" height="10.399999999999999" fill="#27ced7"/><path d="M2.2 5.2 h9.6" stroke="rgba(255,255,255,.7)" stroke-width="1.2"/><path d="M16.2 5.2 h9.6" stroke="rgba(255,255,255,.7)" stroke-width="1.2"/><path d="M30.2 5.2 h9.6" stroke="rgba(255,255,255,.7)" stroke-width="1.2"/><path d="M44.2 5.2 h9.6" stroke="rgba(255,255,255,.7)" stroke-width="1.2"/><path d="M58.2 5.2 h9.6" stroke="rgba(255,255,255,.7)" stroke-width="1.2"/><path d="M2.2 15.5 h9.6" stroke="#484848" stroke-width="1.25"/><path d="M16.2 15.5 h9.6" stroke="#484848" stroke-width="1.25"/><path d="M30.2 15.5 h9.6" stroke="#484848" stroke-width="1.25"/><path d="M44.2 15.5 h9.6" stroke="#484848" stroke-width="1.25"/><path d="M58.2 15.5 h9.6" stroke="#484848" stroke-width="1.25"/><path d="M2.2 25.6 h9.6" stroke="#484848" stroke-width="1.25"/><path d="M16.2 25.6 h9.6" stroke="#484848" stroke-width="1.25"/><path d="M30.2 25.6 h9.6" stroke="#484848" stroke-width="1.25"/><path d="M44.2 25.6 h9.6" stroke="#484848" stroke-width="1.25"/><path d="M58.2 25.6 h9.6" stroke="#484848" stroke-width="1.25"/><path d="M2.2 35.5 h9.6" stroke="#484848" stroke-width="1.25"/><path d="M16.2 35.5 h9.6" stroke="#484848" stroke-width="1.25"/><path d="M30.2 35.5 h9.6" stroke="#484848" stroke-width="1.25"/><path d="M44.2 35.5 h9.6" stroke="#484848" stroke-width="1.25"/><path d="M58.2 35.5 h9.6" stroke="#484848" stroke-width="1.25"/><path d="M2.2 45.4 h9.6" stroke="#484848" stroke-width="1.25"/><path d="M16.2 45.4 h9.6" stroke="#484848" stroke-width="1.25"/><path d="M30.2 45.4 h9.6" stroke="#484848" stroke-width="1.25"/><path d="M44.2 45.4 h9.6" stroke="#484848" stroke-width="1.25"/><path d="M58.2 45.4 h9.6" stroke="#484848" stroke-width="1.25"/></svg>
<div style="left:1469.5px;top:396.75px;width:73.4px;height:53.8px;border:1px solid #e4e4e4;border-radius:2.5px;box-sizing:border-box;background:#fff;box-shadow:0 0 1.5px rgba(0,0,0,.12);"></div>
<svg style="left:1470.9px;top:398.1px" width="70" height="51" viewBox="0 0 70 50" preserveAspectRatio="none" fill="none"><rect x="0" y="0" width="70" height="50" fill="#fff"/><rect x="0" y="10.7" width="70" height="9.600000000000001" fill="#d9f1ea"/><rect x="0" y="30.7" width="70" height="9.599999999999998" fill="#d9f1ea"/><path d="M0 20.3 H70" stroke="#a0dccb" stroke-width="1.5"/><path d="M0 30.7 H70" stroke="#a0dccb" stroke-width="1"/><path d="M0 40.3 H70" stroke="#a0dccb" stroke-width="1.5"/><path d="M0 49.5 H70" stroke="#a0dccb" stroke-width="1"/><path d="M0.5 0 V50" stroke="#a0dccb" stroke-width="1"/><path d="M69.4 0 V50" stroke="#a0dccb" stroke-width="1.2"/><rect x="0" y="0" width="70" height="10.399999999999999" fill="#42ba97"/><path d="M2.2 5.2 h9.6" stroke="rgba(255,255,255,.7)" stroke-width="1.2"/><path d="M16.2 5.2 h9.6" stroke="rgba(255,255,255,.7)" stroke-width="1.2"/><path d="M30.2 5.2 h9.6" stroke="rgba(255,255,255,.7)" stroke-width="1.2"/><path d="M44.2 5.2 h9.6" stroke="rgba(255,255,255,.7)" stroke-width="1.2"/><path d="M58.2 5.2 h9.6" stroke="rgba(255,255,255,.7)" stroke-width="1.2"/><path d="M2.2 15.5 h9.6" stroke="#484848" stroke-width="1.25"/><path d="M16.2 15.5 h9.6" stroke="#484848" stroke-width="1.25"/><path d="M30.2 15.5 h9.6" stroke="#484848" stroke-width="1.25"/><path d="M44.2 15.5 h9.6" stroke="#484848" stroke-width="1.25"/><path d="M58.2 15.5 h9.6" stroke="#484848" stroke-width="1.25"/><path d="M2.2 25.6 h9.6" stroke="#484848" stroke-width="1.25"/><path d="M16.2 25.6 h9.6" stroke="#484848" stroke-width="1.25"/><path d="M30.2 25.6 h9.6" stroke="#484848" stroke-width="1.25"/><path d="M44.2 25.6 h9.6" stroke="#484848" stroke-width="1.25"/><path d="M58.2 25.6 h9.6" stroke="#484848" stroke-width="1.25"/><path d="M2.2 35.5 h9.6" stroke="#484848" stroke-width="1.25"/><path d="M16.2 35.5 h9.6" stroke="#484848" stroke-width="1.25"/><path d="M30.2 35.5 h9.6" stroke="#484848" stroke-width="1.25"/><path d="M44.2 35.5 h9.6" stroke="#484848" stroke-width="1.25"/><path d="M58.2 35.5 h9.6" stroke="#484848" stroke-width="1.25"/><path d="M2.2 45.4 h9.6" stroke="#484848" stroke-width="1.25"/><path d="M16.2 45.4 h9.6" stroke="#484848" stroke-width="1.25"/><path d="M30.2 45.4 h9.6" stroke="#484848" stroke-width="1.25"/><path d="M44.2 45.4 h9.6" stroke="#484848" stroke-width="1.25"/><path d="M58.2 45.4 h9.6" stroke="#484848" stroke-width="1.25"/></svg>
<div style="left:1551.2px;top:396.75px;width:73.4px;height:53.8px;border:1px solid #e4e4e4;border-radius:2.5px;box-sizing:border-box;background:#fff;box-shadow:0 0 1.5px rgba(0,0,0,.12);"></div>
<svg style="left:1552.6px;top:398.1px" width="70" height="51" viewBox="0 0 70 50" preserveAspectRatio="none" fill="none"><rect x="0" y="0" width="70" height="50" fill="#fff"/><rect x="0" y="10.7" width="70" height="9.600000000000001" fill="#d3ebd9"/><rect x="0" y="30.7" width="70" height="9.599999999999998" fill="#d3ebd9"/><path d="M0 20.3 H70" stroke="#98c7a5" stroke-width="1.5"/><path d="M0 30.7 H70" stroke="#98c7a5" stroke-width="1"/><path d="M0 40.3 H70" stroke="#98c7a5" stroke-width="1.5"/><path d="M0 49.5 H70" stroke="#98c7a5" stroke-width="1"/><path d="M0.5 0 V50" stroke="#98c7a5" stroke-width="1"/><path d="M69.4 0 V50" stroke="#98c7a5" stroke-width="1.2"/><rect x="0" y="0" width="70" height="10.399999999999999" fill="#3e8853"/><path d="M2.2 5.2 h9.6" stroke="rgba(255,255,255,.7)" stroke-width="1.2"/><path d="M16.2 5.2 h9.6" stroke="rgba(255,255,255,.7)" stroke-width="1.2"/><path d="M30.2 5.2 h9.6" stroke="rgba(255,255,255,.7)" stroke-width="1.2"/><path d="M44.2 5.2 h9.6" stroke="rgba(255,255,255,.7)" stroke-width="1.2"/><path d="M58.2 5.2 h9.6" stroke="rgba(255,255,255,.7)" stroke-width="1.2"/><path d="M2.2 15.5 h9.6" stroke="#484848" stroke-width="1.25"/><path d="M16.2 15.5 h9.6" stroke="#484848" stroke-width="1.25"/><path d="M30.2 15.5 h9.6" stroke="#484848" stroke-width="1.25"/><path d="M44.2 15.5 h9.6" stroke="#484848" stroke-width="1.25"/><path d="M58.2 15.5 h9.6" stroke="#484848" stroke-width="1.25"/><path d="M2.2 25.6 h9.6" stroke="#484848" stroke-width="1.25"/><path d="M16.2 25.6 h9.6" stroke="#484848" stroke-width="1.25"/><path d="M30.2 25.6 h9.6" stroke="#484848" stroke-width="1.25"/><path d="M44.2 25.6 h9.6" stroke="#484848" stroke-width="1.25"/><path d="M58.2 25.6 h9.6" stroke="#484848" stroke-width="1.25"/><path d="M2.2 35.5 h9.6" stroke="#484848" stroke-width="1.25"/><path d="M16.2 35.5 h9.6" stroke="#484848" stroke-width="1.25"/><path d="M30.2 35.5 h9.6" stroke="#484848" stroke-width="1.25"/><path d="M44.2 35.5 h9.6" stroke="#484848" stroke-width="1.25"/><path d="M58.2 35.5 h9.6" stroke="#484848" stroke-width="1.25"/><path d="M2.2 45.4 h9.6" stroke="#484848" stroke-width="1.25"/><path d="M16.2 45.4 h9.6" stroke="#484848" stroke-width="1.25"/><path d="M30.2 45.4 h9.6" stroke="#484848" stroke-width="1.25"/><path d="M44.2 45.4 h9.6" stroke="#484848" stroke-width="1.25"/><path d="M58.2 45.4 h9.6" stroke="#484848" stroke-width="1.25"/></svg>
<div style="left:1632.9px;top:396.75px;width:73.4px;height:53.8px;border:1px solid #e4e4e4;border-radius:2.5px;box-sizing:border-box;background:#fff;box-shadow:0 0 1.5px rgba(0,0,0,.12);"></div>
<svg style="left:1634.3px;top:398.1px" width="70" height="51" viewBox="0 0 70 50" preserveAspectRatio="none" fill="none"><rect x="0" y="0" width="70" height="50" fill="#fff"/><rect x="0" y="10.7" width="70" height="9.600000000000001" fill="#dfedec"/><rect x="0" y="30.7" width="70" height="9.599999999999998" fill="#dfedec"/><path d="M0 20.3 H70" stroke="#b0d1cf" stroke-width="1.5"/><path d="M0 30.7 H70" stroke="#b0d1cf" stroke-width="1"/><path d="M0 40.3 H70" stroke="#b0d1cf" stroke-width="1.5"/><path d="M0 49.5 H70" stroke="#b0d1cf" stroke-width="1"/><path d="M0.5 0 V50" stroke="#b0d1cf" stroke-width="1"/><path d="M69.4 0 V50" stroke="#b0d1cf" stroke-width="1.2"/><rect x="0" y="0" width="70" height="10.399999999999999" fill="#62a39f"/><path d="M2.2 5.2 h9.6" stroke="rgba(255,255,255,.7)" stroke-width="1.2"/><path d="M16.2 5.2 h9.6" stroke="rgba(255,255,255,.7)" stroke-width="1.2"/><path d="M30.2 5.2 h9.6" stroke="rgba(255,255,255,.7)" stroke-width="1.2"/><path d="M44.2 5.2 h9.6" stroke="rgba(255,255,255,.7)" stroke-width="1.2"/><path d="M58.2 5.2 h9.6" stroke="rgba(255,255,255,.7)" stroke-width="1.2"/><path d="M2.2 15.5 h9.6" stroke="#484848" stroke-width="1.25"/><path d="M16.2 15.5 h9.6" stroke="#484848" stroke-width="1.25"/><path d="M30.2 15.5 h9.6" stroke="#484848" stroke-width="1.25"/><path d="M44.2 15.5 h9.6" stroke="#484848" stroke-width="1.25"/><path d="M58.2 15.5 h9.6" stroke="#484848" stroke-width="1.25"/><path d="M2.2 25.6 h9.6" stroke="#484848" stroke-width="1.25"/><path d="M16.2 25.6 h9.6" stroke="#484848" stroke-width="1.25"/><path d="M30.2 25.6 h9.6" stroke="#484848" stroke-width="1.25"/><path d="M44.2 25.6 h9.6" stroke="#484848" stroke-width="1.25"/><path d="M58.2 25.6 h9.6" stroke="#484848" stroke-width="1.25"/><path d="M2.2 35.5 h9.6" stroke="#484848" stroke-width="1.25"/><path d="M16.2 35.5 h9.6" stroke="#484848" stroke-width="1.25"/><path d="M30.2 35.5 h9.6" stroke="#484848" stroke-width="1.25"/><path d="M44.2 35.5 h9.6" stroke="#484848" stroke-width="1.25"/><path d="M58.2 35.5 h9.6" stroke="#484848" stroke-width="1.25"/><path d="M2.2 45.4 h9.6" stroke="#484848" stroke-width="1.25"/><path d="M16.2 45.4 h9.6" stroke="#484848" stroke-width="1.25"/><path d="M30.2 45.4 h9.6" stroke="#484848" stroke-width="1.25"/><path d="M44.2 45.4 h9.6" stroke="#484848" stroke-width="1.25"/><path d="M58.2 45.4 h9.6" stroke="#484848" stroke-width="1.25"/></svg>
<div style="left:1711px;top:92px;width:11.5px;height:182px;background:#f3f3f3;border:1px solid #e3e3e3;border-radius:3px;box-sizing:border-box;"></div>
<div style="left:1714px;top:176.3px;width:5.5px;height:1px;background:#dcdcdc;"></div>
<div style="left:1714px;top:178.5px;width:5.5px;height:1px;background:#dcdcdc;"></div>
<div style="left:1714px;top:180.70000000000002px;width:5.5px;height:1px;background:#dcdcdc;"></div>
<div style="left:1714px;top:182.9px;width:5.5px;height:1px;background:#dcdcdc;"></div>
<div style="left:1714px;top:185.10000000000002px;width:5.5px;height:1px;background:#dcdcdc;"></div>
<div style="left:1714px;top:187.3px;width:5.5px;height:1px;background:#dcdcdc;"></div>
<div style="left:1714px;top:189.5px;width:5.5px;height:1px;background:#dcdcdc;"></div>
</div>
</body></html>
